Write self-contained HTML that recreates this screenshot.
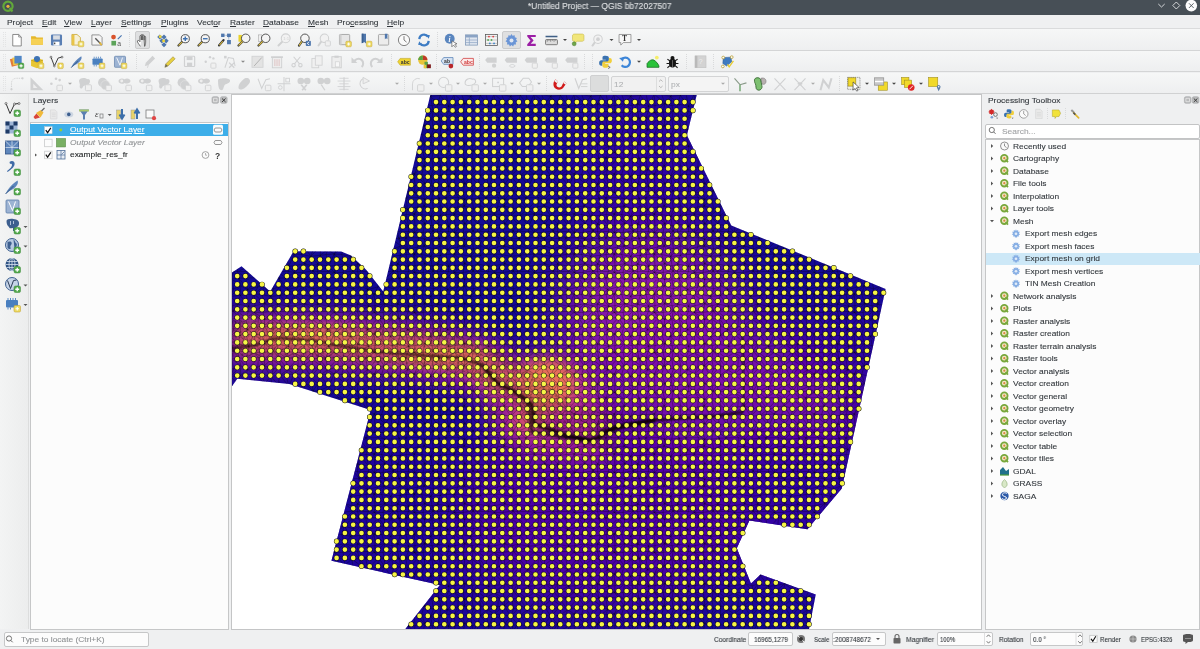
<!DOCTYPE html>
<html><head><meta charset="utf-8"><style>
*{box-sizing:border-box}
body{margin:0;width:1200px;height:649px;overflow:hidden;position:relative;background:#eff0f1;font-family:"Liberation Sans",sans-serif;color:#31363b}
.a{position:absolute}
u{text-decoration-thickness:0.6px;text-underline-offset:1px}
.t{position:absolute;white-space:nowrap;line-height:1;-webkit-text-stroke-width:0.1px;will-change:transform}
</style></head><body>
<div class="a" style="left:0;top:0;width:1200px;height:14.5px;background:#474f56"></div>
<div class="t" style="left:528.30px;top:2.29px;font-size:8.64px;color:#dfe1e3;transform:scaleX(0.975);transform-origin:0 0;">*Untitled Project — QGIS bb72027507</div>
<div class="a" style="left:0;top:14.5px;width:1200px;height:14px;background:#eff0f1;border-bottom:1px solid #dadbdc"></div>
<div class="t" style="left:6.65px;top:18.86px;font-size:7.968px;color:#31363b;transform:scaleX(1.054);transform-origin:0 0;">Project</div>
<div class="t" style="left:41.65px;top:18.86px;font-size:7.968px;color:#31363b;transform:scaleX(1.054);transform-origin:0 0;"><u>E</u>dit</div>
<div class="t" style="left:64.40px;top:18.86px;font-size:7.968px;color:#31363b;transform:scaleX(1.054);transform-origin:0 0;"><u>V</u>iew</div>
<div class="t" style="left:91.35px;top:18.86px;font-size:7.968px;color:#31363b;transform:scaleX(1.054);transform-origin:0 0;"><u>L</u>ayer</div>
<div class="t" style="left:121.10px;top:18.86px;font-size:7.968px;color:#31363b;transform:scaleX(1.054);transform-origin:0 0;"><u>S</u>ettings</div>
<div class="t" style="left:160.70px;top:18.86px;font-size:7.968px;color:#31363b;transform:scaleX(1.054);transform-origin:0 0;"><u>P</u>lugins</div>
<div class="t" style="left:196.90px;top:18.86px;font-size:7.968px;color:#31363b;transform:scaleX(1.054);transform-origin:0 0;">Vect<u>o</u>r</div>
<div class="t" style="left:230.10px;top:18.86px;font-size:7.968px;color:#31363b;transform:scaleX(1.054);transform-origin:0 0;"><u>R</u>aster</div>
<div class="t" style="left:263.00px;top:18.86px;font-size:7.968px;color:#31363b;transform:scaleX(1.054);transform-origin:0 0;"><u>D</u>atabase</div>
<div class="t" style="left:307.60px;top:18.86px;font-size:7.968px;color:#31363b;transform:scaleX(1.054);transform-origin:0 0;"><u>M</u>esh</div>
<div class="t" style="left:336.90px;top:18.86px;font-size:7.968px;color:#31363b;transform:scaleX(1.054);transform-origin:0 0;">Pro<u>c</u>essing</div>
<div class="t" style="left:386.90px;top:18.86px;font-size:7.968px;color:#31363b;transform:scaleX(1.054);transform-origin:0 0;"><u>H</u>elp</div>
<div class="a" style="left:0;top:29px;width:1200px;height:21.5px;background:linear-gradient(#f6f7f7,#eeeff0);border-bottom:1px solid #d4d5d6"></div>
<div class="a" style="left:0;top:51px;width:1200px;height:21px;background:linear-gradient(#f6f7f7,#eeeff0);border-bottom:1px solid #d4d5d6"></div>
<div class="a" style="left:0;top:72.5px;width:1200px;height:21.5px;background:linear-gradient(#f6f7f7,#eeeff0);border-bottom:1px solid #d0d1d2"></div>
<div class="a" style="left:0;top:94px;width:29px;height:535px;background:linear-gradient(90deg,#f3f4f4,#eceded);border-right:1px solid #dcdddd"></div>
<div class="a" style="left:29.5px;top:122px;width:199px;height:508px;background:#fcfcfc;border:1px solid #c6c7c8"></div>
<div class="a" style="left:30px;top:123.5px;width:198px;height:12px;background:#3daee9"></div>
<div class="a" style="left:985px;top:123.5px;width:214.5px;height:15.5px;background:#fff;border:1px solid #c3c4c5;border-radius:2px"></div>
<div class="a" style="left:985px;top:139px;width:215px;height:491px;background:#fcfcfc;border:1px solid #c6c7c8"></div>
<div class="a" style="left:986px;top:252.5px;width:214px;height:12.5px;background:#cde8f7"></div>
<div class="a" style="left:0;top:630px;width:1200px;height:19px;background:#eff0f1"></div>
<div class="a" style="left:3.7px;top:632.3px;width:145.6px;height:14.7px;background:#fcfcfc;border:1px solid #c6c7c8;border-radius:2px"></div>
<div class="a" style="left:748.3px;top:631.8px;width:45.0px;height:14.6px;background:#fcfcfc;border:1px solid #c6c7c8;border-radius:2px"></div>
<div class="a" style="left:831.5px;top:631.8px;width:54.1px;height:14.6px;background:#fcfcfc;border:1px solid #c6c7c8;border-radius:2px"></div>
<div class="a" style="left:937px;top:631.8px;width:55.7px;height:14.6px;background:#fcfcfc;border:1px solid #c6c7c8;border-radius:2px"></div>
<div class="a" style="left:1030.2px;top:631.8px;width:53.3px;height:14.6px;background:#fcfcfc;border:1px solid #c6c7c8;border-radius:2px"></div>
<div class="t" style="left:32.70px;top:97.46px;font-size:7.968px;color:#31363b;transform:scaleX(1.054);transform-origin:0 0;">Layers</div>
<div class="t" style="left:987.70px;top:97.46px;font-size:7.968px;color:#31363b;transform:scaleX(1.054);transform-origin:0 0;">Processing Toolbox</div>
<div class="t" style="left:69.80px;top:126.36px;font-size:7.968px;color:#fff;transform:scaleX(1.054);transform-origin:0 0;text-decoration:underline">Output Vector Layer</div>
<div class="t" style="left:69.80px;top:138.86px;font-size:7.968px;color:#8e9193;transform:scaleX(1.054);transform-origin:0 0;font-style:italic">Output Vector Layer</div>
<div class="t" style="left:69.80px;top:151.36px;font-size:7.968px;color:#232627;transform:scaleX(1.054);transform-origin:0 0;">example_res_fr</div>
<div class="t" style="left:1002.00px;top:128.36px;font-size:7.968px;color:#a0a2a4;transform:scaleX(1.054);transform-origin:0 0;">Search...</div>
<div class="t" style="left:1012.90px;top:142.76px;font-size:7.968px;color:#31363b;transform:scaleX(1.054);transform-origin:0 0;">Recently used</div>
<div class="t" style="left:1012.90px;top:155.26px;font-size:7.968px;color:#31363b;transform:scaleX(1.054);transform-origin:0 0;">Cartography</div>
<div class="t" style="left:1012.90px;top:167.76px;font-size:7.968px;color:#31363b;transform:scaleX(1.054);transform-origin:0 0;">Database</div>
<div class="t" style="left:1012.90px;top:180.26px;font-size:7.968px;color:#31363b;transform:scaleX(1.054);transform-origin:0 0;">File tools</div>
<div class="t" style="left:1012.90px;top:192.76px;font-size:7.968px;color:#31363b;transform:scaleX(1.054);transform-origin:0 0;">Interpolation</div>
<div class="t" style="left:1012.90px;top:205.26px;font-size:7.968px;color:#31363b;transform:scaleX(1.054);transform-origin:0 0;">Layer tools</div>
<div class="t" style="left:1012.90px;top:217.76px;font-size:7.968px;color:#31363b;transform:scaleX(1.054);transform-origin:0 0;">Mesh</div>
<div class="t" style="left:1024.50px;top:230.26px;font-size:7.968px;color:#31363b;transform:scaleX(1.054);transform-origin:0 0;">Export mesh edges</div>
<div class="t" style="left:1024.50px;top:242.76px;font-size:7.968px;color:#31363b;transform:scaleX(1.054);transform-origin:0 0;">Export mesh faces</div>
<div class="t" style="left:1024.50px;top:255.26px;font-size:7.968px;color:#31363b;transform:scaleX(1.054);transform-origin:0 0;">Export mesh on grid</div>
<div class="t" style="left:1024.50px;top:267.76px;font-size:7.968px;color:#31363b;transform:scaleX(1.054);transform-origin:0 0;">Export mesh vertices</div>
<div class="t" style="left:1024.50px;top:280.26px;font-size:7.968px;color:#31363b;transform:scaleX(1.054);transform-origin:0 0;">TIN Mesh Creation</div>
<div class="t" style="left:1012.90px;top:292.76px;font-size:7.968px;color:#31363b;transform:scaleX(1.054);transform-origin:0 0;">Network analysis</div>
<div class="t" style="left:1012.90px;top:305.26px;font-size:7.968px;color:#31363b;transform:scaleX(1.054);transform-origin:0 0;">Plots</div>
<div class="t" style="left:1012.90px;top:317.76px;font-size:7.968px;color:#31363b;transform:scaleX(1.054);transform-origin:0 0;">Raster analysis</div>
<div class="t" style="left:1012.90px;top:330.26px;font-size:7.968px;color:#31363b;transform:scaleX(1.054);transform-origin:0 0;">Raster creation</div>
<div class="t" style="left:1012.90px;top:342.76px;font-size:7.968px;color:#31363b;transform:scaleX(1.054);transform-origin:0 0;">Raster terrain analysis</div>
<div class="t" style="left:1012.90px;top:355.26px;font-size:7.968px;color:#31363b;transform:scaleX(1.054);transform-origin:0 0;">Raster tools</div>
<div class="t" style="left:1012.90px;top:367.76px;font-size:7.968px;color:#31363b;transform:scaleX(1.054);transform-origin:0 0;">Vector analysis</div>
<div class="t" style="left:1012.90px;top:380.26px;font-size:7.968px;color:#31363b;transform:scaleX(1.054);transform-origin:0 0;">Vector creation</div>
<div class="t" style="left:1012.90px;top:392.76px;font-size:7.968px;color:#31363b;transform:scaleX(1.054);transform-origin:0 0;">Vector general</div>
<div class="t" style="left:1012.90px;top:405.26px;font-size:7.968px;color:#31363b;transform:scaleX(1.054);transform-origin:0 0;">Vector geometry</div>
<div class="t" style="left:1012.90px;top:417.76px;font-size:7.968px;color:#31363b;transform:scaleX(1.054);transform-origin:0 0;">Vector overlay</div>
<div class="t" style="left:1012.90px;top:430.26px;font-size:7.968px;color:#31363b;transform:scaleX(1.054);transform-origin:0 0;">Vector selection</div>
<div class="t" style="left:1012.90px;top:442.76px;font-size:7.968px;color:#31363b;transform:scaleX(1.054);transform-origin:0 0;">Vector table</div>
<div class="t" style="left:1012.90px;top:455.26px;font-size:7.968px;color:#31363b;transform:scaleX(1.054);transform-origin:0 0;">Vector tiles</div>
<div class="t" style="left:1012.90px;top:467.76px;font-size:7.968px;color:#31363b;transform:scaleX(1.054);transform-origin:0 0;">GDAL</div>
<div class="t" style="left:1012.90px;top:480.26px;font-size:7.968px;color:#31363b;transform:scaleX(1.054);transform-origin:0 0;">GRASS</div>
<div class="t" style="left:1012.90px;top:492.76px;font-size:7.968px;color:#31363b;transform:scaleX(1.054);transform-origin:0 0;">SAGA</div>
<div class="t" style="left:20.70px;top:636.46px;font-size:7.968px;color:#8f9294;transform:scaleX(1.054);transform-origin:0 0;">Type to locate (Ctrl+K)</div>
<div class="t" style="left:713.50px;top:636.10px;font-size:7.68px;color:#31363b;transform:scaleX(0.860);transform-origin:0 0;">Coordinate</div>
<div class="t" style="left:754.00px;top:636.10px;font-size:7.68px;color:#31363b;transform:scaleX(0.838);transform-origin:0 0;">16965,1279</div>
<div class="t" style="left:814.20px;top:636.10px;font-size:7.68px;color:#31363b;transform:scaleX(0.802);transform-origin:0 0;">Scale</div>
<div class="t" style="left:833.30px;top:636.10px;font-size:7.68px;color:#31363b;transform:scaleX(0.847);transform-origin:0 0;">:2008748672</div>
<div class="t" style="left:906.10px;top:636.10px;font-size:7.68px;color:#31363b;transform:scaleX(0.887);transform-origin:0 0;">Magnifier</div>
<div class="t" style="left:940.00px;top:636.10px;font-size:7.68px;color:#31363b;transform:scaleX(0.769);transform-origin:0 0;">100%</div>
<div class="t" style="left:999.40px;top:636.10px;font-size:7.68px;color:#31363b;transform:scaleX(0.860);transform-origin:0 0;">Rotation</div>
<div class="t" style="left:1033.00px;top:636.10px;font-size:7.68px;color:#31363b;transform:scaleX(0.819);transform-origin:0 0;">0.0 °</div>
<div class="t" style="left:1099.70px;top:636.10px;font-size:7.68px;color:#31363b;transform:scaleX(0.834);transform-origin:0 0;">Render</div>
<div class="t" style="left:1140.50px;top:636.10px;font-size:7.68px;color:#31363b;transform:scaleX(0.772);transform-origin:0 0;">EPSG:4326</div>
<div class="a" style="left:590px;top:75px;width:19px;height:17px;background:#dcdddd;border:1px solid #cfd0d1;border-radius:2px"></div>
<div class="a" style="left:610.6px;top:76px;width:55.5px;height:15.5px;background:#f1f1f1;border:1px solid #d3d4d5;border-radius:2px"></div>
<div class="a" style="left:668px;top:75.5px;width:61px;height:16.5px;background:#f4f4f4;border:1px solid #d3d4d5;border-radius:2px"></div>
<div class="t" style="left:613.50px;top:81.36px;font-size:7.968px;color:#b0b2b4;transform:scaleX(1.054);transform-origin:0 0;">12</div>
<div class="a" style="left:655.5px;top:76.5px;width:1px;height:14.5px;background:#dcdddd"></div>
<div class="t" style="left:670.50px;top:81.36px;font-size:7.968px;color:#b0b2b4;transform:scaleX(1.054);transform-origin:0 0;">px</div>
<div class="a" style="left:134.5px;top:31px;width:15.5px;height:18px;background:#dfe0e1;border:1px solid #cacbcc;border-radius:2px"></div>
<div class="a" style="left:501.8px;top:31px;width:19.5px;height:18px;background:#dfe0e1;border:1px solid #cacbcc;border-radius:2px"></div>
<div class="a" style="left:231px;top:94px;width:751px;height:536px;border:1px solid #c4c5c6;background:#fff"></div>
<svg width="1200" height="649" style="position:absolute;left:0;top:0" viewBox="0 0 1200 649">
<defs>
<clipPath id="cv"><rect x="232" y="95" width="749.5" height="534"/></clipPath>
<clipPath id="pc"><polygon points="430.3,95 696.7,95 686.9,135.3 731.3,225.4 885.6,288.9 841.8,488.5 807.4,529.3 749.4,520.6 736.8,548.2 751,583.6 760.5,574.5 815.7,594.6 808.5,632 403,632 439.9,585.1 331.4,560.8 370.7,410 289.3,384 237.3,378.7 228,392 228,275 241.5,266.3 270.2,291.5 293.6,251.2 341.2,251.5 351,255.4 366.4,270.1 383.2,291.5"/></clipPath>
<filter id="b30" x="-50%" y="-50%" width="200%" height="200%"><feGaussianBlur stdDeviation="25"/></filter>
<filter id="b15" x="-50%" y="-50%" width="200%" height="200%"><feGaussianBlur stdDeviation="12"/></filter>
<filter id="b8" x="-50%" y="-50%" width="200%" height="200%"><feGaussianBlur stdDeviation="7"/></filter>
<filter id="b4" x="-50%" y="-50%" width="200%" height="200%"><feGaussianBlur stdDeviation="4"/></filter>
<filter id="bd" x="0" y="0" width="1200" height="649" filterUnits="userSpaceOnUse"><feGaussianBlur stdDeviation="0.4"/></filter>
<filter id="b1" x="-50%" y="-50%" width="200%" height="200%"><feGaussianBlur stdDeviation="0.8"/></filter>
<pattern id="tri" width="40" height="40" patternUnits="userSpaceOnUse"><path d="M-6.8 -9.1L-2.4 -8.3M-6.8 -9.1L-8.2 -1.0M-6.8 -9.1L-0.9 -1.8M-8.2 -1.0L-0.9 -1.8M-8.2 -1.0L-6.5 9.0M-0.9 -1.8L-6.5 9.0M-6.5 9.0L0.8 5.8M-6.5 9.0L-9.3 16.4M-6.5 9.0L0.2 15.3M-9.3 16.4L0.2 15.3M-9.3 16.4L-7.9 25.9M0.2 15.3L-7.9 25.9M-7.9 25.9L-2.3 24.0M-7.9 25.9L-6.8 30.9M-7.9 25.9L-2.4 31.7M-6.8 30.9L-2.4 31.7M-6.8 30.9L-8.2 39.0M-2.4 31.7L-8.2 39.0M-8.2 39.0L-0.9 38.2M-8.2 39.0L-6.5 49.0M-8.2 39.0L0.8 45.8M-2.4 -8.3L8.4 -8.5M-2.4 -8.3L-0.9 -1.8M8.4 -8.5L-0.9 -1.8M-0.9 -1.8L5.8 -2.1M-0.9 -1.8L0.8 5.8M-0.9 -1.8L7.6 9.7M0.8 5.8L7.6 9.7M0.8 5.8L0.2 15.3M7.6 9.7L0.2 15.3M0.2 15.3L6.1 14.6M0.2 15.3L-2.3 24.0M0.2 15.3L8.7 26.3M-2.3 24.0L8.7 26.3M-2.3 24.0L-2.4 31.7M8.7 26.3L-2.4 31.7M-2.4 31.7L8.4 31.5M-2.4 31.7L-0.9 38.2M-2.4 31.7L5.8 37.9M-0.9 38.2L5.8 37.9M-0.9 38.2L0.8 45.8M5.8 37.9L0.8 45.8M8.4 -8.5L14.4 -7.6M8.4 -8.5L5.8 -2.1M8.4 -8.5L18.4 -2.3M5.8 -2.1L18.4 -2.3M5.8 -2.1L7.6 9.7M18.4 -2.3L7.6 9.7M7.6 9.7L17.8 6.9M7.6 9.7L6.1 14.6M7.6 9.7L14.2 14.0M6.1 14.6L14.2 14.0M6.1 14.6L8.7 26.3M14.2 14.0L8.7 26.3M8.7 26.3L15.0 25.6M8.7 26.3L8.4 31.5M8.7 26.3L14.4 32.4M8.4 31.5L14.4 32.4M8.4 31.5L5.8 37.9M14.4 32.4L5.8 37.9M5.8 37.9L18.4 37.7M5.8 37.9L7.6 49.7M5.8 37.9L17.8 46.9M14.4 -7.6L23.0 -7.6M14.4 -7.6L18.4 -2.3M23.0 -7.6L18.4 -2.3M18.4 -2.3L24.7 -0.7M18.4 -2.3L17.8 6.9M18.4 -2.3L24.2 5.8M17.8 6.9L24.2 5.8M17.8 6.9L14.2 14.0M24.2 5.8L14.2 14.0M14.2 14.0L21.7 14.5M14.2 14.0L15.0 25.6M14.2 14.0L24.9 23.6M15.0 25.6L24.9 23.6M15.0 25.6L14.4 32.4M24.9 23.6L14.4 32.4M14.4 32.4L23.0 32.4M14.4 32.4L18.4 37.7M14.4 32.4L24.7 39.3M18.4 37.7L24.7 39.3M18.4 37.7L17.8 46.9M24.7 39.3L17.8 46.9M23.0 -7.6L33.2 -9.1M23.0 -7.6L24.7 -0.7M23.0 -7.6L31.8 -1.0M24.7 -0.7L31.8 -1.0M24.7 -0.7L24.2 5.8M31.8 -1.0L24.2 5.8M24.2 5.8L33.5 9.0M24.2 5.8L21.7 14.5M24.2 5.8L30.7 16.4M21.7 14.5L30.7 16.4M21.7 14.5L24.9 23.6M30.7 16.4L24.9 23.6M24.9 23.6L32.1 25.9M24.9 23.6L23.0 32.4M24.9 23.6L33.2 30.9M23.0 32.4L33.2 30.9M23.0 32.4L24.7 39.3M33.2 30.9L24.7 39.3M24.7 39.3L31.8 39.0M24.7 39.3L24.2 45.8M24.7 39.3L33.5 49.0M33.2 -9.1L37.6 -8.3M33.2 -9.1L31.8 -1.0M37.6 -8.3L31.8 -1.0M31.8 -1.0L39.1 -1.8M31.8 -1.0L33.5 9.0M31.8 -1.0L40.8 5.8M33.5 9.0L40.8 5.8M33.5 9.0L30.7 16.4M40.8 5.8L30.7 16.4M30.7 16.4L40.2 15.3M30.7 16.4L32.1 25.9M30.7 16.4L37.7 24.0M32.1 25.9L37.7 24.0M32.1 25.9L33.2 30.9M37.7 24.0L33.2 30.9M33.2 30.9L37.6 31.7M33.2 30.9L31.8 39.0M33.2 30.9L39.1 38.2M31.8 39.0L39.1 38.2M31.8 39.0L33.5 49.0M39.1 38.2L33.5 49.0M37.6 -8.3L48.4 -8.5M37.6 -8.3L39.1 -1.8M37.6 -8.3L45.8 -2.1M39.1 -1.8L45.8 -2.1M39.1 -1.8L40.8 5.8M45.8 -2.1L40.8 5.8M40.8 5.8L47.6 9.7M40.8 5.8L40.2 15.3M40.8 5.8L46.1 14.6M40.2 15.3L46.1 14.6M40.2 15.3L37.7 24.0M46.1 14.6L37.7 24.0M37.7 24.0L48.7 26.3M37.7 24.0L37.6 31.7M37.7 24.0L48.4 31.5M37.6 31.7L48.4 31.5M37.6 31.7L39.1 38.2M48.4 31.5L39.1 38.2M39.1 38.2L45.8 37.9M39.1 38.2L40.8 45.8M39.1 38.2L47.6 49.7" fill="none" stroke="#000" stroke-width="0.6" stroke-opacity="0.45"/></pattern>
<pattern id="tri2" width="20" height="20" patternUnits="userSpaceOnUse" patternTransform="rotate(17)"><path d="M-6.8 -9.1L-2.4 -8.3M-6.8 -9.1L-8.2 -1.0M-6.8 -9.1L-0.9 -1.8M-8.2 -1.0L-0.9 -1.8M-8.2 -1.0L-6.5 9.0M-0.9 -1.8L-6.5 9.0M-6.5 9.0L0.8 5.8M-6.5 9.0L-9.3 16.4M-6.5 9.0L0.2 15.3M-9.3 16.4L0.2 15.3M-9.3 16.4L-7.9 25.9M0.2 15.3L-7.9 25.9M-7.9 25.9L-2.3 24.0M-7.9 25.9L-6.8 30.9M-7.9 25.9L-2.4 31.7M-6.8 30.9L-2.4 31.7M-6.8 30.9L-8.2 39.0M-2.4 31.7L-8.2 39.0M-8.2 39.0L-0.9 38.2M-8.2 39.0L-6.5 49.0M-8.2 39.0L0.8 45.8M-2.4 -8.3L8.4 -8.5M-2.4 -8.3L-0.9 -1.8M8.4 -8.5L-0.9 -1.8M-0.9 -1.8L5.8 -2.1M-0.9 -1.8L0.8 5.8M-0.9 -1.8L7.6 9.7M0.8 5.8L7.6 9.7M0.8 5.8L0.2 15.3M7.6 9.7L0.2 15.3M0.2 15.3L6.1 14.6M0.2 15.3L-2.3 24.0M0.2 15.3L8.7 26.3M-2.3 24.0L8.7 26.3M-2.3 24.0L-2.4 31.7M8.7 26.3L-2.4 31.7M-2.4 31.7L8.4 31.5M-2.4 31.7L-0.9 38.2M-2.4 31.7L5.8 37.9M-0.9 38.2L5.8 37.9M-0.9 38.2L0.8 45.8M5.8 37.9L0.8 45.8M8.4 -8.5L14.4 -7.6M8.4 -8.5L5.8 -2.1M8.4 -8.5L18.4 -2.3M5.8 -2.1L18.4 -2.3M5.8 -2.1L7.6 9.7M18.4 -2.3L7.6 9.7M7.6 9.7L17.8 6.9M7.6 9.7L6.1 14.6M7.6 9.7L14.2 14.0M6.1 14.6L14.2 14.0M6.1 14.6L8.7 26.3M14.2 14.0L8.7 26.3M8.7 26.3L15.0 25.6M8.7 26.3L8.4 31.5M8.7 26.3L14.4 32.4M8.4 31.5L14.4 32.4M8.4 31.5L5.8 37.9M14.4 32.4L5.8 37.9M5.8 37.9L18.4 37.7M5.8 37.9L7.6 49.7M5.8 37.9L17.8 46.9M14.4 -7.6L23.0 -7.6M14.4 -7.6L18.4 -2.3M23.0 -7.6L18.4 -2.3M18.4 -2.3L24.7 -0.7M18.4 -2.3L17.8 6.9M18.4 -2.3L24.2 5.8M17.8 6.9L24.2 5.8M17.8 6.9L14.2 14.0M24.2 5.8L14.2 14.0M14.2 14.0L21.7 14.5M14.2 14.0L15.0 25.6M14.2 14.0L24.9 23.6M15.0 25.6L24.9 23.6M15.0 25.6L14.4 32.4M24.9 23.6L14.4 32.4M14.4 32.4L23.0 32.4M14.4 32.4L18.4 37.7M14.4 32.4L24.7 39.3M18.4 37.7L24.7 39.3M18.4 37.7L17.8 46.9M24.7 39.3L17.8 46.9M23.0 -7.6L33.2 -9.1M23.0 -7.6L24.7 -0.7M23.0 -7.6L31.8 -1.0M24.7 -0.7L31.8 -1.0M24.7 -0.7L24.2 5.8M31.8 -1.0L24.2 5.8M24.2 5.8L33.5 9.0M24.2 5.8L21.7 14.5M24.2 5.8L30.7 16.4M21.7 14.5L30.7 16.4M21.7 14.5L24.9 23.6M30.7 16.4L24.9 23.6M24.9 23.6L32.1 25.9M24.9 23.6L23.0 32.4M24.9 23.6L33.2 30.9M23.0 32.4L33.2 30.9M23.0 32.4L24.7 39.3M33.2 30.9L24.7 39.3M24.7 39.3L31.8 39.0M24.7 39.3L24.2 45.8M24.7 39.3L33.5 49.0M33.2 -9.1L37.6 -8.3M33.2 -9.1L31.8 -1.0M37.6 -8.3L31.8 -1.0M31.8 -1.0L39.1 -1.8M31.8 -1.0L33.5 9.0M31.8 -1.0L40.8 5.8M33.5 9.0L40.8 5.8M33.5 9.0L30.7 16.4M40.8 5.8L30.7 16.4M30.7 16.4L40.2 15.3M30.7 16.4L32.1 25.9M30.7 16.4L37.7 24.0M32.1 25.9L37.7 24.0M32.1 25.9L33.2 30.9M37.7 24.0L33.2 30.9M33.2 30.9L37.6 31.7M33.2 30.9L31.8 39.0M33.2 30.9L39.1 38.2M31.8 39.0L39.1 38.2M31.8 39.0L33.5 49.0M39.1 38.2L33.5 49.0M37.6 -8.3L48.4 -8.5M37.6 -8.3L39.1 -1.8M37.6 -8.3L45.8 -2.1M39.1 -1.8L45.8 -2.1M39.1 -1.8L40.8 5.8M45.8 -2.1L40.8 5.8M40.8 5.8L47.6 9.7M40.8 5.8L40.2 15.3M40.8 5.8L46.1 14.6M40.2 15.3L46.1 14.6M40.2 15.3L37.7 24.0M46.1 14.6L37.7 24.0M37.7 24.0L48.7 26.3M37.7 24.0L37.6 31.7M37.7 24.0L48.4 31.5M37.6 31.7L48.4 31.5M37.6 31.7L39.1 38.2M48.4 31.5L39.1 38.2M39.1 38.2L45.8 37.9M39.1 38.2L40.8 45.8M39.1 38.2L47.6 49.7" transform="scale(0.5)" fill="none" stroke="#000" stroke-width="1" stroke-opacity="0.45"/></pattern>
</defs>
<g clip-path="url(#cv)">
<g clip-path="url(#pc)">
<rect x="228" y="90" width="760" height="545" fill="#140a96"/>
<g filter="url(#b30)">
<path d="M480 430 L620 400 L760 330 L880 300 L860 600 L480 560 Z" fill="#3206a6" opacity="0.8"/>
<ellipse cx="600" cy="515" rx="150" ry="100" fill="#5206a6" opacity="0.85"/>
<path d="M330 420 L480 420 L480 629 L330 629Z" fill="#2608a2" opacity="0.6"/>
<ellipse cx="640" cy="175" rx="70" ry="85" fill="#3606a8" opacity="0.75"/>
<ellipse cx="650" cy="298" rx="88" ry="58" fill="#8c14ac"/>
<ellipse cx="610" cy="350" rx="55" ry="40" fill="#8a12ac"/>
<ellipse cx="700" cy="375" rx="95" ry="65" fill="#7a10aa"/>
<ellipse cx="815" cy="405" rx="38" ry="28" fill="#860ea9"/>
</g>
<g filter="url(#b15)">
<path d="M228 340 L330 341 L430 352 L480 364 L530 400 L560 430 L610 438" fill="none" stroke="#9c179e" stroke-width="56" stroke-linejoin="round" opacity="0.95"/>
<ellipse cx="545" cy="405" rx="55" ry="50" fill="#a82296"/>

</g>
<g filter="url(#b8)">
<path d="M236 338 L330 340 L420 350 L470 358 L510 385" fill="none" stroke="#dc5e69" stroke-width="30" stroke-linejoin="round" opacity="0.95"/>
<ellipse cx="545" cy="385" rx="32" ry="26" fill="#e06462"/>
<ellipse cx="528" cy="420" rx="14" ry="12" fill="#d8576b"/>
</g>
<g filter="url(#b4)">
<ellipse cx="310" cy="337" rx="50" ry="9" fill="#ec7853" opacity="0.55"/>
<ellipse cx="440" cy="357" rx="45" ry="9" fill="#ed7953" opacity="0.55"/>
<ellipse cx="548" cy="382" rx="22" ry="18" fill="#ec7853" opacity="0.6"/>
</g>
<rect x="228" y="90" width="760" height="545" fill="url(#tri)"/>
<path d="M228 338 L440 348 L500 370 L560 420 L620 435" fill="none" stroke="url(#tri2)" stroke-width="36" opacity="0.7"/>
<path d="M482 365 L497.7 383.3 L516.2 392.5 L531 403.6 L532.9 409.2 L533.8 424 L544 427.7 L566.2 435 L588.4 440.6 L599.5 437 L614.3 427.7 L630 424 L655 420" fill="none" stroke="#000" stroke-width="8" stroke-linejoin="round" opacity="0.22" filter="url(#b4)"/>
<path d="M482 365 L497.7 383.3 L516.2 392.5 L531 403.6 L532.9 409.2 L533.8 424 L544 427.7 L566.2 435 L588.4 440.6 L599.5 437 L614.3 427.7 L630 424 L655 420" fill="none" stroke="#0a0206" stroke-width="3" stroke-linejoin="round" opacity="0.92" filter="url(#b1)"/>
<path d="M228 349 L252 345.5 L278 338 L316.7 341 L355 348.5 L392 353 L461 358 L482 365" fill="none" stroke="#0a0206" stroke-width="2" stroke-linejoin="round" opacity="0.8" filter="url(#b1)"/>
<path d="M600 432 L655 420 L717 416 L743 412" fill="none" stroke="#0a0206" stroke-width="2.4" stroke-linejoin="round" opacity="0.85" filter="url(#b1)"/>
<path d="M743 412 L744 380 L742 335" fill="none" stroke="#0a0206" stroke-width="2.2" stroke-linejoin="round" opacity="0.6" filter="url(#b1)"/>
<path d="M527 399 L532 432 L589 440" fill="none" stroke="#000" stroke-width="3.5" stroke-linejoin="round" opacity="0.6" filter="url(#b1)"/>
</g>
<g filter="url(#bd)"><path d="M436 102.1h0M444.3 102.1h0M452.6 102.1h0M460.9 102.1h0M469.2 102.1h0M477.5 102.1h0M485.8 102.1h0M494 102.1h0M502.3 102.1h0M510.6 102.1h0M518.9 102.1h0M527.2 102.1h0M535.5 102.1h0M543.8 102.1h0M552.1 102.1h0M560.3 102.1h0M568.6 102.1h0M576.9 102.1h0M585.2 102.1h0M593.5 102.1h0M601.8 102.1h0M610.1 102.1h0M618.4 102.1h0M626.6 102.1h0M634.9 102.1h0M643.2 102.1h0M651.5 102.1h0M659.8 102.1h0M668.1 102.1h0M676.4 102.1h0M684.6 102.1h0M692.9 102.1h0M427.8 110.4h0M436 110.4h0M444.3 110.4h0M452.6 110.4h0M460.9 110.4h0M469.2 110.4h0M477.5 110.4h0M485.8 110.4h0M494 110.4h0M502.3 110.4h0M510.6 110.4h0M518.9 110.4h0M527.2 110.4h0M535.5 110.4h0M543.8 110.4h0M552.1 110.4h0M560.3 110.4h0M568.6 110.4h0M576.9 110.4h0M585.2 110.4h0M593.5 110.4h0M601.8 110.4h0M610.1 110.4h0M618.4 110.4h0M626.6 110.4h0M634.9 110.4h0M643.2 110.4h0M651.5 110.4h0M659.8 110.4h0M668.1 110.4h0M676.4 110.4h0M684.6 110.4h0M692.9 110.4h0M427.8 118.7h0M436 118.7h0M444.3 118.7h0M452.6 118.7h0M460.9 118.7h0M469.2 118.7h0M477.5 118.7h0M485.8 118.7h0M494 118.7h0M502.3 118.7h0M510.6 118.7h0M518.9 118.7h0M527.2 118.7h0M535.5 118.7h0M543.8 118.7h0M552.1 118.7h0M560.3 118.7h0M568.6 118.7h0M576.9 118.7h0M585.2 118.7h0M593.5 118.7h0M601.8 118.7h0M610.1 118.7h0M618.4 118.7h0M626.6 118.7h0M634.9 118.7h0M643.2 118.7h0M651.5 118.7h0M659.8 118.7h0M668.1 118.7h0M676.4 118.7h0M684.6 118.7h0M427.8 127h0M436 127h0M444.3 127h0M452.6 127h0M460.9 127h0M469.2 127h0M477.5 127h0M485.8 127h0M494 127h0M502.3 127h0M510.6 127h0M518.9 127h0M527.2 127h0M535.5 127h0M543.8 127h0M552.1 127h0M560.3 127h0M568.6 127h0M576.9 127h0M585.2 127h0M593.5 127h0M601.8 127h0M610.1 127h0M618.4 127h0M626.6 127h0M634.9 127h0M643.2 127h0M651.5 127h0M659.8 127h0M668.1 127h0M676.4 127h0M684.6 127h0M427.8 135.2h0M436 135.2h0M444.3 135.2h0M452.6 135.2h0M460.9 135.2h0M469.2 135.2h0M477.5 135.2h0M485.8 135.2h0M494 135.2h0M502.3 135.2h0M510.6 135.2h0M518.9 135.2h0M527.2 135.2h0M535.5 135.2h0M543.8 135.2h0M552.1 135.2h0M560.3 135.2h0M568.6 135.2h0M576.9 135.2h0M585.2 135.2h0M593.5 135.2h0M601.8 135.2h0M610.1 135.2h0M618.4 135.2h0M626.6 135.2h0M634.9 135.2h0M643.2 135.2h0M651.5 135.2h0M659.8 135.2h0M668.1 135.2h0M676.4 135.2h0M684.6 135.2h0M419.5 143.5h0M427.8 143.5h0M436 143.5h0M444.3 143.5h0M452.6 143.5h0M460.9 143.5h0M469.2 143.5h0M477.5 143.5h0M485.8 143.5h0M494 143.5h0M502.3 143.5h0M510.6 143.5h0M518.9 143.5h0M527.2 143.5h0M535.5 143.5h0M543.8 143.5h0M552.1 143.5h0M560.3 143.5h0M568.6 143.5h0M576.9 143.5h0M585.2 143.5h0M593.5 143.5h0M601.8 143.5h0M610.1 143.5h0M618.4 143.5h0M626.6 143.5h0M634.9 143.5h0M643.2 143.5h0M651.5 143.5h0M659.8 143.5h0M668.1 143.5h0M676.4 143.5h0M684.6 143.5h0M419.5 151.8h0M427.8 151.8h0M436 151.8h0M444.3 151.8h0M452.6 151.8h0M460.9 151.8h0M469.2 151.8h0M477.5 151.8h0M485.8 151.8h0M494 151.8h0M502.3 151.8h0M510.6 151.8h0M518.9 151.8h0M527.2 151.8h0M535.5 151.8h0M543.8 151.8h0M552.1 151.8h0M560.3 151.8h0M568.6 151.8h0M576.9 151.8h0M585.2 151.8h0M593.5 151.8h0M601.8 151.8h0M610.1 151.8h0M618.4 151.8h0M626.6 151.8h0M634.9 151.8h0M643.2 151.8h0M651.5 151.8h0M659.8 151.8h0M668.1 151.8h0M676.4 151.8h0M684.6 151.8h0M692.9 151.8h0M419.5 160.1h0M427.8 160.1h0M436 160.1h0M444.3 160.1h0M452.6 160.1h0M460.9 160.1h0M469.2 160.1h0M477.5 160.1h0M485.8 160.1h0M494 160.1h0M502.3 160.1h0M510.6 160.1h0M518.9 160.1h0M527.2 160.1h0M535.5 160.1h0M543.8 160.1h0M552.1 160.1h0M560.3 160.1h0M568.6 160.1h0M576.9 160.1h0M585.2 160.1h0M593.5 160.1h0M601.8 160.1h0M610.1 160.1h0M618.4 160.1h0M626.6 160.1h0M634.9 160.1h0M643.2 160.1h0M651.5 160.1h0M659.8 160.1h0M668.1 160.1h0M676.4 160.1h0M684.6 160.1h0M692.9 160.1h0M419.5 168.4h0M427.8 168.4h0M436 168.4h0M444.3 168.4h0M452.6 168.4h0M460.9 168.4h0M469.2 168.4h0M477.5 168.4h0M485.8 168.4h0M494 168.4h0M502.3 168.4h0M510.6 168.4h0M518.9 168.4h0M527.2 168.4h0M535.5 168.4h0M543.8 168.4h0M552.1 168.4h0M560.3 168.4h0M568.6 168.4h0M576.9 168.4h0M585.2 168.4h0M593.5 168.4h0M601.8 168.4h0M610.1 168.4h0M618.4 168.4h0M626.6 168.4h0M634.9 168.4h0M643.2 168.4h0M651.5 168.4h0M659.8 168.4h0M668.1 168.4h0M676.4 168.4h0M684.6 168.4h0M692.9 168.4h0M701.2 168.4h0M411.2 176.7h0M419.5 176.7h0M427.8 176.7h0M436 176.7h0M444.3 176.7h0M452.6 176.7h0M460.9 176.7h0M469.2 176.7h0M477.5 176.7h0M485.8 176.7h0M494 176.7h0M502.3 176.7h0M510.6 176.7h0M518.9 176.7h0M527.2 176.7h0M535.5 176.7h0M543.8 176.7h0M552.1 176.7h0M560.3 176.7h0M568.6 176.7h0M576.9 176.7h0M585.2 176.7h0M593.5 176.7h0M601.8 176.7h0M610.1 176.7h0M618.4 176.7h0M626.6 176.7h0M634.9 176.7h0M643.2 176.7h0M651.5 176.7h0M659.8 176.7h0M668.1 176.7h0M676.4 176.7h0M684.6 176.7h0M692.9 176.7h0M701.2 176.7h0M411.2 185h0M419.5 185h0M427.8 185h0M436 185h0M444.3 185h0M452.6 185h0M460.9 185h0M469.2 185h0M477.5 185h0M485.8 185h0M494 185h0M502.3 185h0M510.6 185h0M518.9 185h0M527.2 185h0M535.5 185h0M543.8 185h0M552.1 185h0M560.3 185h0M568.6 185h0M576.9 185h0M585.2 185h0M593.5 185h0M601.8 185h0M610.1 185h0M618.4 185h0M626.6 185h0M634.9 185h0M643.2 185h0M651.5 185h0M659.8 185h0M668.1 185h0M676.4 185h0M684.6 185h0M692.9 185h0M701.2 185h0M709.5 185h0M411.2 193.3h0M419.5 193.3h0M427.8 193.3h0M436 193.3h0M444.3 193.3h0M452.6 193.3h0M460.9 193.3h0M469.2 193.3h0M477.5 193.3h0M485.8 193.3h0M494 193.3h0M502.3 193.3h0M510.6 193.3h0M518.9 193.3h0M527.2 193.3h0M535.5 193.3h0M543.8 193.3h0M552.1 193.3h0M560.3 193.3h0M568.6 193.3h0M576.9 193.3h0M585.2 193.3h0M593.5 193.3h0M601.8 193.3h0M610.1 193.3h0M618.4 193.3h0M626.6 193.3h0M634.9 193.3h0M643.2 193.3h0M651.5 193.3h0M659.8 193.3h0M668.1 193.3h0M676.4 193.3h0M684.6 193.3h0M692.9 193.3h0M701.2 193.3h0M709.5 193.3h0M411.2 201.5h0M419.5 201.5h0M427.8 201.5h0M436 201.5h0M444.3 201.5h0M452.6 201.5h0M460.9 201.5h0M469.2 201.5h0M477.5 201.5h0M485.8 201.5h0M494 201.5h0M502.3 201.5h0M510.6 201.5h0M518.9 201.5h0M527.2 201.5h0M535.5 201.5h0M543.8 201.5h0M552.1 201.5h0M560.3 201.5h0M568.6 201.5h0M576.9 201.5h0M585.2 201.5h0M593.5 201.5h0M601.8 201.5h0M610.1 201.5h0M618.4 201.5h0M626.6 201.5h0M634.9 201.5h0M643.2 201.5h0M651.5 201.5h0M659.8 201.5h0M668.1 201.5h0M676.4 201.5h0M684.6 201.5h0M692.9 201.5h0M701.2 201.5h0M709.5 201.5h0M717.8 201.5h0M402.9 209.8h0M411.2 209.8h0M419.5 209.8h0M427.8 209.8h0M436 209.8h0M444.3 209.8h0M452.6 209.8h0M460.9 209.8h0M469.2 209.8h0M477.5 209.8h0M485.8 209.8h0M494 209.8h0M502.3 209.8h0M510.6 209.8h0M518.9 209.8h0M527.2 209.8h0M535.5 209.8h0M543.8 209.8h0M552.1 209.8h0M560.3 209.8h0M568.6 209.8h0M576.9 209.8h0M585.2 209.8h0M593.5 209.8h0M601.8 209.8h0M610.1 209.8h0M618.4 209.8h0M626.6 209.8h0M634.9 209.8h0M643.2 209.8h0M651.5 209.8h0M659.8 209.8h0M668.1 209.8h0M676.4 209.8h0M684.6 209.8h0M692.9 209.8h0M701.2 209.8h0M709.5 209.8h0M717.8 209.8h0M402.9 218.1h0M411.2 218.1h0M419.5 218.1h0M427.8 218.1h0M436 218.1h0M444.3 218.1h0M452.6 218.1h0M460.9 218.1h0M469.2 218.1h0M477.5 218.1h0M485.8 218.1h0M494 218.1h0M502.3 218.1h0M510.6 218.1h0M518.9 218.1h0M527.2 218.1h0M535.5 218.1h0M543.8 218.1h0M552.1 218.1h0M560.3 218.1h0M568.6 218.1h0M576.9 218.1h0M585.2 218.1h0M593.5 218.1h0M601.8 218.1h0M610.1 218.1h0M618.4 218.1h0M626.6 218.1h0M634.9 218.1h0M643.2 218.1h0M651.5 218.1h0M659.8 218.1h0M668.1 218.1h0M676.4 218.1h0M684.6 218.1h0M692.9 218.1h0M701.2 218.1h0M709.5 218.1h0M717.8 218.1h0M726.1 218.1h0M402.9 226.4h0M411.2 226.4h0M419.5 226.4h0M427.8 226.4h0M436 226.4h0M444.3 226.4h0M452.6 226.4h0M460.9 226.4h0M469.2 226.4h0M477.5 226.4h0M485.8 226.4h0M494 226.4h0M502.3 226.4h0M510.6 226.4h0M518.9 226.4h0M527.2 226.4h0M535.5 226.4h0M543.8 226.4h0M552.1 226.4h0M560.3 226.4h0M568.6 226.4h0M576.9 226.4h0M585.2 226.4h0M593.5 226.4h0M601.8 226.4h0M610.1 226.4h0M618.4 226.4h0M626.6 226.4h0M634.9 226.4h0M643.2 226.4h0M651.5 226.4h0M659.8 226.4h0M668.1 226.4h0M676.4 226.4h0M684.6 226.4h0M692.9 226.4h0M701.2 226.4h0M709.5 226.4h0M717.8 226.4h0M726.1 226.4h0M402.9 234.7h0M411.2 234.7h0M419.5 234.7h0M427.8 234.7h0M436 234.7h0M444.3 234.7h0M452.6 234.7h0M460.9 234.7h0M469.2 234.7h0M477.5 234.7h0M485.8 234.7h0M494 234.7h0M502.3 234.7h0M510.6 234.7h0M518.9 234.7h0M527.2 234.7h0M535.5 234.7h0M543.8 234.7h0M552.1 234.7h0M560.3 234.7h0M568.6 234.7h0M576.9 234.7h0M585.2 234.7h0M593.5 234.7h0M601.8 234.7h0M610.1 234.7h0M618.4 234.7h0M626.6 234.7h0M634.9 234.7h0M643.2 234.7h0M651.5 234.7h0M659.8 234.7h0M668.1 234.7h0M676.4 234.7h0M684.6 234.7h0M692.9 234.7h0M701.2 234.7h0M709.5 234.7h0M717.8 234.7h0M726.1 234.7h0M734.4 234.7h0M742.7 234.7h0M750.9 234.7h0M402.9 243h0M411.2 243h0M419.5 243h0M427.8 243h0M436 243h0M444.3 243h0M452.6 243h0M460.9 243h0M469.2 243h0M477.5 243h0M485.8 243h0M494 243h0M502.3 243h0M510.6 243h0M518.9 243h0M527.2 243h0M535.5 243h0M543.8 243h0M552.1 243h0M560.3 243h0M568.6 243h0M576.9 243h0M585.2 243h0M593.5 243h0M601.8 243h0M610.1 243h0M618.4 243h0M626.6 243h0M634.9 243h0M643.2 243h0M651.5 243h0M659.8 243h0M668.1 243h0M676.4 243h0M684.6 243h0M692.9 243h0M701.2 243h0M709.5 243h0M717.8 243h0M726.1 243h0M734.4 243h0M742.7 243h0M750.9 243h0M759.2 243h0M767.5 243h0M295.2 251.3h0M303.4 251.3h0M394.6 251.3h0M402.9 251.3h0M411.2 251.3h0M419.5 251.3h0M427.8 251.3h0M436 251.3h0M444.3 251.3h0M452.6 251.3h0M460.9 251.3h0M469.2 251.3h0M477.5 251.3h0M485.8 251.3h0M494 251.3h0M502.3 251.3h0M510.6 251.3h0M518.9 251.3h0M527.2 251.3h0M535.5 251.3h0M543.8 251.3h0M552.1 251.3h0M560.3 251.3h0M568.6 251.3h0M576.9 251.3h0M585.2 251.3h0M593.5 251.3h0M601.8 251.3h0M610.1 251.3h0M618.4 251.3h0M626.6 251.3h0M634.9 251.3h0M643.2 251.3h0M651.5 251.3h0M659.8 251.3h0M668.1 251.3h0M676.4 251.3h0M684.6 251.3h0M692.9 251.3h0M701.2 251.3h0M709.5 251.3h0M717.8 251.3h0M726.1 251.3h0M734.4 251.3h0M742.7 251.3h0M750.9 251.3h0M759.2 251.3h0M767.5 251.3h0M775.8 251.3h0M784.1 251.3h0M792.4 251.3h0M295.2 259.6h0M303.4 259.6h0M311.7 259.6h0M320 259.6h0M328.3 259.6h0M336.6 259.6h0M344.9 259.6h0M353.2 259.6h0M394.6 259.6h0M402.9 259.6h0M411.2 259.6h0M419.5 259.6h0M427.8 259.6h0M436 259.6h0M444.3 259.6h0M452.6 259.6h0M460.9 259.6h0M469.2 259.6h0M477.5 259.6h0M485.8 259.6h0M494 259.6h0M502.3 259.6h0M510.6 259.6h0M518.9 259.6h0M527.2 259.6h0M535.5 259.6h0M543.8 259.6h0M552.1 259.6h0M560.3 259.6h0M568.6 259.6h0M576.9 259.6h0M585.2 259.6h0M593.5 259.6h0M601.8 259.6h0M610.1 259.6h0M618.4 259.6h0M626.6 259.6h0M634.9 259.6h0M643.2 259.6h0M651.5 259.6h0M659.8 259.6h0M668.1 259.6h0M676.4 259.6h0M684.6 259.6h0M692.9 259.6h0M701.2 259.6h0M709.5 259.6h0M717.8 259.6h0M726.1 259.6h0M734.4 259.6h0M742.7 259.6h0M750.9 259.6h0M759.2 259.6h0M767.5 259.6h0M775.8 259.6h0M784.1 259.6h0M792.4 259.6h0M800.7 259.6h0M809 259.6h0M286.9 267.8h0M295.2 267.8h0M303.4 267.8h0M311.7 267.8h0M320 267.8h0M328.3 267.8h0M336.6 267.8h0M344.9 267.8h0M353.2 267.8h0M361.5 267.8h0M394.6 267.8h0M402.9 267.8h0M411.2 267.8h0M419.5 267.8h0M427.8 267.8h0M436 267.8h0M444.3 267.8h0M452.6 267.8h0M460.9 267.8h0M469.2 267.8h0M477.5 267.8h0M485.8 267.8h0M494 267.8h0M502.3 267.8h0M510.6 267.8h0M518.9 267.8h0M527.2 267.8h0M535.5 267.8h0M543.8 267.8h0M552.1 267.8h0M560.3 267.8h0M568.6 267.8h0M576.9 267.8h0M585.2 267.8h0M593.5 267.8h0M601.8 267.8h0M610.1 267.8h0M618.4 267.8h0M626.6 267.8h0M634.9 267.8h0M643.2 267.8h0M651.5 267.8h0M659.8 267.8h0M668.1 267.8h0M676.4 267.8h0M684.6 267.8h0M692.9 267.8h0M701.2 267.8h0M709.5 267.8h0M717.8 267.8h0M726.1 267.8h0M734.4 267.8h0M742.7 267.8h0M750.9 267.8h0M759.2 267.8h0M767.5 267.8h0M775.8 267.8h0M784.1 267.8h0M792.4 267.8h0M800.7 267.8h0M809 267.8h0M817.2 267.8h0M825.5 267.8h0M833.8 267.8h0M237.2 276.1h0M245.4 276.1h0M286.9 276.1h0M295.2 276.1h0M303.4 276.1h0M311.7 276.1h0M320 276.1h0M328.3 276.1h0M336.6 276.1h0M344.9 276.1h0M353.2 276.1h0M361.5 276.1h0M369.7 276.1h0M394.6 276.1h0M402.9 276.1h0M411.2 276.1h0M419.5 276.1h0M427.8 276.1h0M436 276.1h0M444.3 276.1h0M452.6 276.1h0M460.9 276.1h0M469.2 276.1h0M477.5 276.1h0M485.8 276.1h0M494 276.1h0M502.3 276.1h0M510.6 276.1h0M518.9 276.1h0M527.2 276.1h0M535.5 276.1h0M543.8 276.1h0M552.1 276.1h0M560.3 276.1h0M568.6 276.1h0M576.9 276.1h0M585.2 276.1h0M593.5 276.1h0M601.8 276.1h0M610.1 276.1h0M618.4 276.1h0M626.6 276.1h0M634.9 276.1h0M643.2 276.1h0M651.5 276.1h0M659.8 276.1h0M668.1 276.1h0M676.4 276.1h0M684.6 276.1h0M692.9 276.1h0M701.2 276.1h0M709.5 276.1h0M717.8 276.1h0M726.1 276.1h0M734.4 276.1h0M742.7 276.1h0M750.9 276.1h0M759.2 276.1h0M767.5 276.1h0M775.8 276.1h0M784.1 276.1h0M792.4 276.1h0M800.7 276.1h0M809 276.1h0M817.2 276.1h0M825.5 276.1h0M833.8 276.1h0M842.1 276.1h0M850.4 276.1h0M237.2 284.4h0M245.4 284.4h0M253.7 284.4h0M262 284.4h0M278.6 284.4h0M286.9 284.4h0M295.2 284.4h0M303.4 284.4h0M311.7 284.4h0M320 284.4h0M328.3 284.4h0M336.6 284.4h0M344.9 284.4h0M353.2 284.4h0M361.5 284.4h0M369.7 284.4h0M386.3 284.4h0M394.6 284.4h0M402.9 284.4h0M411.2 284.4h0M419.5 284.4h0M427.8 284.4h0M436 284.4h0M444.3 284.4h0M452.6 284.4h0M460.9 284.4h0M469.2 284.4h0M477.5 284.4h0M485.8 284.4h0M494 284.4h0M502.3 284.4h0M510.6 284.4h0M518.9 284.4h0M527.2 284.4h0M535.5 284.4h0M543.8 284.4h0M552.1 284.4h0M560.3 284.4h0M568.6 284.4h0M576.9 284.4h0M585.2 284.4h0M593.5 284.4h0M601.8 284.4h0M610.1 284.4h0M618.4 284.4h0M626.6 284.4h0M634.9 284.4h0M643.2 284.4h0M651.5 284.4h0M659.8 284.4h0M668.1 284.4h0M676.4 284.4h0M684.6 284.4h0M692.9 284.4h0M701.2 284.4h0M709.5 284.4h0M717.8 284.4h0M726.1 284.4h0M734.4 284.4h0M742.7 284.4h0M750.9 284.4h0M759.2 284.4h0M767.5 284.4h0M775.8 284.4h0M784.1 284.4h0M792.4 284.4h0M800.7 284.4h0M809 284.4h0M817.2 284.4h0M825.5 284.4h0M833.8 284.4h0M842.1 284.4h0M850.4 284.4h0M858.7 284.4h0M867 284.4h0M237.2 292.7h0M245.4 292.7h0M253.7 292.7h0M262 292.7h0M270.3 292.7h0M278.6 292.7h0M286.9 292.7h0M295.2 292.7h0M303.4 292.7h0M311.7 292.7h0M320 292.7h0M328.3 292.7h0M336.6 292.7h0M344.9 292.7h0M353.2 292.7h0M361.5 292.7h0M369.7 292.7h0M378 292.7h0M386.3 292.7h0M394.6 292.7h0M402.9 292.7h0M411.2 292.7h0M419.5 292.7h0M427.8 292.7h0M436 292.7h0M444.3 292.7h0M452.6 292.7h0M460.9 292.7h0M469.2 292.7h0M477.5 292.7h0M485.8 292.7h0M494 292.7h0M502.3 292.7h0M510.6 292.7h0M518.9 292.7h0M527.2 292.7h0M535.5 292.7h0M543.8 292.7h0M552.1 292.7h0M560.3 292.7h0M568.6 292.7h0M576.9 292.7h0M585.2 292.7h0M593.5 292.7h0M601.8 292.7h0M610.1 292.7h0M618.4 292.7h0M626.6 292.7h0M634.9 292.7h0M643.2 292.7h0M651.5 292.7h0M659.8 292.7h0M668.1 292.7h0M676.4 292.7h0M684.6 292.7h0M692.9 292.7h0M701.2 292.7h0M709.5 292.7h0M717.8 292.7h0M726.1 292.7h0M734.4 292.7h0M742.7 292.7h0M750.9 292.7h0M759.2 292.7h0M767.5 292.7h0M775.8 292.7h0M784.1 292.7h0M792.4 292.7h0M800.7 292.7h0M809 292.7h0M817.2 292.7h0M825.5 292.7h0M833.8 292.7h0M842.1 292.7h0M850.4 292.7h0M858.7 292.7h0M867 292.7h0M875.2 292.7h0M883.5 292.7h0M237.2 301h0M245.4 301h0M253.7 301h0M262 301h0M270.3 301h0M278.6 301h0M286.9 301h0M295.2 301h0M303.4 301h0M311.7 301h0M320 301h0M328.3 301h0M336.6 301h0M344.9 301h0M353.2 301h0M361.5 301h0M369.7 301h0M378 301h0M386.3 301h0M394.6 301h0M402.9 301h0M411.2 301h0M419.5 301h0M427.8 301h0M436 301h0M444.3 301h0M452.6 301h0M460.9 301h0M469.2 301h0M477.5 301h0M485.8 301h0M494 301h0M502.3 301h0M510.6 301h0M518.9 301h0M527.2 301h0M535.5 301h0M543.8 301h0M552.1 301h0M560.3 301h0M568.6 301h0M576.9 301h0M585.2 301h0M593.5 301h0M601.8 301h0M610.1 301h0M618.4 301h0M626.6 301h0M634.9 301h0M643.2 301h0M651.5 301h0M659.8 301h0M668.1 301h0M676.4 301h0M684.6 301h0M692.9 301h0M701.2 301h0M709.5 301h0M717.8 301h0M726.1 301h0M734.4 301h0M742.7 301h0M750.9 301h0M759.2 301h0M767.5 301h0M775.8 301h0M784.1 301h0M792.4 301h0M800.7 301h0M809 301h0M817.2 301h0M825.5 301h0M833.8 301h0M842.1 301h0M850.4 301h0M858.7 301h0M867 301h0M875.2 301h0M237.2 309.3h0M245.4 309.3h0M253.7 309.3h0M262 309.3h0M270.3 309.3h0M278.6 309.3h0M286.9 309.3h0M295.2 309.3h0M303.4 309.3h0M311.7 309.3h0M320 309.3h0M328.3 309.3h0M336.6 309.3h0M344.9 309.3h0M353.2 309.3h0M361.5 309.3h0M369.7 309.3h0M378 309.3h0M386.3 309.3h0M394.6 309.3h0M402.9 309.3h0M411.2 309.3h0M419.5 309.3h0M427.8 309.3h0M436 309.3h0M444.3 309.3h0M452.6 309.3h0M460.9 309.3h0M469.2 309.3h0M477.5 309.3h0M485.8 309.3h0M494 309.3h0M502.3 309.3h0M510.6 309.3h0M518.9 309.3h0M527.2 309.3h0M535.5 309.3h0M543.8 309.3h0M552.1 309.3h0M560.3 309.3h0M568.6 309.3h0M576.9 309.3h0M585.2 309.3h0M593.5 309.3h0M601.8 309.3h0M610.1 309.3h0M618.4 309.3h0M626.6 309.3h0M634.9 309.3h0M643.2 309.3h0M651.5 309.3h0M659.8 309.3h0M668.1 309.3h0M676.4 309.3h0M684.6 309.3h0M692.9 309.3h0M701.2 309.3h0M709.5 309.3h0M717.8 309.3h0M726.1 309.3h0M734.4 309.3h0M742.7 309.3h0M750.9 309.3h0M759.2 309.3h0M767.5 309.3h0M775.8 309.3h0M784.1 309.3h0M792.4 309.3h0M800.7 309.3h0M809 309.3h0M817.2 309.3h0M825.5 309.3h0M833.8 309.3h0M842.1 309.3h0M850.4 309.3h0M858.7 309.3h0M867 309.3h0M875.2 309.3h0M237.2 317.6h0M245.4 317.6h0M253.7 317.6h0M262 317.6h0M270.3 317.6h0M278.6 317.6h0M286.9 317.6h0M295.2 317.6h0M303.4 317.6h0M311.7 317.6h0M320 317.6h0M328.3 317.6h0M336.6 317.6h0M344.9 317.6h0M353.2 317.6h0M361.5 317.6h0M369.7 317.6h0M378 317.6h0M386.3 317.6h0M394.6 317.6h0M402.9 317.6h0M411.2 317.6h0M419.5 317.6h0M427.8 317.6h0M436 317.6h0M444.3 317.6h0M452.6 317.6h0M460.9 317.6h0M469.2 317.6h0M477.5 317.6h0M485.8 317.6h0M494 317.6h0M502.3 317.6h0M510.6 317.6h0M518.9 317.6h0M527.2 317.6h0M535.5 317.6h0M543.8 317.6h0M552.1 317.6h0M560.3 317.6h0M568.6 317.6h0M576.9 317.6h0M585.2 317.6h0M593.5 317.6h0M601.8 317.6h0M610.1 317.6h0M618.4 317.6h0M626.6 317.6h0M634.9 317.6h0M643.2 317.6h0M651.5 317.6h0M659.8 317.6h0M668.1 317.6h0M676.4 317.6h0M684.6 317.6h0M692.9 317.6h0M701.2 317.6h0M709.5 317.6h0M717.8 317.6h0M726.1 317.6h0M734.4 317.6h0M742.7 317.6h0M750.9 317.6h0M759.2 317.6h0M767.5 317.6h0M775.8 317.6h0M784.1 317.6h0M792.4 317.6h0M800.7 317.6h0M809 317.6h0M817.2 317.6h0M825.5 317.6h0M833.8 317.6h0M842.1 317.6h0M850.4 317.6h0M858.7 317.6h0M867 317.6h0M875.2 317.6h0M237.2 325.8h0M245.4 325.8h0M253.7 325.8h0M262 325.8h0M270.3 325.8h0M278.6 325.8h0M286.9 325.8h0M295.2 325.8h0M303.4 325.8h0M311.7 325.8h0M320 325.8h0M328.3 325.8h0M336.6 325.8h0M344.9 325.8h0M353.2 325.8h0M361.5 325.8h0M369.7 325.8h0M378 325.8h0M386.3 325.8h0M394.6 325.8h0M402.9 325.8h0M411.2 325.8h0M419.5 325.8h0M427.8 325.8h0M436 325.8h0M444.3 325.8h0M452.6 325.8h0M460.9 325.8h0M469.2 325.8h0M477.5 325.8h0M485.8 325.8h0M494 325.8h0M502.3 325.8h0M510.6 325.8h0M518.9 325.8h0M527.2 325.8h0M535.5 325.8h0M543.8 325.8h0M552.1 325.8h0M560.3 325.8h0M568.6 325.8h0M576.9 325.8h0M585.2 325.8h0M593.5 325.8h0M601.8 325.8h0M610.1 325.8h0M618.4 325.8h0M626.6 325.8h0M634.9 325.8h0M643.2 325.8h0M651.5 325.8h0M659.8 325.8h0M668.1 325.8h0M676.4 325.8h0M684.6 325.8h0M692.9 325.8h0M701.2 325.8h0M709.5 325.8h0M717.8 325.8h0M726.1 325.8h0M734.4 325.8h0M742.7 325.8h0M750.9 325.8h0M759.2 325.8h0M767.5 325.8h0M775.8 325.8h0M784.1 325.8h0M792.4 325.8h0M800.7 325.8h0M809 325.8h0M817.2 325.8h0M825.5 325.8h0M833.8 325.8h0M842.1 325.8h0M850.4 325.8h0M858.7 325.8h0M867 325.8h0M875.2 325.8h0M237.2 334.1h0M245.4 334.1h0M253.7 334.1h0M262 334.1h0M270.3 334.1h0M278.6 334.1h0M286.9 334.1h0M295.2 334.1h0M303.4 334.1h0M311.7 334.1h0M320 334.1h0M328.3 334.1h0M336.6 334.1h0M344.9 334.1h0M353.2 334.1h0M361.5 334.1h0M369.7 334.1h0M378 334.1h0M386.3 334.1h0M394.6 334.1h0M402.9 334.1h0M411.2 334.1h0M419.5 334.1h0M427.8 334.1h0M436 334.1h0M444.3 334.1h0M452.6 334.1h0M460.9 334.1h0M469.2 334.1h0M477.5 334.1h0M485.8 334.1h0M494 334.1h0M502.3 334.1h0M510.6 334.1h0M518.9 334.1h0M527.2 334.1h0M535.5 334.1h0M543.8 334.1h0M552.1 334.1h0M560.3 334.1h0M568.6 334.1h0M576.9 334.1h0M585.2 334.1h0M593.5 334.1h0M601.8 334.1h0M610.1 334.1h0M618.4 334.1h0M626.6 334.1h0M634.9 334.1h0M643.2 334.1h0M651.5 334.1h0M659.8 334.1h0M668.1 334.1h0M676.4 334.1h0M684.6 334.1h0M692.9 334.1h0M701.2 334.1h0M709.5 334.1h0M717.8 334.1h0M726.1 334.1h0M734.4 334.1h0M742.7 334.1h0M750.9 334.1h0M759.2 334.1h0M767.5 334.1h0M775.8 334.1h0M784.1 334.1h0M792.4 334.1h0M800.7 334.1h0M809 334.1h0M817.2 334.1h0M825.5 334.1h0M833.8 334.1h0M842.1 334.1h0M850.4 334.1h0M858.7 334.1h0M867 334.1h0M875.2 334.1h0M237.2 342.4h0M245.4 342.4h0M253.7 342.4h0M262 342.4h0M270.3 342.4h0M278.6 342.4h0M286.9 342.4h0M295.2 342.4h0M303.4 342.4h0M311.7 342.4h0M320 342.4h0M328.3 342.4h0M336.6 342.4h0M344.9 342.4h0M353.2 342.4h0M361.5 342.4h0M369.7 342.4h0M378 342.4h0M386.3 342.4h0M394.6 342.4h0M402.9 342.4h0M411.2 342.4h0M419.5 342.4h0M427.8 342.4h0M436 342.4h0M444.3 342.4h0M452.6 342.4h0M460.9 342.4h0M469.2 342.4h0M477.5 342.4h0M485.8 342.4h0M494 342.4h0M502.3 342.4h0M510.6 342.4h0M518.9 342.4h0M527.2 342.4h0M535.5 342.4h0M543.8 342.4h0M552.1 342.4h0M560.3 342.4h0M568.6 342.4h0M576.9 342.4h0M585.2 342.4h0M593.5 342.4h0M601.8 342.4h0M610.1 342.4h0M618.4 342.4h0M626.6 342.4h0M634.9 342.4h0M643.2 342.4h0M651.5 342.4h0M659.8 342.4h0M668.1 342.4h0M676.4 342.4h0M684.6 342.4h0M692.9 342.4h0M701.2 342.4h0M709.5 342.4h0M717.8 342.4h0M726.1 342.4h0M734.4 342.4h0M742.7 342.4h0M750.9 342.4h0M759.2 342.4h0M767.5 342.4h0M775.8 342.4h0M784.1 342.4h0M792.4 342.4h0M800.7 342.4h0M809 342.4h0M817.2 342.4h0M825.5 342.4h0M833.8 342.4h0M842.1 342.4h0M850.4 342.4h0M858.7 342.4h0M867 342.4h0M237.2 350.7h0M245.4 350.7h0M253.7 350.7h0M262 350.7h0M270.3 350.7h0M278.6 350.7h0M286.9 350.7h0M295.2 350.7h0M303.4 350.7h0M311.7 350.7h0M320 350.7h0M328.3 350.7h0M336.6 350.7h0M344.9 350.7h0M353.2 350.7h0M361.5 350.7h0M369.7 350.7h0M378 350.7h0M386.3 350.7h0M394.6 350.7h0M402.9 350.7h0M411.2 350.7h0M419.5 350.7h0M427.8 350.7h0M436 350.7h0M444.3 350.7h0M452.6 350.7h0M460.9 350.7h0M469.2 350.7h0M477.5 350.7h0M485.8 350.7h0M494 350.7h0M502.3 350.7h0M510.6 350.7h0M518.9 350.7h0M527.2 350.7h0M535.5 350.7h0M543.8 350.7h0M552.1 350.7h0M560.3 350.7h0M568.6 350.7h0M576.9 350.7h0M585.2 350.7h0M593.5 350.7h0M601.8 350.7h0M610.1 350.7h0M618.4 350.7h0M626.6 350.7h0M634.9 350.7h0M643.2 350.7h0M651.5 350.7h0M659.8 350.7h0M668.1 350.7h0M676.4 350.7h0M684.6 350.7h0M692.9 350.7h0M701.2 350.7h0M709.5 350.7h0M717.8 350.7h0M726.1 350.7h0M734.4 350.7h0M742.7 350.7h0M750.9 350.7h0M759.2 350.7h0M767.5 350.7h0M775.8 350.7h0M784.1 350.7h0M792.4 350.7h0M800.7 350.7h0M809 350.7h0M817.2 350.7h0M825.5 350.7h0M833.8 350.7h0M842.1 350.7h0M850.4 350.7h0M858.7 350.7h0M867 350.7h0M237.2 359h0M245.4 359h0M253.7 359h0M262 359h0M270.3 359h0M278.6 359h0M286.9 359h0M295.2 359h0M303.4 359h0M311.7 359h0M320 359h0M328.3 359h0M336.6 359h0M344.9 359h0M353.2 359h0M361.5 359h0M369.7 359h0M378 359h0M386.3 359h0M394.6 359h0M402.9 359h0M411.2 359h0M419.5 359h0M427.8 359h0M436 359h0M444.3 359h0M452.6 359h0M460.9 359h0M469.2 359h0M477.5 359h0M485.8 359h0M494 359h0M502.3 359h0M510.6 359h0M518.9 359h0M527.2 359h0M535.5 359h0M543.8 359h0M552.1 359h0M560.3 359h0M568.6 359h0M576.9 359h0M585.2 359h0M593.5 359h0M601.8 359h0M610.1 359h0M618.4 359h0M626.6 359h0M634.9 359h0M643.2 359h0M651.5 359h0M659.8 359h0M668.1 359h0M676.4 359h0M684.6 359h0M692.9 359h0M701.2 359h0M709.5 359h0M717.8 359h0M726.1 359h0M734.4 359h0M742.7 359h0M750.9 359h0M759.2 359h0M767.5 359h0M775.8 359h0M784.1 359h0M792.4 359h0M800.7 359h0M809 359h0M817.2 359h0M825.5 359h0M833.8 359h0M842.1 359h0M850.4 359h0M858.7 359h0M867 359h0M237.2 367.3h0M245.4 367.3h0M253.7 367.3h0M262 367.3h0M270.3 367.3h0M278.6 367.3h0M286.9 367.3h0M295.2 367.3h0M303.4 367.3h0M311.7 367.3h0M320 367.3h0M328.3 367.3h0M336.6 367.3h0M344.9 367.3h0M353.2 367.3h0M361.5 367.3h0M369.7 367.3h0M378 367.3h0M386.3 367.3h0M394.6 367.3h0M402.9 367.3h0M411.2 367.3h0M419.5 367.3h0M427.8 367.3h0M436 367.3h0M444.3 367.3h0M452.6 367.3h0M460.9 367.3h0M469.2 367.3h0M477.5 367.3h0M485.8 367.3h0M494 367.3h0M502.3 367.3h0M510.6 367.3h0M518.9 367.3h0M527.2 367.3h0M535.5 367.3h0M543.8 367.3h0M552.1 367.3h0M560.3 367.3h0M568.6 367.3h0M576.9 367.3h0M585.2 367.3h0M593.5 367.3h0M601.8 367.3h0M610.1 367.3h0M618.4 367.3h0M626.6 367.3h0M634.9 367.3h0M643.2 367.3h0M651.5 367.3h0M659.8 367.3h0M668.1 367.3h0M676.4 367.3h0M684.6 367.3h0M692.9 367.3h0M701.2 367.3h0M709.5 367.3h0M717.8 367.3h0M726.1 367.3h0M734.4 367.3h0M742.7 367.3h0M750.9 367.3h0M759.2 367.3h0M767.5 367.3h0M775.8 367.3h0M784.1 367.3h0M792.4 367.3h0M800.7 367.3h0M809 367.3h0M817.2 367.3h0M825.5 367.3h0M833.8 367.3h0M842.1 367.3h0M850.4 367.3h0M858.7 367.3h0M867 367.3h0M237.2 375.6h0M245.4 375.6h0M253.7 375.6h0M262 375.6h0M270.3 375.6h0M278.6 375.6h0M286.9 375.6h0M295.2 375.6h0M303.4 375.6h0M311.7 375.6h0M320 375.6h0M328.3 375.6h0M336.6 375.6h0M344.9 375.6h0M353.2 375.6h0M361.5 375.6h0M369.7 375.6h0M378 375.6h0M386.3 375.6h0M394.6 375.6h0M402.9 375.6h0M411.2 375.6h0M419.5 375.6h0M427.8 375.6h0M436 375.6h0M444.3 375.6h0M452.6 375.6h0M460.9 375.6h0M469.2 375.6h0M477.5 375.6h0M485.8 375.6h0M494 375.6h0M502.3 375.6h0M510.6 375.6h0M518.9 375.6h0M527.2 375.6h0M535.5 375.6h0M543.8 375.6h0M552.1 375.6h0M560.3 375.6h0M568.6 375.6h0M576.9 375.6h0M585.2 375.6h0M593.5 375.6h0M601.8 375.6h0M610.1 375.6h0M618.4 375.6h0M626.6 375.6h0M634.9 375.6h0M643.2 375.6h0M651.5 375.6h0M659.8 375.6h0M668.1 375.6h0M676.4 375.6h0M684.6 375.6h0M692.9 375.6h0M701.2 375.6h0M709.5 375.6h0M717.8 375.6h0M726.1 375.6h0M734.4 375.6h0M742.7 375.6h0M750.9 375.6h0M759.2 375.6h0M767.5 375.6h0M775.8 375.6h0M784.1 375.6h0M792.4 375.6h0M800.7 375.6h0M809 375.6h0M817.2 375.6h0M825.5 375.6h0M833.8 375.6h0M842.1 375.6h0M850.4 375.6h0M858.7 375.6h0M295.2 383.9h0M303.4 383.9h0M311.7 383.9h0M320 383.9h0M328.3 383.9h0M336.6 383.9h0M344.9 383.9h0M353.2 383.9h0M361.5 383.9h0M369.7 383.9h0M378 383.9h0M386.3 383.9h0M394.6 383.9h0M402.9 383.9h0M411.2 383.9h0M419.5 383.9h0M427.8 383.9h0M436 383.9h0M444.3 383.9h0M452.6 383.9h0M460.9 383.9h0M469.2 383.9h0M477.5 383.9h0M485.8 383.9h0M494 383.9h0M502.3 383.9h0M510.6 383.9h0M518.9 383.9h0M527.2 383.9h0M535.5 383.9h0M543.8 383.9h0M552.1 383.9h0M560.3 383.9h0M568.6 383.9h0M576.9 383.9h0M585.2 383.9h0M593.5 383.9h0M601.8 383.9h0M610.1 383.9h0M618.4 383.9h0M626.6 383.9h0M634.9 383.9h0M643.2 383.9h0M651.5 383.9h0M659.8 383.9h0M668.1 383.9h0M676.4 383.9h0M684.6 383.9h0M692.9 383.9h0M701.2 383.9h0M709.5 383.9h0M717.8 383.9h0M726.1 383.9h0M734.4 383.9h0M742.7 383.9h0M750.9 383.9h0M759.2 383.9h0M767.5 383.9h0M775.8 383.9h0M784.1 383.9h0M792.4 383.9h0M800.7 383.9h0M809 383.9h0M817.2 383.9h0M825.5 383.9h0M833.8 383.9h0M842.1 383.9h0M850.4 383.9h0M858.7 383.9h0M320 392.1h0M328.3 392.1h0M336.6 392.1h0M344.9 392.1h0M353.2 392.1h0M361.5 392.1h0M369.7 392.1h0M378 392.1h0M386.3 392.1h0M394.6 392.1h0M402.9 392.1h0M411.2 392.1h0M419.5 392.1h0M427.8 392.1h0M436 392.1h0M444.3 392.1h0M452.6 392.1h0M460.9 392.1h0M469.2 392.1h0M477.5 392.1h0M485.8 392.1h0M494 392.1h0M502.3 392.1h0M510.6 392.1h0M518.9 392.1h0M527.2 392.1h0M535.5 392.1h0M543.8 392.1h0M552.1 392.1h0M560.3 392.1h0M568.6 392.1h0M576.9 392.1h0M585.2 392.1h0M593.5 392.1h0M601.8 392.1h0M610.1 392.1h0M618.4 392.1h0M626.6 392.1h0M634.9 392.1h0M643.2 392.1h0M651.5 392.1h0M659.8 392.1h0M668.1 392.1h0M676.4 392.1h0M684.6 392.1h0M692.9 392.1h0M701.2 392.1h0M709.5 392.1h0M717.8 392.1h0M726.1 392.1h0M734.4 392.1h0M742.7 392.1h0M750.9 392.1h0M759.2 392.1h0M767.5 392.1h0M775.8 392.1h0M784.1 392.1h0M792.4 392.1h0M800.7 392.1h0M809 392.1h0M817.2 392.1h0M825.5 392.1h0M833.8 392.1h0M842.1 392.1h0M850.4 392.1h0M858.7 392.1h0M344.9 400.4h0M353.2 400.4h0M361.5 400.4h0M369.7 400.4h0M378 400.4h0M386.3 400.4h0M394.6 400.4h0M402.9 400.4h0M411.2 400.4h0M419.5 400.4h0M427.8 400.4h0M436 400.4h0M444.3 400.4h0M452.6 400.4h0M460.9 400.4h0M469.2 400.4h0M477.5 400.4h0M485.8 400.4h0M494 400.4h0M502.3 400.4h0M510.6 400.4h0M518.9 400.4h0M527.2 400.4h0M535.5 400.4h0M543.8 400.4h0M552.1 400.4h0M560.3 400.4h0M568.6 400.4h0M576.9 400.4h0M585.2 400.4h0M593.5 400.4h0M601.8 400.4h0M610.1 400.4h0M618.4 400.4h0M626.6 400.4h0M634.9 400.4h0M643.2 400.4h0M651.5 400.4h0M659.8 400.4h0M668.1 400.4h0M676.4 400.4h0M684.6 400.4h0M692.9 400.4h0M701.2 400.4h0M709.5 400.4h0M717.8 400.4h0M726.1 400.4h0M734.4 400.4h0M742.7 400.4h0M750.9 400.4h0M759.2 400.4h0M767.5 400.4h0M775.8 400.4h0M784.1 400.4h0M792.4 400.4h0M800.7 400.4h0M809 400.4h0M817.2 400.4h0M825.5 400.4h0M833.8 400.4h0M842.1 400.4h0M850.4 400.4h0M858.7 400.4h0M369.7 408.7h0M378 408.7h0M386.3 408.7h0M394.6 408.7h0M402.9 408.7h0M411.2 408.7h0M419.5 408.7h0M427.8 408.7h0M436 408.7h0M444.3 408.7h0M452.6 408.7h0M460.9 408.7h0M469.2 408.7h0M477.5 408.7h0M485.8 408.7h0M494 408.7h0M502.3 408.7h0M510.6 408.7h0M518.9 408.7h0M527.2 408.7h0M535.5 408.7h0M543.8 408.7h0M552.1 408.7h0M560.3 408.7h0M568.6 408.7h0M576.9 408.7h0M585.2 408.7h0M593.5 408.7h0M601.8 408.7h0M610.1 408.7h0M618.4 408.7h0M626.6 408.7h0M634.9 408.7h0M643.2 408.7h0M651.5 408.7h0M659.8 408.7h0M668.1 408.7h0M676.4 408.7h0M684.6 408.7h0M692.9 408.7h0M701.2 408.7h0M709.5 408.7h0M717.8 408.7h0M726.1 408.7h0M734.4 408.7h0M742.7 408.7h0M750.9 408.7h0M759.2 408.7h0M767.5 408.7h0M775.8 408.7h0M784.1 408.7h0M792.4 408.7h0M800.7 408.7h0M809 408.7h0M817.2 408.7h0M825.5 408.7h0M833.8 408.7h0M842.1 408.7h0M850.4 408.7h0M858.7 408.7h0M369.7 417h0M378 417h0M386.3 417h0M394.6 417h0M402.9 417h0M411.2 417h0M419.5 417h0M427.8 417h0M436 417h0M444.3 417h0M452.6 417h0M460.9 417h0M469.2 417h0M477.5 417h0M485.8 417h0M494 417h0M502.3 417h0M510.6 417h0M518.9 417h0M527.2 417h0M535.5 417h0M543.8 417h0M552.1 417h0M560.3 417h0M568.6 417h0M576.9 417h0M585.2 417h0M593.5 417h0M601.8 417h0M610.1 417h0M618.4 417h0M626.6 417h0M634.9 417h0M643.2 417h0M651.5 417h0M659.8 417h0M668.1 417h0M676.4 417h0M684.6 417h0M692.9 417h0M701.2 417h0M709.5 417h0M717.8 417h0M726.1 417h0M734.4 417h0M742.7 417h0M750.9 417h0M759.2 417h0M767.5 417h0M775.8 417h0M784.1 417h0M792.4 417h0M800.7 417h0M809 417h0M817.2 417h0M825.5 417h0M833.8 417h0M842.1 417h0M850.4 417h0M369.7 425.3h0M378 425.3h0M386.3 425.3h0M394.6 425.3h0M402.9 425.3h0M411.2 425.3h0M419.5 425.3h0M427.8 425.3h0M436 425.3h0M444.3 425.3h0M452.6 425.3h0M460.9 425.3h0M469.2 425.3h0M477.5 425.3h0M485.8 425.3h0M494 425.3h0M502.3 425.3h0M510.6 425.3h0M518.9 425.3h0M527.2 425.3h0M535.5 425.3h0M543.8 425.3h0M552.1 425.3h0M560.3 425.3h0M568.6 425.3h0M576.9 425.3h0M585.2 425.3h0M593.5 425.3h0M601.8 425.3h0M610.1 425.3h0M618.4 425.3h0M626.6 425.3h0M634.9 425.3h0M643.2 425.3h0M651.5 425.3h0M659.8 425.3h0M668.1 425.3h0M676.4 425.3h0M684.6 425.3h0M692.9 425.3h0M701.2 425.3h0M709.5 425.3h0M717.8 425.3h0M726.1 425.3h0M734.4 425.3h0M742.7 425.3h0M750.9 425.3h0M759.2 425.3h0M767.5 425.3h0M775.8 425.3h0M784.1 425.3h0M792.4 425.3h0M800.7 425.3h0M809 425.3h0M817.2 425.3h0M825.5 425.3h0M833.8 425.3h0M842.1 425.3h0M850.4 425.3h0M369.7 433.6h0M378 433.6h0M386.3 433.6h0M394.6 433.6h0M402.9 433.6h0M411.2 433.6h0M419.5 433.6h0M427.8 433.6h0M436 433.6h0M444.3 433.6h0M452.6 433.6h0M460.9 433.6h0M469.2 433.6h0M477.5 433.6h0M485.8 433.6h0M494 433.6h0M502.3 433.6h0M510.6 433.6h0M518.9 433.6h0M527.2 433.6h0M535.5 433.6h0M543.8 433.6h0M552.1 433.6h0M560.3 433.6h0M568.6 433.6h0M576.9 433.6h0M585.2 433.6h0M593.5 433.6h0M601.8 433.6h0M610.1 433.6h0M618.4 433.6h0M626.6 433.6h0M634.9 433.6h0M643.2 433.6h0M651.5 433.6h0M659.8 433.6h0M668.1 433.6h0M676.4 433.6h0M684.6 433.6h0M692.9 433.6h0M701.2 433.6h0M709.5 433.6h0M717.8 433.6h0M726.1 433.6h0M734.4 433.6h0M742.7 433.6h0M750.9 433.6h0M759.2 433.6h0M767.5 433.6h0M775.8 433.6h0M784.1 433.6h0M792.4 433.6h0M800.7 433.6h0M809 433.6h0M817.2 433.6h0M825.5 433.6h0M833.8 433.6h0M842.1 433.6h0M850.4 433.6h0M369.7 441.9h0M378 441.9h0M386.3 441.9h0M394.6 441.9h0M402.9 441.9h0M411.2 441.9h0M419.5 441.9h0M427.8 441.9h0M436 441.9h0M444.3 441.9h0M452.6 441.9h0M460.9 441.9h0M469.2 441.9h0M477.5 441.9h0M485.8 441.9h0M494 441.9h0M502.3 441.9h0M510.6 441.9h0M518.9 441.9h0M527.2 441.9h0M535.5 441.9h0M543.8 441.9h0M552.1 441.9h0M560.3 441.9h0M568.6 441.9h0M576.9 441.9h0M585.2 441.9h0M593.5 441.9h0M601.8 441.9h0M610.1 441.9h0M618.4 441.9h0M626.6 441.9h0M634.9 441.9h0M643.2 441.9h0M651.5 441.9h0M659.8 441.9h0M668.1 441.9h0M676.4 441.9h0M684.6 441.9h0M692.9 441.9h0M701.2 441.9h0M709.5 441.9h0M717.8 441.9h0M726.1 441.9h0M734.4 441.9h0M742.7 441.9h0M750.9 441.9h0M759.2 441.9h0M767.5 441.9h0M775.8 441.9h0M784.1 441.9h0M792.4 441.9h0M800.7 441.9h0M809 441.9h0M817.2 441.9h0M825.5 441.9h0M833.8 441.9h0M842.1 441.9h0M850.4 441.9h0M361.5 450.2h0M369.7 450.2h0M378 450.2h0M386.3 450.2h0M394.6 450.2h0M402.9 450.2h0M411.2 450.2h0M419.5 450.2h0M427.8 450.2h0M436 450.2h0M444.3 450.2h0M452.6 450.2h0M460.9 450.2h0M469.2 450.2h0M477.5 450.2h0M485.8 450.2h0M494 450.2h0M502.3 450.2h0M510.6 450.2h0M518.9 450.2h0M527.2 450.2h0M535.5 450.2h0M543.8 450.2h0M552.1 450.2h0M560.3 450.2h0M568.6 450.2h0M576.9 450.2h0M585.2 450.2h0M593.5 450.2h0M601.8 450.2h0M610.1 450.2h0M618.4 450.2h0M626.6 450.2h0M634.9 450.2h0M643.2 450.2h0M651.5 450.2h0M659.8 450.2h0M668.1 450.2h0M676.4 450.2h0M684.6 450.2h0M692.9 450.2h0M701.2 450.2h0M709.5 450.2h0M717.8 450.2h0M726.1 450.2h0M734.4 450.2h0M742.7 450.2h0M750.9 450.2h0M759.2 450.2h0M767.5 450.2h0M775.8 450.2h0M784.1 450.2h0M792.4 450.2h0M800.7 450.2h0M809 450.2h0M817.2 450.2h0M825.5 450.2h0M833.8 450.2h0M842.1 450.2h0M361.5 458.4h0M369.7 458.4h0M378 458.4h0M386.3 458.4h0M394.6 458.4h0M402.9 458.4h0M411.2 458.4h0M419.5 458.4h0M427.8 458.4h0M436 458.4h0M444.3 458.4h0M452.6 458.4h0M460.9 458.4h0M469.2 458.4h0M477.5 458.4h0M485.8 458.4h0M494 458.4h0M502.3 458.4h0M510.6 458.4h0M518.9 458.4h0M527.2 458.4h0M535.5 458.4h0M543.8 458.4h0M552.1 458.4h0M560.3 458.4h0M568.6 458.4h0M576.9 458.4h0M585.2 458.4h0M593.5 458.4h0M601.8 458.4h0M610.1 458.4h0M618.4 458.4h0M626.6 458.4h0M634.9 458.4h0M643.2 458.4h0M651.5 458.4h0M659.8 458.4h0M668.1 458.4h0M676.4 458.4h0M684.6 458.4h0M692.9 458.4h0M701.2 458.4h0M709.5 458.4h0M717.8 458.4h0M726.1 458.4h0M734.4 458.4h0M742.7 458.4h0M750.9 458.4h0M759.2 458.4h0M767.5 458.4h0M775.8 458.4h0M784.1 458.4h0M792.4 458.4h0M800.7 458.4h0M809 458.4h0M817.2 458.4h0M825.5 458.4h0M833.8 458.4h0M842.1 458.4h0M361.5 466.7h0M369.7 466.7h0M378 466.7h0M386.3 466.7h0M394.6 466.7h0M402.9 466.7h0M411.2 466.7h0M419.5 466.7h0M427.8 466.7h0M436 466.7h0M444.3 466.7h0M452.6 466.7h0M460.9 466.7h0M469.2 466.7h0M477.5 466.7h0M485.8 466.7h0M494 466.7h0M502.3 466.7h0M510.6 466.7h0M518.9 466.7h0M527.2 466.7h0M535.5 466.7h0M543.8 466.7h0M552.1 466.7h0M560.3 466.7h0M568.6 466.7h0M576.9 466.7h0M585.2 466.7h0M593.5 466.7h0M601.8 466.7h0M610.1 466.7h0M618.4 466.7h0M626.6 466.7h0M634.9 466.7h0M643.2 466.7h0M651.5 466.7h0M659.8 466.7h0M668.1 466.7h0M676.4 466.7h0M684.6 466.7h0M692.9 466.7h0M701.2 466.7h0M709.5 466.7h0M717.8 466.7h0M726.1 466.7h0M734.4 466.7h0M742.7 466.7h0M750.9 466.7h0M759.2 466.7h0M767.5 466.7h0M775.8 466.7h0M784.1 466.7h0M792.4 466.7h0M800.7 466.7h0M809 466.7h0M817.2 466.7h0M825.5 466.7h0M833.8 466.7h0M842.1 466.7h0M361.5 475h0M369.7 475h0M378 475h0M386.3 475h0M394.6 475h0M402.9 475h0M411.2 475h0M419.5 475h0M427.8 475h0M436 475h0M444.3 475h0M452.6 475h0M460.9 475h0M469.2 475h0M477.5 475h0M485.8 475h0M494 475h0M502.3 475h0M510.6 475h0M518.9 475h0M527.2 475h0M535.5 475h0M543.8 475h0M552.1 475h0M560.3 475h0M568.6 475h0M576.9 475h0M585.2 475h0M593.5 475h0M601.8 475h0M610.1 475h0M618.4 475h0M626.6 475h0M634.9 475h0M643.2 475h0M651.5 475h0M659.8 475h0M668.1 475h0M676.4 475h0M684.6 475h0M692.9 475h0M701.2 475h0M709.5 475h0M717.8 475h0M726.1 475h0M734.4 475h0M742.7 475h0M750.9 475h0M759.2 475h0M767.5 475h0M775.8 475h0M784.1 475h0M792.4 475h0M800.7 475h0M809 475h0M817.2 475h0M825.5 475h0M833.8 475h0M842.1 475h0M353.2 483.3h0M361.5 483.3h0M369.7 483.3h0M378 483.3h0M386.3 483.3h0M394.6 483.3h0M402.9 483.3h0M411.2 483.3h0M419.5 483.3h0M427.8 483.3h0M436 483.3h0M444.3 483.3h0M452.6 483.3h0M460.9 483.3h0M469.2 483.3h0M477.5 483.3h0M485.8 483.3h0M494 483.3h0M502.3 483.3h0M510.6 483.3h0M518.9 483.3h0M527.2 483.3h0M535.5 483.3h0M543.8 483.3h0M552.1 483.3h0M560.3 483.3h0M568.6 483.3h0M576.9 483.3h0M585.2 483.3h0M593.5 483.3h0M601.8 483.3h0M610.1 483.3h0M618.4 483.3h0M626.6 483.3h0M634.9 483.3h0M643.2 483.3h0M651.5 483.3h0M659.8 483.3h0M668.1 483.3h0M676.4 483.3h0M684.6 483.3h0M692.9 483.3h0M701.2 483.3h0M709.5 483.3h0M717.8 483.3h0M726.1 483.3h0M734.4 483.3h0M742.7 483.3h0M750.9 483.3h0M759.2 483.3h0M767.5 483.3h0M775.8 483.3h0M784.1 483.3h0M792.4 483.3h0M800.7 483.3h0M809 483.3h0M817.2 483.3h0M825.5 483.3h0M833.8 483.3h0M842.1 483.3h0M353.2 491.6h0M361.5 491.6h0M369.7 491.6h0M378 491.6h0M386.3 491.6h0M394.6 491.6h0M402.9 491.6h0M411.2 491.6h0M419.5 491.6h0M427.8 491.6h0M436 491.6h0M444.3 491.6h0M452.6 491.6h0M460.9 491.6h0M469.2 491.6h0M477.5 491.6h0M485.8 491.6h0M494 491.6h0M502.3 491.6h0M510.6 491.6h0M518.9 491.6h0M527.2 491.6h0M535.5 491.6h0M543.8 491.6h0M552.1 491.6h0M560.3 491.6h0M568.6 491.6h0M576.9 491.6h0M585.2 491.6h0M593.5 491.6h0M601.8 491.6h0M610.1 491.6h0M618.4 491.6h0M626.6 491.6h0M634.9 491.6h0M643.2 491.6h0M651.5 491.6h0M659.8 491.6h0M668.1 491.6h0M676.4 491.6h0M684.6 491.6h0M692.9 491.6h0M701.2 491.6h0M709.5 491.6h0M717.8 491.6h0M726.1 491.6h0M734.4 491.6h0M742.7 491.6h0M750.9 491.6h0M759.2 491.6h0M767.5 491.6h0M775.8 491.6h0M784.1 491.6h0M792.4 491.6h0M800.7 491.6h0M809 491.6h0M817.2 491.6h0M825.5 491.6h0M833.8 491.6h0M353.2 499.9h0M361.5 499.9h0M369.7 499.9h0M378 499.9h0M386.3 499.9h0M394.6 499.9h0M402.9 499.9h0M411.2 499.9h0M419.5 499.9h0M427.8 499.9h0M436 499.9h0M444.3 499.9h0M452.6 499.9h0M460.9 499.9h0M469.2 499.9h0M477.5 499.9h0M485.8 499.9h0M494 499.9h0M502.3 499.9h0M510.6 499.9h0M518.9 499.9h0M527.2 499.9h0M535.5 499.9h0M543.8 499.9h0M552.1 499.9h0M560.3 499.9h0M568.6 499.9h0M576.9 499.9h0M585.2 499.9h0M593.5 499.9h0M601.8 499.9h0M610.1 499.9h0M618.4 499.9h0M626.6 499.9h0M634.9 499.9h0M643.2 499.9h0M651.5 499.9h0M659.8 499.9h0M668.1 499.9h0M676.4 499.9h0M684.6 499.9h0M692.9 499.9h0M701.2 499.9h0M709.5 499.9h0M717.8 499.9h0M726.1 499.9h0M734.4 499.9h0M742.7 499.9h0M750.9 499.9h0M759.2 499.9h0M767.5 499.9h0M775.8 499.9h0M784.1 499.9h0M792.4 499.9h0M800.7 499.9h0M809 499.9h0M817.2 499.9h0M825.5 499.9h0M353.2 508.2h0M361.5 508.2h0M369.7 508.2h0M378 508.2h0M386.3 508.2h0M394.6 508.2h0M402.9 508.2h0M411.2 508.2h0M419.5 508.2h0M427.8 508.2h0M436 508.2h0M444.3 508.2h0M452.6 508.2h0M460.9 508.2h0M469.2 508.2h0M477.5 508.2h0M485.8 508.2h0M494 508.2h0M502.3 508.2h0M510.6 508.2h0M518.9 508.2h0M527.2 508.2h0M535.5 508.2h0M543.8 508.2h0M552.1 508.2h0M560.3 508.2h0M568.6 508.2h0M576.9 508.2h0M585.2 508.2h0M593.5 508.2h0M601.8 508.2h0M610.1 508.2h0M618.4 508.2h0M626.6 508.2h0M634.9 508.2h0M643.2 508.2h0M651.5 508.2h0M659.8 508.2h0M668.1 508.2h0M676.4 508.2h0M684.6 508.2h0M692.9 508.2h0M701.2 508.2h0M709.5 508.2h0M717.8 508.2h0M726.1 508.2h0M734.4 508.2h0M742.7 508.2h0M750.9 508.2h0M759.2 508.2h0M767.5 508.2h0M775.8 508.2h0M784.1 508.2h0M792.4 508.2h0M800.7 508.2h0M809 508.2h0M817.2 508.2h0M344.9 516.5h0M353.2 516.5h0M361.5 516.5h0M369.7 516.5h0M378 516.5h0M386.3 516.5h0M394.6 516.5h0M402.9 516.5h0M411.2 516.5h0M419.5 516.5h0M427.8 516.5h0M436 516.5h0M444.3 516.5h0M452.6 516.5h0M460.9 516.5h0M469.2 516.5h0M477.5 516.5h0M485.8 516.5h0M494 516.5h0M502.3 516.5h0M510.6 516.5h0M518.9 516.5h0M527.2 516.5h0M535.5 516.5h0M543.8 516.5h0M552.1 516.5h0M560.3 516.5h0M568.6 516.5h0M576.9 516.5h0M585.2 516.5h0M593.5 516.5h0M601.8 516.5h0M610.1 516.5h0M618.4 516.5h0M626.6 516.5h0M634.9 516.5h0M643.2 516.5h0M651.5 516.5h0M659.8 516.5h0M668.1 516.5h0M676.4 516.5h0M684.6 516.5h0M692.9 516.5h0M701.2 516.5h0M709.5 516.5h0M717.8 516.5h0M726.1 516.5h0M734.4 516.5h0M742.7 516.5h0M750.9 516.5h0M759.2 516.5h0M767.5 516.5h0M775.8 516.5h0M784.1 516.5h0M792.4 516.5h0M800.7 516.5h0M809 516.5h0M817.2 516.5h0M344.9 524.7h0M353.2 524.7h0M361.5 524.7h0M369.7 524.7h0M378 524.7h0M386.3 524.7h0M394.6 524.7h0M402.9 524.7h0M411.2 524.7h0M419.5 524.7h0M427.8 524.7h0M436 524.7h0M444.3 524.7h0M452.6 524.7h0M460.9 524.7h0M469.2 524.7h0M477.5 524.7h0M485.8 524.7h0M494 524.7h0M502.3 524.7h0M510.6 524.7h0M518.9 524.7h0M527.2 524.7h0M535.5 524.7h0M543.8 524.7h0M552.1 524.7h0M560.3 524.7h0M568.6 524.7h0M576.9 524.7h0M585.2 524.7h0M593.5 524.7h0M601.8 524.7h0M610.1 524.7h0M618.4 524.7h0M626.6 524.7h0M634.9 524.7h0M643.2 524.7h0M651.5 524.7h0M659.8 524.7h0M668.1 524.7h0M676.4 524.7h0M684.6 524.7h0M692.9 524.7h0M701.2 524.7h0M709.5 524.7h0M717.8 524.7h0M726.1 524.7h0M734.4 524.7h0M742.7 524.7h0M784.1 524.7h0M792.4 524.7h0M800.7 524.7h0M809 524.7h0M344.9 533h0M353.2 533h0M361.5 533h0M369.7 533h0M378 533h0M386.3 533h0M394.6 533h0M402.9 533h0M411.2 533h0M419.5 533h0M427.8 533h0M436 533h0M444.3 533h0M452.6 533h0M460.9 533h0M469.2 533h0M477.5 533h0M485.8 533h0M494 533h0M502.3 533h0M510.6 533h0M518.9 533h0M527.2 533h0M535.5 533h0M543.8 533h0M552.1 533h0M560.3 533h0M568.6 533h0M576.9 533h0M585.2 533h0M593.5 533h0M601.8 533h0M610.1 533h0M618.4 533h0M626.6 533h0M634.9 533h0M643.2 533h0M651.5 533h0M659.8 533h0M668.1 533h0M676.4 533h0M684.6 533h0M692.9 533h0M701.2 533h0M709.5 533h0M717.8 533h0M726.1 533h0M734.4 533h0M742.7 533h0M336.6 541.3h0M344.9 541.3h0M353.2 541.3h0M361.5 541.3h0M369.7 541.3h0M378 541.3h0M386.3 541.3h0M394.6 541.3h0M402.9 541.3h0M411.2 541.3h0M419.5 541.3h0M427.8 541.3h0M436 541.3h0M444.3 541.3h0M452.6 541.3h0M460.9 541.3h0M469.2 541.3h0M477.5 541.3h0M485.8 541.3h0M494 541.3h0M502.3 541.3h0M510.6 541.3h0M518.9 541.3h0M527.2 541.3h0M535.5 541.3h0M543.8 541.3h0M552.1 541.3h0M560.3 541.3h0M568.6 541.3h0M576.9 541.3h0M585.2 541.3h0M593.5 541.3h0M601.8 541.3h0M610.1 541.3h0M618.4 541.3h0M626.6 541.3h0M634.9 541.3h0M643.2 541.3h0M651.5 541.3h0M659.8 541.3h0M668.1 541.3h0M676.4 541.3h0M684.6 541.3h0M692.9 541.3h0M701.2 541.3h0M709.5 541.3h0M717.8 541.3h0M726.1 541.3h0M734.4 541.3h0M336.6 549.6h0M344.9 549.6h0M353.2 549.6h0M361.5 549.6h0M369.7 549.6h0M378 549.6h0M386.3 549.6h0M394.6 549.6h0M402.9 549.6h0M411.2 549.6h0M419.5 549.6h0M427.8 549.6h0M436 549.6h0M444.3 549.6h0M452.6 549.6h0M460.9 549.6h0M469.2 549.6h0M477.5 549.6h0M485.8 549.6h0M494 549.6h0M502.3 549.6h0M510.6 549.6h0M518.9 549.6h0M527.2 549.6h0M535.5 549.6h0M543.8 549.6h0M552.1 549.6h0M560.3 549.6h0M568.6 549.6h0M576.9 549.6h0M585.2 549.6h0M593.5 549.6h0M601.8 549.6h0M610.1 549.6h0M618.4 549.6h0M626.6 549.6h0M634.9 549.6h0M643.2 549.6h0M651.5 549.6h0M659.8 549.6h0M668.1 549.6h0M676.4 549.6h0M684.6 549.6h0M692.9 549.6h0M701.2 549.6h0M709.5 549.6h0M717.8 549.6h0M726.1 549.6h0M734.4 549.6h0M336.6 557.9h0M344.9 557.9h0M353.2 557.9h0M361.5 557.9h0M369.7 557.9h0M378 557.9h0M386.3 557.9h0M394.6 557.9h0M402.9 557.9h0M411.2 557.9h0M419.5 557.9h0M427.8 557.9h0M436 557.9h0M444.3 557.9h0M452.6 557.9h0M460.9 557.9h0M469.2 557.9h0M477.5 557.9h0M485.8 557.9h0M494 557.9h0M502.3 557.9h0M510.6 557.9h0M518.9 557.9h0M527.2 557.9h0M535.5 557.9h0M543.8 557.9h0M552.1 557.9h0M560.3 557.9h0M568.6 557.9h0M576.9 557.9h0M585.2 557.9h0M593.5 557.9h0M601.8 557.9h0M610.1 557.9h0M618.4 557.9h0M626.6 557.9h0M634.9 557.9h0M643.2 557.9h0M651.5 557.9h0M659.8 557.9h0M668.1 557.9h0M676.4 557.9h0M684.6 557.9h0M692.9 557.9h0M701.2 557.9h0M709.5 557.9h0M717.8 557.9h0M726.1 557.9h0M734.4 557.9h0M361.5 566.2h0M369.7 566.2h0M378 566.2h0M386.3 566.2h0M394.6 566.2h0M402.9 566.2h0M411.2 566.2h0M419.5 566.2h0M427.8 566.2h0M436 566.2h0M444.3 566.2h0M452.6 566.2h0M460.9 566.2h0M469.2 566.2h0M477.5 566.2h0M485.8 566.2h0M494 566.2h0M502.3 566.2h0M510.6 566.2h0M518.9 566.2h0M527.2 566.2h0M535.5 566.2h0M543.8 566.2h0M552.1 566.2h0M560.3 566.2h0M568.6 566.2h0M576.9 566.2h0M585.2 566.2h0M593.5 566.2h0M601.8 566.2h0M610.1 566.2h0M618.4 566.2h0M626.6 566.2h0M634.9 566.2h0M643.2 566.2h0M651.5 566.2h0M659.8 566.2h0M668.1 566.2h0M676.4 566.2h0M684.6 566.2h0M692.9 566.2h0M701.2 566.2h0M709.5 566.2h0M717.8 566.2h0M726.1 566.2h0M734.4 566.2h0M742.7 566.2h0M394.6 574.5h0M402.9 574.5h0M411.2 574.5h0M419.5 574.5h0M427.8 574.5h0M436 574.5h0M444.3 574.5h0M452.6 574.5h0M460.9 574.5h0M469.2 574.5h0M477.5 574.5h0M485.8 574.5h0M494 574.5h0M502.3 574.5h0M510.6 574.5h0M518.9 574.5h0M527.2 574.5h0M535.5 574.5h0M543.8 574.5h0M552.1 574.5h0M560.3 574.5h0M568.6 574.5h0M576.9 574.5h0M585.2 574.5h0M593.5 574.5h0M601.8 574.5h0M610.1 574.5h0M618.4 574.5h0M626.6 574.5h0M634.9 574.5h0M643.2 574.5h0M651.5 574.5h0M659.8 574.5h0M668.1 574.5h0M676.4 574.5h0M684.6 574.5h0M692.9 574.5h0M701.2 574.5h0M709.5 574.5h0M717.8 574.5h0M726.1 574.5h0M734.4 574.5h0M742.7 574.5h0M436 582.7h0M444.3 582.7h0M452.6 582.7h0M460.9 582.7h0M469.2 582.7h0M477.5 582.7h0M485.8 582.7h0M494 582.7h0M502.3 582.7h0M510.6 582.7h0M518.9 582.7h0M527.2 582.7h0M535.5 582.7h0M543.8 582.7h0M552.1 582.7h0M560.3 582.7h0M568.6 582.7h0M576.9 582.7h0M585.2 582.7h0M593.5 582.7h0M601.8 582.7h0M610.1 582.7h0M618.4 582.7h0M626.6 582.7h0M634.9 582.7h0M643.2 582.7h0M651.5 582.7h0M659.8 582.7h0M668.1 582.7h0M676.4 582.7h0M684.6 582.7h0M692.9 582.7h0M701.2 582.7h0M709.5 582.7h0M717.8 582.7h0M726.1 582.7h0M734.4 582.7h0M742.7 582.7h0M759.2 582.7h0M767.5 582.7h0M775.8 582.7h0M436 591h0M444.3 591h0M452.6 591h0M460.9 591h0M469.2 591h0M477.5 591h0M485.8 591h0M494 591h0M502.3 591h0M510.6 591h0M518.9 591h0M527.2 591h0M535.5 591h0M543.8 591h0M552.1 591h0M560.3 591h0M568.6 591h0M576.9 591h0M585.2 591h0M593.5 591h0M601.8 591h0M610.1 591h0M618.4 591h0M626.6 591h0M634.9 591h0M643.2 591h0M651.5 591h0M659.8 591h0M668.1 591h0M676.4 591h0M684.6 591h0M692.9 591h0M701.2 591h0M709.5 591h0M717.8 591h0M726.1 591h0M734.4 591h0M742.7 591h0M750.9 591h0M759.2 591h0M767.5 591h0M775.8 591h0M784.1 591h0M792.4 591h0M800.7 591h0M436 599.3h0M444.3 599.3h0M452.6 599.3h0M460.9 599.3h0M469.2 599.3h0M477.5 599.3h0M485.8 599.3h0M494 599.3h0M502.3 599.3h0M510.6 599.3h0M518.9 599.3h0M527.2 599.3h0M535.5 599.3h0M543.8 599.3h0M552.1 599.3h0M560.3 599.3h0M568.6 599.3h0M576.9 599.3h0M585.2 599.3h0M593.5 599.3h0M601.8 599.3h0M610.1 599.3h0M618.4 599.3h0M626.6 599.3h0M634.9 599.3h0M643.2 599.3h0M651.5 599.3h0M659.8 599.3h0M668.1 599.3h0M676.4 599.3h0M684.6 599.3h0M692.9 599.3h0M701.2 599.3h0M709.5 599.3h0M717.8 599.3h0M726.1 599.3h0M734.4 599.3h0M742.7 599.3h0M750.9 599.3h0M759.2 599.3h0M767.5 599.3h0M775.8 599.3h0M784.1 599.3h0M792.4 599.3h0M800.7 599.3h0M809 599.3h0M427.8 607.6h0M436 607.6h0M444.3 607.6h0M452.6 607.6h0M460.9 607.6h0M469.2 607.6h0M477.5 607.6h0M485.8 607.6h0M494 607.6h0M502.3 607.6h0M510.6 607.6h0M518.9 607.6h0M527.2 607.6h0M535.5 607.6h0M543.8 607.6h0M552.1 607.6h0M560.3 607.6h0M568.6 607.6h0M576.9 607.6h0M585.2 607.6h0M593.5 607.6h0M601.8 607.6h0M610.1 607.6h0M618.4 607.6h0M626.6 607.6h0M634.9 607.6h0M643.2 607.6h0M651.5 607.6h0M659.8 607.6h0M668.1 607.6h0M676.4 607.6h0M684.6 607.6h0M692.9 607.6h0M701.2 607.6h0M709.5 607.6h0M717.8 607.6h0M726.1 607.6h0M734.4 607.6h0M742.7 607.6h0M750.9 607.6h0M759.2 607.6h0M767.5 607.6h0M775.8 607.6h0M784.1 607.6h0M792.4 607.6h0M800.7 607.6h0M809 607.6h0M419.5 615.9h0M427.8 615.9h0M436 615.9h0M444.3 615.9h0M452.6 615.9h0M460.9 615.9h0M469.2 615.9h0M477.5 615.9h0M485.8 615.9h0M494 615.9h0M502.3 615.9h0M510.6 615.9h0M518.9 615.9h0M527.2 615.9h0M535.5 615.9h0M543.8 615.9h0M552.1 615.9h0M560.3 615.9h0M568.6 615.9h0M576.9 615.9h0M585.2 615.9h0M593.5 615.9h0M601.8 615.9h0M610.1 615.9h0M618.4 615.9h0M626.6 615.9h0M634.9 615.9h0M643.2 615.9h0M651.5 615.9h0M659.8 615.9h0M668.1 615.9h0M676.4 615.9h0M684.6 615.9h0M692.9 615.9h0M701.2 615.9h0M709.5 615.9h0M717.8 615.9h0M726.1 615.9h0M734.4 615.9h0M742.7 615.9h0M750.9 615.9h0M759.2 615.9h0M767.5 615.9h0M775.8 615.9h0M784.1 615.9h0M792.4 615.9h0M800.7 615.9h0M809 615.9h0M411.2 624.2h0M419.5 624.2h0M427.8 624.2h0M436 624.2h0M444.3 624.2h0M452.6 624.2h0M460.9 624.2h0M469.2 624.2h0M477.5 624.2h0M485.8 624.2h0M494 624.2h0M502.3 624.2h0M510.6 624.2h0M518.9 624.2h0M527.2 624.2h0M535.5 624.2h0M543.8 624.2h0M552.1 624.2h0M560.3 624.2h0M568.6 624.2h0M576.9 624.2h0M585.2 624.2h0M593.5 624.2h0M601.8 624.2h0M610.1 624.2h0M618.4 624.2h0M626.6 624.2h0M634.9 624.2h0M643.2 624.2h0M651.5 624.2h0M659.8 624.2h0M668.1 624.2h0M676.4 624.2h0M684.6 624.2h0M692.9 624.2h0M701.2 624.2h0M709.5 624.2h0M717.8 624.2h0M726.1 624.2h0M734.4 624.2h0M742.7 624.2h0M750.9 624.2h0M759.2 624.2h0M767.5 624.2h0M775.8 624.2h0M784.1 624.2h0M792.4 624.2h0M800.7 624.2h0M809 624.2h0" fill="none" stroke="#111" stroke-width="5.5" stroke-linecap="round"/>
<path d="M436 102.1h0M444.3 102.1h0M452.6 102.1h0M460.9 102.1h0M469.2 102.1h0M477.5 102.1h0M485.8 102.1h0M494 102.1h0M502.3 102.1h0M510.6 102.1h0M518.9 102.1h0M527.2 102.1h0M535.5 102.1h0M543.8 102.1h0M552.1 102.1h0M560.3 102.1h0M568.6 102.1h0M576.9 102.1h0M585.2 102.1h0M593.5 102.1h0M601.8 102.1h0M610.1 102.1h0M618.4 102.1h0M626.6 102.1h0M634.9 102.1h0M643.2 102.1h0M651.5 102.1h0M659.8 102.1h0M668.1 102.1h0M676.4 102.1h0M684.6 102.1h0M692.9 102.1h0M427.8 110.4h0M436 110.4h0M444.3 110.4h0M452.6 110.4h0M460.9 110.4h0M469.2 110.4h0M477.5 110.4h0M485.8 110.4h0M494 110.4h0M502.3 110.4h0M510.6 110.4h0M518.9 110.4h0M527.2 110.4h0M535.5 110.4h0M543.8 110.4h0M552.1 110.4h0M560.3 110.4h0M568.6 110.4h0M576.9 110.4h0M585.2 110.4h0M593.5 110.4h0M601.8 110.4h0M610.1 110.4h0M618.4 110.4h0M626.6 110.4h0M634.9 110.4h0M643.2 110.4h0M651.5 110.4h0M659.8 110.4h0M668.1 110.4h0M676.4 110.4h0M684.6 110.4h0M692.9 110.4h0M427.8 118.7h0M436 118.7h0M444.3 118.7h0M452.6 118.7h0M460.9 118.7h0M469.2 118.7h0M477.5 118.7h0M485.8 118.7h0M494 118.7h0M502.3 118.7h0M510.6 118.7h0M518.9 118.7h0M527.2 118.7h0M535.5 118.7h0M543.8 118.7h0M552.1 118.7h0M560.3 118.7h0M568.6 118.7h0M576.9 118.7h0M585.2 118.7h0M593.5 118.7h0M601.8 118.7h0M610.1 118.7h0M618.4 118.7h0M626.6 118.7h0M634.9 118.7h0M643.2 118.7h0M651.5 118.7h0M659.8 118.7h0M668.1 118.7h0M676.4 118.7h0M684.6 118.7h0M427.8 127h0M436 127h0M444.3 127h0M452.6 127h0M460.9 127h0M469.2 127h0M477.5 127h0M485.8 127h0M494 127h0M502.3 127h0M510.6 127h0M518.9 127h0M527.2 127h0M535.5 127h0M543.8 127h0M552.1 127h0M560.3 127h0M568.6 127h0M576.9 127h0M585.2 127h0M593.5 127h0M601.8 127h0M610.1 127h0M618.4 127h0M626.6 127h0M634.9 127h0M643.2 127h0M651.5 127h0M659.8 127h0M668.1 127h0M676.4 127h0M684.6 127h0M427.8 135.2h0M436 135.2h0M444.3 135.2h0M452.6 135.2h0M460.9 135.2h0M469.2 135.2h0M477.5 135.2h0M485.8 135.2h0M494 135.2h0M502.3 135.2h0M510.6 135.2h0M518.9 135.2h0M527.2 135.2h0M535.5 135.2h0M543.8 135.2h0M552.1 135.2h0M560.3 135.2h0M568.6 135.2h0M576.9 135.2h0M585.2 135.2h0M593.5 135.2h0M601.8 135.2h0M610.1 135.2h0M618.4 135.2h0M626.6 135.2h0M634.9 135.2h0M643.2 135.2h0M651.5 135.2h0M659.8 135.2h0M668.1 135.2h0M676.4 135.2h0M684.6 135.2h0M419.5 143.5h0M427.8 143.5h0M436 143.5h0M444.3 143.5h0M452.6 143.5h0M460.9 143.5h0M469.2 143.5h0M477.5 143.5h0M485.8 143.5h0M494 143.5h0M502.3 143.5h0M510.6 143.5h0M518.9 143.5h0M527.2 143.5h0M535.5 143.5h0M543.8 143.5h0M552.1 143.5h0M560.3 143.5h0M568.6 143.5h0M576.9 143.5h0M585.2 143.5h0M593.5 143.5h0M601.8 143.5h0M610.1 143.5h0M618.4 143.5h0M626.6 143.5h0M634.9 143.5h0M643.2 143.5h0M651.5 143.5h0M659.8 143.5h0M668.1 143.5h0M676.4 143.5h0M684.6 143.5h0M419.5 151.8h0M427.8 151.8h0M436 151.8h0M444.3 151.8h0M452.6 151.8h0M460.9 151.8h0M469.2 151.8h0M477.5 151.8h0M485.8 151.8h0M494 151.8h0M502.3 151.8h0M510.6 151.8h0M518.9 151.8h0M527.2 151.8h0M535.5 151.8h0M543.8 151.8h0M552.1 151.8h0M560.3 151.8h0M568.6 151.8h0M576.9 151.8h0M585.2 151.8h0M593.5 151.8h0M601.8 151.8h0M610.1 151.8h0M618.4 151.8h0M626.6 151.8h0M634.9 151.8h0M643.2 151.8h0M651.5 151.8h0M659.8 151.8h0M668.1 151.8h0M676.4 151.8h0M684.6 151.8h0M692.9 151.8h0M419.5 160.1h0M427.8 160.1h0M436 160.1h0M444.3 160.1h0M452.6 160.1h0M460.9 160.1h0M469.2 160.1h0M477.5 160.1h0M485.8 160.1h0M494 160.1h0M502.3 160.1h0M510.6 160.1h0M518.9 160.1h0M527.2 160.1h0M535.5 160.1h0M543.8 160.1h0M552.1 160.1h0M560.3 160.1h0M568.6 160.1h0M576.9 160.1h0M585.2 160.1h0M593.5 160.1h0M601.8 160.1h0M610.1 160.1h0M618.4 160.1h0M626.6 160.1h0M634.9 160.1h0M643.2 160.1h0M651.5 160.1h0M659.8 160.1h0M668.1 160.1h0M676.4 160.1h0M684.6 160.1h0M692.9 160.1h0M419.5 168.4h0M427.8 168.4h0M436 168.4h0M444.3 168.4h0M452.6 168.4h0M460.9 168.4h0M469.2 168.4h0M477.5 168.4h0M485.8 168.4h0M494 168.4h0M502.3 168.4h0M510.6 168.4h0M518.9 168.4h0M527.2 168.4h0M535.5 168.4h0M543.8 168.4h0M552.1 168.4h0M560.3 168.4h0M568.6 168.4h0M576.9 168.4h0M585.2 168.4h0M593.5 168.4h0M601.8 168.4h0M610.1 168.4h0M618.4 168.4h0M626.6 168.4h0M634.9 168.4h0M643.2 168.4h0M651.5 168.4h0M659.8 168.4h0M668.1 168.4h0M676.4 168.4h0M684.6 168.4h0M692.9 168.4h0M701.2 168.4h0M411.2 176.7h0M419.5 176.7h0M427.8 176.7h0M436 176.7h0M444.3 176.7h0M452.6 176.7h0M460.9 176.7h0M469.2 176.7h0M477.5 176.7h0M485.8 176.7h0M494 176.7h0M502.3 176.7h0M510.6 176.7h0M518.9 176.7h0M527.2 176.7h0M535.5 176.7h0M543.8 176.7h0M552.1 176.7h0M560.3 176.7h0M568.6 176.7h0M576.9 176.7h0M585.2 176.7h0M593.5 176.7h0M601.8 176.7h0M610.1 176.7h0M618.4 176.7h0M626.6 176.7h0M634.9 176.7h0M643.2 176.7h0M651.5 176.7h0M659.8 176.7h0M668.1 176.7h0M676.4 176.7h0M684.6 176.7h0M692.9 176.7h0M701.2 176.7h0M411.2 185h0M419.5 185h0M427.8 185h0M436 185h0M444.3 185h0M452.6 185h0M460.9 185h0M469.2 185h0M477.5 185h0M485.8 185h0M494 185h0M502.3 185h0M510.6 185h0M518.9 185h0M527.2 185h0M535.5 185h0M543.8 185h0M552.1 185h0M560.3 185h0M568.6 185h0M576.9 185h0M585.2 185h0M593.5 185h0M601.8 185h0M610.1 185h0M618.4 185h0M626.6 185h0M634.9 185h0M643.2 185h0M651.5 185h0M659.8 185h0M668.1 185h0M676.4 185h0M684.6 185h0M692.9 185h0M701.2 185h0M709.5 185h0M411.2 193.3h0M419.5 193.3h0M427.8 193.3h0M436 193.3h0M444.3 193.3h0M452.6 193.3h0M460.9 193.3h0M469.2 193.3h0M477.5 193.3h0M485.8 193.3h0M494 193.3h0M502.3 193.3h0M510.6 193.3h0M518.9 193.3h0M527.2 193.3h0M535.5 193.3h0M543.8 193.3h0M552.1 193.3h0M560.3 193.3h0M568.6 193.3h0M576.9 193.3h0M585.2 193.3h0M593.5 193.3h0M601.8 193.3h0M610.1 193.3h0M618.4 193.3h0M626.6 193.3h0M634.9 193.3h0M643.2 193.3h0M651.5 193.3h0M659.8 193.3h0M668.1 193.3h0M676.4 193.3h0M684.6 193.3h0M692.9 193.3h0M701.2 193.3h0M709.5 193.3h0M411.2 201.5h0M419.5 201.5h0M427.8 201.5h0M436 201.5h0M444.3 201.5h0M452.6 201.5h0M460.9 201.5h0M469.2 201.5h0M477.5 201.5h0M485.8 201.5h0M494 201.5h0M502.3 201.5h0M510.6 201.5h0M518.9 201.5h0M527.2 201.5h0M535.5 201.5h0M543.8 201.5h0M552.1 201.5h0M560.3 201.5h0M568.6 201.5h0M576.9 201.5h0M585.2 201.5h0M593.5 201.5h0M601.8 201.5h0M610.1 201.5h0M618.4 201.5h0M626.6 201.5h0M634.9 201.5h0M643.2 201.5h0M651.5 201.5h0M659.8 201.5h0M668.1 201.5h0M676.4 201.5h0M684.6 201.5h0M692.9 201.5h0M701.2 201.5h0M709.5 201.5h0M717.8 201.5h0M402.9 209.8h0M411.2 209.8h0M419.5 209.8h0M427.8 209.8h0M436 209.8h0M444.3 209.8h0M452.6 209.8h0M460.9 209.8h0M469.2 209.8h0M477.5 209.8h0M485.8 209.8h0M494 209.8h0M502.3 209.8h0M510.6 209.8h0M518.9 209.8h0M527.2 209.8h0M535.5 209.8h0M543.8 209.8h0M552.1 209.8h0M560.3 209.8h0M568.6 209.8h0M576.9 209.8h0M585.2 209.8h0M593.5 209.8h0M601.8 209.8h0M610.1 209.8h0M618.4 209.8h0M626.6 209.8h0M634.9 209.8h0M643.2 209.8h0M651.5 209.8h0M659.8 209.8h0M668.1 209.8h0M676.4 209.8h0M684.6 209.8h0M692.9 209.8h0M701.2 209.8h0M709.5 209.8h0M717.8 209.8h0M402.9 218.1h0M411.2 218.1h0M419.5 218.1h0M427.8 218.1h0M436 218.1h0M444.3 218.1h0M452.6 218.1h0M460.9 218.1h0M469.2 218.1h0M477.5 218.1h0M485.8 218.1h0M494 218.1h0M502.3 218.1h0M510.6 218.1h0M518.9 218.1h0M527.2 218.1h0M535.5 218.1h0M543.8 218.1h0M552.1 218.1h0M560.3 218.1h0M568.6 218.1h0M576.9 218.1h0M585.2 218.1h0M593.5 218.1h0M601.8 218.1h0M610.1 218.1h0M618.4 218.1h0M626.6 218.1h0M634.9 218.1h0M643.2 218.1h0M651.5 218.1h0M659.8 218.1h0M668.1 218.1h0M676.4 218.1h0M684.6 218.1h0M692.9 218.1h0M701.2 218.1h0M709.5 218.1h0M717.8 218.1h0M726.1 218.1h0M402.9 226.4h0M411.2 226.4h0M419.5 226.4h0M427.8 226.4h0M436 226.4h0M444.3 226.4h0M452.6 226.4h0M460.9 226.4h0M469.2 226.4h0M477.5 226.4h0M485.8 226.4h0M494 226.4h0M502.3 226.4h0M510.6 226.4h0M518.9 226.4h0M527.2 226.4h0M535.5 226.4h0M543.8 226.4h0M552.1 226.4h0M560.3 226.4h0M568.6 226.4h0M576.9 226.4h0M585.2 226.4h0M593.5 226.4h0M601.8 226.4h0M610.1 226.4h0M618.4 226.4h0M626.6 226.4h0M634.9 226.4h0M643.2 226.4h0M651.5 226.4h0M659.8 226.4h0M668.1 226.4h0M676.4 226.4h0M684.6 226.4h0M692.9 226.4h0M701.2 226.4h0M709.5 226.4h0M717.8 226.4h0M726.1 226.4h0M402.9 234.7h0M411.2 234.7h0M419.5 234.7h0M427.8 234.7h0M436 234.7h0M444.3 234.7h0M452.6 234.7h0M460.9 234.7h0M469.2 234.7h0M477.5 234.7h0M485.8 234.7h0M494 234.7h0M502.3 234.7h0M510.6 234.7h0M518.9 234.7h0M527.2 234.7h0M535.5 234.7h0M543.8 234.7h0M552.1 234.7h0M560.3 234.7h0M568.6 234.7h0M576.9 234.7h0M585.2 234.7h0M593.5 234.7h0M601.8 234.7h0M610.1 234.7h0M618.4 234.7h0M626.6 234.7h0M634.9 234.7h0M643.2 234.7h0M651.5 234.7h0M659.8 234.7h0M668.1 234.7h0M676.4 234.7h0M684.6 234.7h0M692.9 234.7h0M701.2 234.7h0M709.5 234.7h0M717.8 234.7h0M726.1 234.7h0M734.4 234.7h0M742.7 234.7h0M750.9 234.7h0M402.9 243h0M411.2 243h0M419.5 243h0M427.8 243h0M436 243h0M444.3 243h0M452.6 243h0M460.9 243h0M469.2 243h0M477.5 243h0M485.8 243h0M494 243h0M502.3 243h0M510.6 243h0M518.9 243h0M527.2 243h0M535.5 243h0M543.8 243h0M552.1 243h0M560.3 243h0M568.6 243h0M576.9 243h0M585.2 243h0M593.5 243h0M601.8 243h0M610.1 243h0M618.4 243h0M626.6 243h0M634.9 243h0M643.2 243h0M651.5 243h0M659.8 243h0M668.1 243h0M676.4 243h0M684.6 243h0M692.9 243h0M701.2 243h0M709.5 243h0M717.8 243h0M726.1 243h0M734.4 243h0M742.7 243h0M750.9 243h0M759.2 243h0M767.5 243h0M295.2 251.3h0M303.4 251.3h0M394.6 251.3h0M402.9 251.3h0M411.2 251.3h0M419.5 251.3h0M427.8 251.3h0M436 251.3h0M444.3 251.3h0M452.6 251.3h0M460.9 251.3h0M469.2 251.3h0M477.5 251.3h0M485.8 251.3h0M494 251.3h0M502.3 251.3h0M510.6 251.3h0M518.9 251.3h0M527.2 251.3h0M535.5 251.3h0M543.8 251.3h0M552.1 251.3h0M560.3 251.3h0M568.6 251.3h0M576.9 251.3h0M585.2 251.3h0M593.5 251.3h0M601.8 251.3h0M610.1 251.3h0M618.4 251.3h0M626.6 251.3h0M634.9 251.3h0M643.2 251.3h0M651.5 251.3h0M659.8 251.3h0M668.1 251.3h0M676.4 251.3h0M684.6 251.3h0M692.9 251.3h0M701.2 251.3h0M709.5 251.3h0M717.8 251.3h0M726.1 251.3h0M734.4 251.3h0M742.7 251.3h0M750.9 251.3h0M759.2 251.3h0M767.5 251.3h0M775.8 251.3h0M784.1 251.3h0M792.4 251.3h0M295.2 259.6h0M303.4 259.6h0M311.7 259.6h0M320 259.6h0M328.3 259.6h0M336.6 259.6h0M344.9 259.6h0M353.2 259.6h0M394.6 259.6h0M402.9 259.6h0M411.2 259.6h0M419.5 259.6h0M427.8 259.6h0M436 259.6h0M444.3 259.6h0M452.6 259.6h0M460.9 259.6h0M469.2 259.6h0M477.5 259.6h0M485.8 259.6h0M494 259.6h0M502.3 259.6h0M510.6 259.6h0M518.9 259.6h0M527.2 259.6h0M535.5 259.6h0M543.8 259.6h0M552.1 259.6h0M560.3 259.6h0M568.6 259.6h0M576.9 259.6h0M585.2 259.6h0M593.5 259.6h0M601.8 259.6h0M610.1 259.6h0M618.4 259.6h0M626.6 259.6h0M634.9 259.6h0M643.2 259.6h0M651.5 259.6h0M659.8 259.6h0M668.1 259.6h0M676.4 259.6h0M684.6 259.6h0M692.9 259.6h0M701.2 259.6h0M709.5 259.6h0M717.8 259.6h0M726.1 259.6h0M734.4 259.6h0M742.7 259.6h0M750.9 259.6h0M759.2 259.6h0M767.5 259.6h0M775.8 259.6h0M784.1 259.6h0M792.4 259.6h0M800.7 259.6h0M809 259.6h0M286.9 267.8h0M295.2 267.8h0M303.4 267.8h0M311.7 267.8h0M320 267.8h0M328.3 267.8h0M336.6 267.8h0M344.9 267.8h0M353.2 267.8h0M361.5 267.8h0M394.6 267.8h0M402.9 267.8h0M411.2 267.8h0M419.5 267.8h0M427.8 267.8h0M436 267.8h0M444.3 267.8h0M452.6 267.8h0M460.9 267.8h0M469.2 267.8h0M477.5 267.8h0M485.8 267.8h0M494 267.8h0M502.3 267.8h0M510.6 267.8h0M518.9 267.8h0M527.2 267.8h0M535.5 267.8h0M543.8 267.8h0M552.1 267.8h0M560.3 267.8h0M568.6 267.8h0M576.9 267.8h0M585.2 267.8h0M593.5 267.8h0M601.8 267.8h0M610.1 267.8h0M618.4 267.8h0M626.6 267.8h0M634.9 267.8h0M643.2 267.8h0M651.5 267.8h0M659.8 267.8h0M668.1 267.8h0M676.4 267.8h0M684.6 267.8h0M692.9 267.8h0M701.2 267.8h0M709.5 267.8h0M717.8 267.8h0M726.1 267.8h0M734.4 267.8h0M742.7 267.8h0M750.9 267.8h0M759.2 267.8h0M767.5 267.8h0M775.8 267.8h0M784.1 267.8h0M792.4 267.8h0M800.7 267.8h0M809 267.8h0M817.2 267.8h0M825.5 267.8h0M833.8 267.8h0M237.2 276.1h0M245.4 276.1h0M286.9 276.1h0M295.2 276.1h0M303.4 276.1h0M311.7 276.1h0M320 276.1h0M328.3 276.1h0M336.6 276.1h0M344.9 276.1h0M353.2 276.1h0M361.5 276.1h0M369.7 276.1h0M394.6 276.1h0M402.9 276.1h0M411.2 276.1h0M419.5 276.1h0M427.8 276.1h0M436 276.1h0M444.3 276.1h0M452.6 276.1h0M460.9 276.1h0M469.2 276.1h0M477.5 276.1h0M485.8 276.1h0M494 276.1h0M502.3 276.1h0M510.6 276.1h0M518.9 276.1h0M527.2 276.1h0M535.5 276.1h0M543.8 276.1h0M552.1 276.1h0M560.3 276.1h0M568.6 276.1h0M576.9 276.1h0M585.2 276.1h0M593.5 276.1h0M601.8 276.1h0M610.1 276.1h0M618.4 276.1h0M626.6 276.1h0M634.9 276.1h0M643.2 276.1h0M651.5 276.1h0M659.8 276.1h0M668.1 276.1h0M676.4 276.1h0M684.6 276.1h0M692.9 276.1h0M701.2 276.1h0M709.5 276.1h0M717.8 276.1h0M726.1 276.1h0M734.4 276.1h0M742.7 276.1h0M750.9 276.1h0M759.2 276.1h0M767.5 276.1h0M775.8 276.1h0M784.1 276.1h0M792.4 276.1h0M800.7 276.1h0M809 276.1h0M817.2 276.1h0M825.5 276.1h0M833.8 276.1h0M842.1 276.1h0M850.4 276.1h0M237.2 284.4h0M245.4 284.4h0M253.7 284.4h0M262 284.4h0M278.6 284.4h0M286.9 284.4h0M295.2 284.4h0M303.4 284.4h0M311.7 284.4h0M320 284.4h0M328.3 284.4h0M336.6 284.4h0M344.9 284.4h0M353.2 284.4h0M361.5 284.4h0M369.7 284.4h0M386.3 284.4h0M394.6 284.4h0M402.9 284.4h0M411.2 284.4h0M419.5 284.4h0M427.8 284.4h0M436 284.4h0M444.3 284.4h0M452.6 284.4h0M460.9 284.4h0M469.2 284.4h0M477.5 284.4h0M485.8 284.4h0M494 284.4h0M502.3 284.4h0M510.6 284.4h0M518.9 284.4h0M527.2 284.4h0M535.5 284.4h0M543.8 284.4h0M552.1 284.4h0M560.3 284.4h0M568.6 284.4h0M576.9 284.4h0M585.2 284.4h0M593.5 284.4h0M601.8 284.4h0M610.1 284.4h0M618.4 284.4h0M626.6 284.4h0M634.9 284.4h0M643.2 284.4h0M651.5 284.4h0M659.8 284.4h0M668.1 284.4h0M676.4 284.4h0M684.6 284.4h0M692.9 284.4h0M701.2 284.4h0M709.5 284.4h0M717.8 284.4h0M726.1 284.4h0M734.4 284.4h0M742.7 284.4h0M750.9 284.4h0M759.2 284.4h0M767.5 284.4h0M775.8 284.4h0M784.1 284.4h0M792.4 284.4h0M800.7 284.4h0M809 284.4h0M817.2 284.4h0M825.5 284.4h0M833.8 284.4h0M842.1 284.4h0M850.4 284.4h0M858.7 284.4h0M867 284.4h0M237.2 292.7h0M245.4 292.7h0M253.7 292.7h0M262 292.7h0M270.3 292.7h0M278.6 292.7h0M286.9 292.7h0M295.2 292.7h0M303.4 292.7h0M311.7 292.7h0M320 292.7h0M328.3 292.7h0M336.6 292.7h0M344.9 292.7h0M353.2 292.7h0M361.5 292.7h0M369.7 292.7h0M378 292.7h0M386.3 292.7h0M394.6 292.7h0M402.9 292.7h0M411.2 292.7h0M419.5 292.7h0M427.8 292.7h0M436 292.7h0M444.3 292.7h0M452.6 292.7h0M460.9 292.7h0M469.2 292.7h0M477.5 292.7h0M485.8 292.7h0M494 292.7h0M502.3 292.7h0M510.6 292.7h0M518.9 292.7h0M527.2 292.7h0M535.5 292.7h0M543.8 292.7h0M552.1 292.7h0M560.3 292.7h0M568.6 292.7h0M576.9 292.7h0M585.2 292.7h0M593.5 292.7h0M601.8 292.7h0M610.1 292.7h0M618.4 292.7h0M626.6 292.7h0M634.9 292.7h0M643.2 292.7h0M651.5 292.7h0M659.8 292.7h0M668.1 292.7h0M676.4 292.7h0M684.6 292.7h0M692.9 292.7h0M701.2 292.7h0M709.5 292.7h0M717.8 292.7h0M726.1 292.7h0M734.4 292.7h0M742.7 292.7h0M750.9 292.7h0M759.2 292.7h0M767.5 292.7h0M775.8 292.7h0M784.1 292.7h0M792.4 292.7h0M800.7 292.7h0M809 292.7h0M817.2 292.7h0M825.5 292.7h0M833.8 292.7h0M842.1 292.7h0M850.4 292.7h0M858.7 292.7h0M867 292.7h0M875.2 292.7h0M883.5 292.7h0M237.2 301h0M245.4 301h0M253.7 301h0M262 301h0M270.3 301h0M278.6 301h0M286.9 301h0M295.2 301h0M303.4 301h0M311.7 301h0M320 301h0M328.3 301h0M336.6 301h0M344.9 301h0M353.2 301h0M361.5 301h0M369.7 301h0M378 301h0M386.3 301h0M394.6 301h0M402.9 301h0M411.2 301h0M419.5 301h0M427.8 301h0M436 301h0M444.3 301h0M452.6 301h0M460.9 301h0M469.2 301h0M477.5 301h0M485.8 301h0M494 301h0M502.3 301h0M510.6 301h0M518.9 301h0M527.2 301h0M535.5 301h0M543.8 301h0M552.1 301h0M560.3 301h0M568.6 301h0M576.9 301h0M585.2 301h0M593.5 301h0M601.8 301h0M610.1 301h0M618.4 301h0M626.6 301h0M634.9 301h0M643.2 301h0M651.5 301h0M659.8 301h0M668.1 301h0M676.4 301h0M684.6 301h0M692.9 301h0M701.2 301h0M709.5 301h0M717.8 301h0M726.1 301h0M734.4 301h0M742.7 301h0M750.9 301h0M759.2 301h0M767.5 301h0M775.8 301h0M784.1 301h0M792.4 301h0M800.7 301h0M809 301h0M817.2 301h0M825.5 301h0M833.8 301h0M842.1 301h0M850.4 301h0M858.7 301h0M867 301h0M875.2 301h0M237.2 309.3h0M245.4 309.3h0M253.7 309.3h0M262 309.3h0M270.3 309.3h0M278.6 309.3h0M286.9 309.3h0M295.2 309.3h0M303.4 309.3h0M311.7 309.3h0M320 309.3h0M328.3 309.3h0M336.6 309.3h0M344.9 309.3h0M353.2 309.3h0M361.5 309.3h0M369.7 309.3h0M378 309.3h0M386.3 309.3h0M394.6 309.3h0M402.9 309.3h0M411.2 309.3h0M419.5 309.3h0M427.8 309.3h0M436 309.3h0M444.3 309.3h0M452.6 309.3h0M460.9 309.3h0M469.2 309.3h0M477.5 309.3h0M485.8 309.3h0M494 309.3h0M502.3 309.3h0M510.6 309.3h0M518.9 309.3h0M527.2 309.3h0M535.5 309.3h0M543.8 309.3h0M552.1 309.3h0M560.3 309.3h0M568.6 309.3h0M576.9 309.3h0M585.2 309.3h0M593.5 309.3h0M601.8 309.3h0M610.1 309.3h0M618.4 309.3h0M626.6 309.3h0M634.9 309.3h0M643.2 309.3h0M651.5 309.3h0M659.8 309.3h0M668.1 309.3h0M676.4 309.3h0M684.6 309.3h0M692.9 309.3h0M701.2 309.3h0M709.5 309.3h0M717.8 309.3h0M726.1 309.3h0M734.4 309.3h0M742.7 309.3h0M750.9 309.3h0M759.2 309.3h0M767.5 309.3h0M775.8 309.3h0M784.1 309.3h0M792.4 309.3h0M800.7 309.3h0M809 309.3h0M817.2 309.3h0M825.5 309.3h0M833.8 309.3h0M842.1 309.3h0M850.4 309.3h0M858.7 309.3h0M867 309.3h0M875.2 309.3h0M237.2 317.6h0M245.4 317.6h0M253.7 317.6h0M262 317.6h0M270.3 317.6h0M278.6 317.6h0M286.9 317.6h0M295.2 317.6h0M303.4 317.6h0M311.7 317.6h0M320 317.6h0M328.3 317.6h0M336.6 317.6h0M344.9 317.6h0M353.2 317.6h0M361.5 317.6h0M369.7 317.6h0M378 317.6h0M386.3 317.6h0M394.6 317.6h0M402.9 317.6h0M411.2 317.6h0M419.5 317.6h0M427.8 317.6h0M436 317.6h0M444.3 317.6h0M452.6 317.6h0M460.9 317.6h0M469.2 317.6h0M477.5 317.6h0M485.8 317.6h0M494 317.6h0M502.3 317.6h0M510.6 317.6h0M518.9 317.6h0M527.2 317.6h0M535.5 317.6h0M543.8 317.6h0M552.1 317.6h0M560.3 317.6h0M568.6 317.6h0M576.9 317.6h0M585.2 317.6h0M593.5 317.6h0M601.8 317.6h0M610.1 317.6h0M618.4 317.6h0M626.6 317.6h0M634.9 317.6h0M643.2 317.6h0M651.5 317.6h0M659.8 317.6h0M668.1 317.6h0M676.4 317.6h0M684.6 317.6h0M692.9 317.6h0M701.2 317.6h0M709.5 317.6h0M717.8 317.6h0M726.1 317.6h0M734.4 317.6h0M742.7 317.6h0M750.9 317.6h0M759.2 317.6h0M767.5 317.6h0M775.8 317.6h0M784.1 317.6h0M792.4 317.6h0M800.7 317.6h0M809 317.6h0M817.2 317.6h0M825.5 317.6h0M833.8 317.6h0M842.1 317.6h0M850.4 317.6h0M858.7 317.6h0M867 317.6h0M875.2 317.6h0M237.2 325.8h0M245.4 325.8h0M253.7 325.8h0M262 325.8h0M270.3 325.8h0M278.6 325.8h0M286.9 325.8h0M295.2 325.8h0M303.4 325.8h0M311.7 325.8h0M320 325.8h0M328.3 325.8h0M336.6 325.8h0M344.9 325.8h0M353.2 325.8h0M361.5 325.8h0M369.7 325.8h0M378 325.8h0M386.3 325.8h0M394.6 325.8h0M402.9 325.8h0M411.2 325.8h0M419.5 325.8h0M427.8 325.8h0M436 325.8h0M444.3 325.8h0M452.6 325.8h0M460.9 325.8h0M469.2 325.8h0M477.5 325.8h0M485.8 325.8h0M494 325.8h0M502.3 325.8h0M510.6 325.8h0M518.9 325.8h0M527.2 325.8h0M535.5 325.8h0M543.8 325.8h0M552.1 325.8h0M560.3 325.8h0M568.6 325.8h0M576.9 325.8h0M585.2 325.8h0M593.5 325.8h0M601.8 325.8h0M610.1 325.8h0M618.4 325.8h0M626.6 325.8h0M634.9 325.8h0M643.2 325.8h0M651.5 325.8h0M659.8 325.8h0M668.1 325.8h0M676.4 325.8h0M684.6 325.8h0M692.9 325.8h0M701.2 325.8h0M709.5 325.8h0M717.8 325.8h0M726.1 325.8h0M734.4 325.8h0M742.7 325.8h0M750.9 325.8h0M759.2 325.8h0M767.5 325.8h0M775.8 325.8h0M784.1 325.8h0M792.4 325.8h0M800.7 325.8h0M809 325.8h0M817.2 325.8h0M825.5 325.8h0M833.8 325.8h0M842.1 325.8h0M850.4 325.8h0M858.7 325.8h0M867 325.8h0M875.2 325.8h0M237.2 334.1h0M245.4 334.1h0M253.7 334.1h0M262 334.1h0M270.3 334.1h0M278.6 334.1h0M286.9 334.1h0M295.2 334.1h0M303.4 334.1h0M311.7 334.1h0M320 334.1h0M328.3 334.1h0M336.6 334.1h0M344.9 334.1h0M353.2 334.1h0M361.5 334.1h0M369.7 334.1h0M378 334.1h0M386.3 334.1h0M394.6 334.1h0M402.9 334.1h0M411.2 334.1h0M419.5 334.1h0M427.8 334.1h0M436 334.1h0M444.3 334.1h0M452.6 334.1h0M460.9 334.1h0M469.2 334.1h0M477.5 334.1h0M485.8 334.1h0M494 334.1h0M502.3 334.1h0M510.6 334.1h0M518.9 334.1h0M527.2 334.1h0M535.5 334.1h0M543.8 334.1h0M552.1 334.1h0M560.3 334.1h0M568.6 334.1h0M576.9 334.1h0M585.2 334.1h0M593.5 334.1h0M601.8 334.1h0M610.1 334.1h0M618.4 334.1h0M626.6 334.1h0M634.9 334.1h0M643.2 334.1h0M651.5 334.1h0M659.8 334.1h0M668.1 334.1h0M676.4 334.1h0M684.6 334.1h0M692.9 334.1h0M701.2 334.1h0M709.5 334.1h0M717.8 334.1h0M726.1 334.1h0M734.4 334.1h0M742.7 334.1h0M750.9 334.1h0M759.2 334.1h0M767.5 334.1h0M775.8 334.1h0M784.1 334.1h0M792.4 334.1h0M800.7 334.1h0M809 334.1h0M817.2 334.1h0M825.5 334.1h0M833.8 334.1h0M842.1 334.1h0M850.4 334.1h0M858.7 334.1h0M867 334.1h0M875.2 334.1h0M237.2 342.4h0M245.4 342.4h0M253.7 342.4h0M262 342.4h0M270.3 342.4h0M278.6 342.4h0M286.9 342.4h0M295.2 342.4h0M303.4 342.4h0M311.7 342.4h0M320 342.4h0M328.3 342.4h0M336.6 342.4h0M344.9 342.4h0M353.2 342.4h0M361.5 342.4h0M369.7 342.4h0M378 342.4h0M386.3 342.4h0M394.6 342.4h0M402.9 342.4h0M411.2 342.4h0M419.5 342.4h0M427.8 342.4h0M436 342.4h0M444.3 342.4h0M452.6 342.4h0M460.9 342.4h0M469.2 342.4h0M477.5 342.4h0M485.8 342.4h0M494 342.4h0M502.3 342.4h0M510.6 342.4h0M518.9 342.4h0M527.2 342.4h0M535.5 342.4h0M543.8 342.4h0M552.1 342.4h0M560.3 342.4h0M568.6 342.4h0M576.9 342.4h0M585.2 342.4h0M593.5 342.4h0M601.8 342.4h0M610.1 342.4h0M618.4 342.4h0M626.6 342.4h0M634.9 342.4h0M643.2 342.4h0M651.5 342.4h0M659.8 342.4h0M668.1 342.4h0M676.4 342.4h0M684.6 342.4h0M692.9 342.4h0M701.2 342.4h0M709.5 342.4h0M717.8 342.4h0M726.1 342.4h0M734.4 342.4h0M742.7 342.4h0M750.9 342.4h0M759.2 342.4h0M767.5 342.4h0M775.8 342.4h0M784.1 342.4h0M792.4 342.4h0M800.7 342.4h0M809 342.4h0M817.2 342.4h0M825.5 342.4h0M833.8 342.4h0M842.1 342.4h0M850.4 342.4h0M858.7 342.4h0M867 342.4h0M237.2 350.7h0M245.4 350.7h0M253.7 350.7h0M262 350.7h0M270.3 350.7h0M278.6 350.7h0M286.9 350.7h0M295.2 350.7h0M303.4 350.7h0M311.7 350.7h0M320 350.7h0M328.3 350.7h0M336.6 350.7h0M344.9 350.7h0M353.2 350.7h0M361.5 350.7h0M369.7 350.7h0M378 350.7h0M386.3 350.7h0M394.6 350.7h0M402.9 350.7h0M411.2 350.7h0M419.5 350.7h0M427.8 350.7h0M436 350.7h0M444.3 350.7h0M452.6 350.7h0M460.9 350.7h0M469.2 350.7h0M477.5 350.7h0M485.8 350.7h0M494 350.7h0M502.3 350.7h0M510.6 350.7h0M518.9 350.7h0M527.2 350.7h0M535.5 350.7h0M543.8 350.7h0M552.1 350.7h0M560.3 350.7h0M568.6 350.7h0M576.9 350.7h0M585.2 350.7h0M593.5 350.7h0M601.8 350.7h0M610.1 350.7h0M618.4 350.7h0M626.6 350.7h0M634.9 350.7h0M643.2 350.7h0M651.5 350.7h0M659.8 350.7h0M668.1 350.7h0M676.4 350.7h0M684.6 350.7h0M692.9 350.7h0M701.2 350.7h0M709.5 350.7h0M717.8 350.7h0M726.1 350.7h0M734.4 350.7h0M742.7 350.7h0M750.9 350.7h0M759.2 350.7h0M767.5 350.7h0M775.8 350.7h0M784.1 350.7h0M792.4 350.7h0M800.7 350.7h0M809 350.7h0M817.2 350.7h0M825.5 350.7h0M833.8 350.7h0M842.1 350.7h0M850.4 350.7h0M858.7 350.7h0M867 350.7h0M237.2 359h0M245.4 359h0M253.7 359h0M262 359h0M270.3 359h0M278.6 359h0M286.9 359h0M295.2 359h0M303.4 359h0M311.7 359h0M320 359h0M328.3 359h0M336.6 359h0M344.9 359h0M353.2 359h0M361.5 359h0M369.7 359h0M378 359h0M386.3 359h0M394.6 359h0M402.9 359h0M411.2 359h0M419.5 359h0M427.8 359h0M436 359h0M444.3 359h0M452.6 359h0M460.9 359h0M469.2 359h0M477.5 359h0M485.8 359h0M494 359h0M502.3 359h0M510.6 359h0M518.9 359h0M527.2 359h0M535.5 359h0M543.8 359h0M552.1 359h0M560.3 359h0M568.6 359h0M576.9 359h0M585.2 359h0M593.5 359h0M601.8 359h0M610.1 359h0M618.4 359h0M626.6 359h0M634.9 359h0M643.2 359h0M651.5 359h0M659.8 359h0M668.1 359h0M676.4 359h0M684.6 359h0M692.9 359h0M701.2 359h0M709.5 359h0M717.8 359h0M726.1 359h0M734.4 359h0M742.7 359h0M750.9 359h0M759.2 359h0M767.5 359h0M775.8 359h0M784.1 359h0M792.4 359h0M800.7 359h0M809 359h0M817.2 359h0M825.5 359h0M833.8 359h0M842.1 359h0M850.4 359h0M858.7 359h0M867 359h0M237.2 367.3h0M245.4 367.3h0M253.7 367.3h0M262 367.3h0M270.3 367.3h0M278.6 367.3h0M286.9 367.3h0M295.2 367.3h0M303.4 367.3h0M311.7 367.3h0M320 367.3h0M328.3 367.3h0M336.6 367.3h0M344.9 367.3h0M353.2 367.3h0M361.5 367.3h0M369.7 367.3h0M378 367.3h0M386.3 367.3h0M394.6 367.3h0M402.9 367.3h0M411.2 367.3h0M419.5 367.3h0M427.8 367.3h0M436 367.3h0M444.3 367.3h0M452.6 367.3h0M460.9 367.3h0M469.2 367.3h0M477.5 367.3h0M485.8 367.3h0M494 367.3h0M502.3 367.3h0M510.6 367.3h0M518.9 367.3h0M527.2 367.3h0M535.5 367.3h0M543.8 367.3h0M552.1 367.3h0M560.3 367.3h0M568.6 367.3h0M576.9 367.3h0M585.2 367.3h0M593.5 367.3h0M601.8 367.3h0M610.1 367.3h0M618.4 367.3h0M626.6 367.3h0M634.9 367.3h0M643.2 367.3h0M651.5 367.3h0M659.8 367.3h0M668.1 367.3h0M676.4 367.3h0M684.6 367.3h0M692.9 367.3h0M701.2 367.3h0M709.5 367.3h0M717.8 367.3h0M726.1 367.3h0M734.4 367.3h0M742.7 367.3h0M750.9 367.3h0M759.2 367.3h0M767.5 367.3h0M775.8 367.3h0M784.1 367.3h0M792.4 367.3h0M800.7 367.3h0M809 367.3h0M817.2 367.3h0M825.5 367.3h0M833.8 367.3h0M842.1 367.3h0M850.4 367.3h0M858.7 367.3h0M867 367.3h0M237.2 375.6h0M245.4 375.6h0M253.7 375.6h0M262 375.6h0M270.3 375.6h0M278.6 375.6h0M286.9 375.6h0M295.2 375.6h0M303.4 375.6h0M311.7 375.6h0M320 375.6h0M328.3 375.6h0M336.6 375.6h0M344.9 375.6h0M353.2 375.6h0M361.5 375.6h0M369.7 375.6h0M378 375.6h0M386.3 375.6h0M394.6 375.6h0M402.9 375.6h0M411.2 375.6h0M419.5 375.6h0M427.8 375.6h0M436 375.6h0M444.3 375.6h0M452.6 375.6h0M460.9 375.6h0M469.2 375.6h0M477.5 375.6h0M485.8 375.6h0M494 375.6h0M502.3 375.6h0M510.6 375.6h0M518.9 375.6h0M527.2 375.6h0M535.5 375.6h0M543.8 375.6h0M552.1 375.6h0M560.3 375.6h0M568.6 375.6h0M576.9 375.6h0M585.2 375.6h0M593.5 375.6h0M601.8 375.6h0M610.1 375.6h0M618.4 375.6h0M626.6 375.6h0M634.9 375.6h0M643.2 375.6h0M651.5 375.6h0M659.8 375.6h0M668.1 375.6h0M676.4 375.6h0M684.6 375.6h0M692.9 375.6h0M701.2 375.6h0M709.5 375.6h0M717.8 375.6h0M726.1 375.6h0M734.4 375.6h0M742.7 375.6h0M750.9 375.6h0M759.2 375.6h0M767.5 375.6h0M775.8 375.6h0M784.1 375.6h0M792.4 375.6h0M800.7 375.6h0M809 375.6h0M817.2 375.6h0M825.5 375.6h0M833.8 375.6h0M842.1 375.6h0M850.4 375.6h0M858.7 375.6h0M295.2 383.9h0M303.4 383.9h0M311.7 383.9h0M320 383.9h0M328.3 383.9h0M336.6 383.9h0M344.9 383.9h0M353.2 383.9h0M361.5 383.9h0M369.7 383.9h0M378 383.9h0M386.3 383.9h0M394.6 383.9h0M402.9 383.9h0M411.2 383.9h0M419.5 383.9h0M427.8 383.9h0M436 383.9h0M444.3 383.9h0M452.6 383.9h0M460.9 383.9h0M469.2 383.9h0M477.5 383.9h0M485.8 383.9h0M494 383.9h0M502.3 383.9h0M510.6 383.9h0M518.9 383.9h0M527.2 383.9h0M535.5 383.9h0M543.8 383.9h0M552.1 383.9h0M560.3 383.9h0M568.6 383.9h0M576.9 383.9h0M585.2 383.9h0M593.5 383.9h0M601.8 383.9h0M610.1 383.9h0M618.4 383.9h0M626.6 383.9h0M634.9 383.9h0M643.2 383.9h0M651.5 383.9h0M659.8 383.9h0M668.1 383.9h0M676.4 383.9h0M684.6 383.9h0M692.9 383.9h0M701.2 383.9h0M709.5 383.9h0M717.8 383.9h0M726.1 383.9h0M734.4 383.9h0M742.7 383.9h0M750.9 383.9h0M759.2 383.9h0M767.5 383.9h0M775.8 383.9h0M784.1 383.9h0M792.4 383.9h0M800.7 383.9h0M809 383.9h0M817.2 383.9h0M825.5 383.9h0M833.8 383.9h0M842.1 383.9h0M850.4 383.9h0M858.7 383.9h0M320 392.1h0M328.3 392.1h0M336.6 392.1h0M344.9 392.1h0M353.2 392.1h0M361.5 392.1h0M369.7 392.1h0M378 392.1h0M386.3 392.1h0M394.6 392.1h0M402.9 392.1h0M411.2 392.1h0M419.5 392.1h0M427.8 392.1h0M436 392.1h0M444.3 392.1h0M452.6 392.1h0M460.9 392.1h0M469.2 392.1h0M477.5 392.1h0M485.8 392.1h0M494 392.1h0M502.3 392.1h0M510.6 392.1h0M518.9 392.1h0M527.2 392.1h0M535.5 392.1h0M543.8 392.1h0M552.1 392.1h0M560.3 392.1h0M568.6 392.1h0M576.9 392.1h0M585.2 392.1h0M593.5 392.1h0M601.8 392.1h0M610.1 392.1h0M618.4 392.1h0M626.6 392.1h0M634.9 392.1h0M643.2 392.1h0M651.5 392.1h0M659.8 392.1h0M668.1 392.1h0M676.4 392.1h0M684.6 392.1h0M692.9 392.1h0M701.2 392.1h0M709.5 392.1h0M717.8 392.1h0M726.1 392.1h0M734.4 392.1h0M742.7 392.1h0M750.9 392.1h0M759.2 392.1h0M767.5 392.1h0M775.8 392.1h0M784.1 392.1h0M792.4 392.1h0M800.7 392.1h0M809 392.1h0M817.2 392.1h0M825.5 392.1h0M833.8 392.1h0M842.1 392.1h0M850.4 392.1h0M858.7 392.1h0M344.9 400.4h0M353.2 400.4h0M361.5 400.4h0M369.7 400.4h0M378 400.4h0M386.3 400.4h0M394.6 400.4h0M402.9 400.4h0M411.2 400.4h0M419.5 400.4h0M427.8 400.4h0M436 400.4h0M444.3 400.4h0M452.6 400.4h0M460.9 400.4h0M469.2 400.4h0M477.5 400.4h0M485.8 400.4h0M494 400.4h0M502.3 400.4h0M510.6 400.4h0M518.9 400.4h0M527.2 400.4h0M535.5 400.4h0M543.8 400.4h0M552.1 400.4h0M560.3 400.4h0M568.6 400.4h0M576.9 400.4h0M585.2 400.4h0M593.5 400.4h0M601.8 400.4h0M610.1 400.4h0M618.4 400.4h0M626.6 400.4h0M634.9 400.4h0M643.2 400.4h0M651.5 400.4h0M659.8 400.4h0M668.1 400.4h0M676.4 400.4h0M684.6 400.4h0M692.9 400.4h0M701.2 400.4h0M709.5 400.4h0M717.8 400.4h0M726.1 400.4h0M734.4 400.4h0M742.7 400.4h0M750.9 400.4h0M759.2 400.4h0M767.5 400.4h0M775.8 400.4h0M784.1 400.4h0M792.4 400.4h0M800.7 400.4h0M809 400.4h0M817.2 400.4h0M825.5 400.4h0M833.8 400.4h0M842.1 400.4h0M850.4 400.4h0M858.7 400.4h0M369.7 408.7h0M378 408.7h0M386.3 408.7h0M394.6 408.7h0M402.9 408.7h0M411.2 408.7h0M419.5 408.7h0M427.8 408.7h0M436 408.7h0M444.3 408.7h0M452.6 408.7h0M460.9 408.7h0M469.2 408.7h0M477.5 408.7h0M485.8 408.7h0M494 408.7h0M502.3 408.7h0M510.6 408.7h0M518.9 408.7h0M527.2 408.7h0M535.5 408.7h0M543.8 408.7h0M552.1 408.7h0M560.3 408.7h0M568.6 408.7h0M576.9 408.7h0M585.2 408.7h0M593.5 408.7h0M601.8 408.7h0M610.1 408.7h0M618.4 408.7h0M626.6 408.7h0M634.9 408.7h0M643.2 408.7h0M651.5 408.7h0M659.8 408.7h0M668.1 408.7h0M676.4 408.7h0M684.6 408.7h0M692.9 408.7h0M701.2 408.7h0M709.5 408.7h0M717.8 408.7h0M726.1 408.7h0M734.4 408.7h0M742.7 408.7h0M750.9 408.7h0M759.2 408.7h0M767.5 408.7h0M775.8 408.7h0M784.1 408.7h0M792.4 408.7h0M800.7 408.7h0M809 408.7h0M817.2 408.7h0M825.5 408.7h0M833.8 408.7h0M842.1 408.7h0M850.4 408.7h0M858.7 408.7h0M369.7 417h0M378 417h0M386.3 417h0M394.6 417h0M402.9 417h0M411.2 417h0M419.5 417h0M427.8 417h0M436 417h0M444.3 417h0M452.6 417h0M460.9 417h0M469.2 417h0M477.5 417h0M485.8 417h0M494 417h0M502.3 417h0M510.6 417h0M518.9 417h0M527.2 417h0M535.5 417h0M543.8 417h0M552.1 417h0M560.3 417h0M568.6 417h0M576.9 417h0M585.2 417h0M593.5 417h0M601.8 417h0M610.1 417h0M618.4 417h0M626.6 417h0M634.9 417h0M643.2 417h0M651.5 417h0M659.8 417h0M668.1 417h0M676.4 417h0M684.6 417h0M692.9 417h0M701.2 417h0M709.5 417h0M717.8 417h0M726.1 417h0M734.4 417h0M742.7 417h0M750.9 417h0M759.2 417h0M767.5 417h0M775.8 417h0M784.1 417h0M792.4 417h0M800.7 417h0M809 417h0M817.2 417h0M825.5 417h0M833.8 417h0M842.1 417h0M850.4 417h0M369.7 425.3h0M378 425.3h0M386.3 425.3h0M394.6 425.3h0M402.9 425.3h0M411.2 425.3h0M419.5 425.3h0M427.8 425.3h0M436 425.3h0M444.3 425.3h0M452.6 425.3h0M460.9 425.3h0M469.2 425.3h0M477.5 425.3h0M485.8 425.3h0M494 425.3h0M502.3 425.3h0M510.6 425.3h0M518.9 425.3h0M527.2 425.3h0M535.5 425.3h0M543.8 425.3h0M552.1 425.3h0M560.3 425.3h0M568.6 425.3h0M576.9 425.3h0M585.2 425.3h0M593.5 425.3h0M601.8 425.3h0M610.1 425.3h0M618.4 425.3h0M626.6 425.3h0M634.9 425.3h0M643.2 425.3h0M651.5 425.3h0M659.8 425.3h0M668.1 425.3h0M676.4 425.3h0M684.6 425.3h0M692.9 425.3h0M701.2 425.3h0M709.5 425.3h0M717.8 425.3h0M726.1 425.3h0M734.4 425.3h0M742.7 425.3h0M750.9 425.3h0M759.2 425.3h0M767.5 425.3h0M775.8 425.3h0M784.1 425.3h0M792.4 425.3h0M800.7 425.3h0M809 425.3h0M817.2 425.3h0M825.5 425.3h0M833.8 425.3h0M842.1 425.3h0M850.4 425.3h0M369.7 433.6h0M378 433.6h0M386.3 433.6h0M394.6 433.6h0M402.9 433.6h0M411.2 433.6h0M419.5 433.6h0M427.8 433.6h0M436 433.6h0M444.3 433.6h0M452.6 433.6h0M460.9 433.6h0M469.2 433.6h0M477.5 433.6h0M485.8 433.6h0M494 433.6h0M502.3 433.6h0M510.6 433.6h0M518.9 433.6h0M527.2 433.6h0M535.5 433.6h0M543.8 433.6h0M552.1 433.6h0M560.3 433.6h0M568.6 433.6h0M576.9 433.6h0M585.2 433.6h0M593.5 433.6h0M601.8 433.6h0M610.1 433.6h0M618.4 433.6h0M626.6 433.6h0M634.9 433.6h0M643.2 433.6h0M651.5 433.6h0M659.8 433.6h0M668.1 433.6h0M676.4 433.6h0M684.6 433.6h0M692.9 433.6h0M701.2 433.6h0M709.5 433.6h0M717.8 433.6h0M726.1 433.6h0M734.4 433.6h0M742.7 433.6h0M750.9 433.6h0M759.2 433.6h0M767.5 433.6h0M775.8 433.6h0M784.1 433.6h0M792.4 433.6h0M800.7 433.6h0M809 433.6h0M817.2 433.6h0M825.5 433.6h0M833.8 433.6h0M842.1 433.6h0M850.4 433.6h0M369.7 441.9h0M378 441.9h0M386.3 441.9h0M394.6 441.9h0M402.9 441.9h0M411.2 441.9h0M419.5 441.9h0M427.8 441.9h0M436 441.9h0M444.3 441.9h0M452.6 441.9h0M460.9 441.9h0M469.2 441.9h0M477.5 441.9h0M485.8 441.9h0M494 441.9h0M502.3 441.9h0M510.6 441.9h0M518.9 441.9h0M527.2 441.9h0M535.5 441.9h0M543.8 441.9h0M552.1 441.9h0M560.3 441.9h0M568.6 441.9h0M576.9 441.9h0M585.2 441.9h0M593.5 441.9h0M601.8 441.9h0M610.1 441.9h0M618.4 441.9h0M626.6 441.9h0M634.9 441.9h0M643.2 441.9h0M651.5 441.9h0M659.8 441.9h0M668.1 441.9h0M676.4 441.9h0M684.6 441.9h0M692.9 441.9h0M701.2 441.9h0M709.5 441.9h0M717.8 441.9h0M726.1 441.9h0M734.4 441.9h0M742.7 441.9h0M750.9 441.9h0M759.2 441.9h0M767.5 441.9h0M775.8 441.9h0M784.1 441.9h0M792.4 441.9h0M800.7 441.9h0M809 441.9h0M817.2 441.9h0M825.5 441.9h0M833.8 441.9h0M842.1 441.9h0M850.4 441.9h0M361.5 450.2h0M369.7 450.2h0M378 450.2h0M386.3 450.2h0M394.6 450.2h0M402.9 450.2h0M411.2 450.2h0M419.5 450.2h0M427.8 450.2h0M436 450.2h0M444.3 450.2h0M452.6 450.2h0M460.9 450.2h0M469.2 450.2h0M477.5 450.2h0M485.8 450.2h0M494 450.2h0M502.3 450.2h0M510.6 450.2h0M518.9 450.2h0M527.2 450.2h0M535.5 450.2h0M543.8 450.2h0M552.1 450.2h0M560.3 450.2h0M568.6 450.2h0M576.9 450.2h0M585.2 450.2h0M593.5 450.2h0M601.8 450.2h0M610.1 450.2h0M618.4 450.2h0M626.6 450.2h0M634.9 450.2h0M643.2 450.2h0M651.5 450.2h0M659.8 450.2h0M668.1 450.2h0M676.4 450.2h0M684.6 450.2h0M692.9 450.2h0M701.2 450.2h0M709.5 450.2h0M717.8 450.2h0M726.1 450.2h0M734.4 450.2h0M742.7 450.2h0M750.9 450.2h0M759.2 450.2h0M767.5 450.2h0M775.8 450.2h0M784.1 450.2h0M792.4 450.2h0M800.7 450.2h0M809 450.2h0M817.2 450.2h0M825.5 450.2h0M833.8 450.2h0M842.1 450.2h0M361.5 458.4h0M369.7 458.4h0M378 458.4h0M386.3 458.4h0M394.6 458.4h0M402.9 458.4h0M411.2 458.4h0M419.5 458.4h0M427.8 458.4h0M436 458.4h0M444.3 458.4h0M452.6 458.4h0M460.9 458.4h0M469.2 458.4h0M477.5 458.4h0M485.8 458.4h0M494 458.4h0M502.3 458.4h0M510.6 458.4h0M518.9 458.4h0M527.2 458.4h0M535.5 458.4h0M543.8 458.4h0M552.1 458.4h0M560.3 458.4h0M568.6 458.4h0M576.9 458.4h0M585.2 458.4h0M593.5 458.4h0M601.8 458.4h0M610.1 458.4h0M618.4 458.4h0M626.6 458.4h0M634.9 458.4h0M643.2 458.4h0M651.5 458.4h0M659.8 458.4h0M668.1 458.4h0M676.4 458.4h0M684.6 458.4h0M692.9 458.4h0M701.2 458.4h0M709.5 458.4h0M717.8 458.4h0M726.1 458.4h0M734.4 458.4h0M742.7 458.4h0M750.9 458.4h0M759.2 458.4h0M767.5 458.4h0M775.8 458.4h0M784.1 458.4h0M792.4 458.4h0M800.7 458.4h0M809 458.4h0M817.2 458.4h0M825.5 458.4h0M833.8 458.4h0M842.1 458.4h0M361.5 466.7h0M369.7 466.7h0M378 466.7h0M386.3 466.7h0M394.6 466.7h0M402.9 466.7h0M411.2 466.7h0M419.5 466.7h0M427.8 466.7h0M436 466.7h0M444.3 466.7h0M452.6 466.7h0M460.9 466.7h0M469.2 466.7h0M477.5 466.7h0M485.8 466.7h0M494 466.7h0M502.3 466.7h0M510.6 466.7h0M518.9 466.7h0M527.2 466.7h0M535.5 466.7h0M543.8 466.7h0M552.1 466.7h0M560.3 466.7h0M568.6 466.7h0M576.9 466.7h0M585.2 466.7h0M593.5 466.7h0M601.8 466.7h0M610.1 466.7h0M618.4 466.7h0M626.6 466.7h0M634.9 466.7h0M643.2 466.7h0M651.5 466.7h0M659.8 466.7h0M668.1 466.7h0M676.4 466.7h0M684.6 466.7h0M692.9 466.7h0M701.2 466.7h0M709.5 466.7h0M717.8 466.7h0M726.1 466.7h0M734.4 466.7h0M742.7 466.7h0M750.9 466.7h0M759.2 466.7h0M767.5 466.7h0M775.8 466.7h0M784.1 466.7h0M792.4 466.7h0M800.7 466.7h0M809 466.7h0M817.2 466.7h0M825.5 466.7h0M833.8 466.7h0M842.1 466.7h0M361.5 475h0M369.7 475h0M378 475h0M386.3 475h0M394.6 475h0M402.9 475h0M411.2 475h0M419.5 475h0M427.8 475h0M436 475h0M444.3 475h0M452.6 475h0M460.9 475h0M469.2 475h0M477.5 475h0M485.8 475h0M494 475h0M502.3 475h0M510.6 475h0M518.9 475h0M527.2 475h0M535.5 475h0M543.8 475h0M552.1 475h0M560.3 475h0M568.6 475h0M576.9 475h0M585.2 475h0M593.5 475h0M601.8 475h0M610.1 475h0M618.4 475h0M626.6 475h0M634.9 475h0M643.2 475h0M651.5 475h0M659.8 475h0M668.1 475h0M676.4 475h0M684.6 475h0M692.9 475h0M701.2 475h0M709.5 475h0M717.8 475h0M726.1 475h0M734.4 475h0M742.7 475h0M750.9 475h0M759.2 475h0M767.5 475h0M775.8 475h0M784.1 475h0M792.4 475h0M800.7 475h0M809 475h0M817.2 475h0M825.5 475h0M833.8 475h0M842.1 475h0M353.2 483.3h0M361.5 483.3h0M369.7 483.3h0M378 483.3h0M386.3 483.3h0M394.6 483.3h0M402.9 483.3h0M411.2 483.3h0M419.5 483.3h0M427.8 483.3h0M436 483.3h0M444.3 483.3h0M452.6 483.3h0M460.9 483.3h0M469.2 483.3h0M477.5 483.3h0M485.8 483.3h0M494 483.3h0M502.3 483.3h0M510.6 483.3h0M518.9 483.3h0M527.2 483.3h0M535.5 483.3h0M543.8 483.3h0M552.1 483.3h0M560.3 483.3h0M568.6 483.3h0M576.9 483.3h0M585.2 483.3h0M593.5 483.3h0M601.8 483.3h0M610.1 483.3h0M618.4 483.3h0M626.6 483.3h0M634.9 483.3h0M643.2 483.3h0M651.5 483.3h0M659.8 483.3h0M668.1 483.3h0M676.4 483.3h0M684.6 483.3h0M692.9 483.3h0M701.2 483.3h0M709.5 483.3h0M717.8 483.3h0M726.1 483.3h0M734.4 483.3h0M742.7 483.3h0M750.9 483.3h0M759.2 483.3h0M767.5 483.3h0M775.8 483.3h0M784.1 483.3h0M792.4 483.3h0M800.7 483.3h0M809 483.3h0M817.2 483.3h0M825.5 483.3h0M833.8 483.3h0M842.1 483.3h0M353.2 491.6h0M361.5 491.6h0M369.7 491.6h0M378 491.6h0M386.3 491.6h0M394.6 491.6h0M402.9 491.6h0M411.2 491.6h0M419.5 491.6h0M427.8 491.6h0M436 491.6h0M444.3 491.6h0M452.6 491.6h0M460.9 491.6h0M469.2 491.6h0M477.5 491.6h0M485.8 491.6h0M494 491.6h0M502.3 491.6h0M510.6 491.6h0M518.9 491.6h0M527.2 491.6h0M535.5 491.6h0M543.8 491.6h0M552.1 491.6h0M560.3 491.6h0M568.6 491.6h0M576.9 491.6h0M585.2 491.6h0M593.5 491.6h0M601.8 491.6h0M610.1 491.6h0M618.4 491.6h0M626.6 491.6h0M634.9 491.6h0M643.2 491.6h0M651.5 491.6h0M659.8 491.6h0M668.1 491.6h0M676.4 491.6h0M684.6 491.6h0M692.9 491.6h0M701.2 491.6h0M709.5 491.6h0M717.8 491.6h0M726.1 491.6h0M734.4 491.6h0M742.7 491.6h0M750.9 491.6h0M759.2 491.6h0M767.5 491.6h0M775.8 491.6h0M784.1 491.6h0M792.4 491.6h0M800.7 491.6h0M809 491.6h0M817.2 491.6h0M825.5 491.6h0M833.8 491.6h0M353.2 499.9h0M361.5 499.9h0M369.7 499.9h0M378 499.9h0M386.3 499.9h0M394.6 499.9h0M402.9 499.9h0M411.2 499.9h0M419.5 499.9h0M427.8 499.9h0M436 499.9h0M444.3 499.9h0M452.6 499.9h0M460.9 499.9h0M469.2 499.9h0M477.5 499.9h0M485.8 499.9h0M494 499.9h0M502.3 499.9h0M510.6 499.9h0M518.9 499.9h0M527.2 499.9h0M535.5 499.9h0M543.8 499.9h0M552.1 499.9h0M560.3 499.9h0M568.6 499.9h0M576.9 499.9h0M585.2 499.9h0M593.5 499.9h0M601.8 499.9h0M610.1 499.9h0M618.4 499.9h0M626.6 499.9h0M634.9 499.9h0M643.2 499.9h0M651.5 499.9h0M659.8 499.9h0M668.1 499.9h0M676.4 499.9h0M684.6 499.9h0M692.9 499.9h0M701.2 499.9h0M709.5 499.9h0M717.8 499.9h0M726.1 499.9h0M734.4 499.9h0M742.7 499.9h0M750.9 499.9h0M759.2 499.9h0M767.5 499.9h0M775.8 499.9h0M784.1 499.9h0M792.4 499.9h0M800.7 499.9h0M809 499.9h0M817.2 499.9h0M825.5 499.9h0M353.2 508.2h0M361.5 508.2h0M369.7 508.2h0M378 508.2h0M386.3 508.2h0M394.6 508.2h0M402.9 508.2h0M411.2 508.2h0M419.5 508.2h0M427.8 508.2h0M436 508.2h0M444.3 508.2h0M452.6 508.2h0M460.9 508.2h0M469.2 508.2h0M477.5 508.2h0M485.8 508.2h0M494 508.2h0M502.3 508.2h0M510.6 508.2h0M518.9 508.2h0M527.2 508.2h0M535.5 508.2h0M543.8 508.2h0M552.1 508.2h0M560.3 508.2h0M568.6 508.2h0M576.9 508.2h0M585.2 508.2h0M593.5 508.2h0M601.8 508.2h0M610.1 508.2h0M618.4 508.2h0M626.6 508.2h0M634.9 508.2h0M643.2 508.2h0M651.5 508.2h0M659.8 508.2h0M668.1 508.2h0M676.4 508.2h0M684.6 508.2h0M692.9 508.2h0M701.2 508.2h0M709.5 508.2h0M717.8 508.2h0M726.1 508.2h0M734.4 508.2h0M742.7 508.2h0M750.9 508.2h0M759.2 508.2h0M767.5 508.2h0M775.8 508.2h0M784.1 508.2h0M792.4 508.2h0M800.7 508.2h0M809 508.2h0M817.2 508.2h0M344.9 516.5h0M353.2 516.5h0M361.5 516.5h0M369.7 516.5h0M378 516.5h0M386.3 516.5h0M394.6 516.5h0M402.9 516.5h0M411.2 516.5h0M419.5 516.5h0M427.8 516.5h0M436 516.5h0M444.3 516.5h0M452.6 516.5h0M460.9 516.5h0M469.2 516.5h0M477.5 516.5h0M485.8 516.5h0M494 516.5h0M502.3 516.5h0M510.6 516.5h0M518.9 516.5h0M527.2 516.5h0M535.5 516.5h0M543.8 516.5h0M552.1 516.5h0M560.3 516.5h0M568.6 516.5h0M576.9 516.5h0M585.2 516.5h0M593.5 516.5h0M601.8 516.5h0M610.1 516.5h0M618.4 516.5h0M626.6 516.5h0M634.9 516.5h0M643.2 516.5h0M651.5 516.5h0M659.8 516.5h0M668.1 516.5h0M676.4 516.5h0M684.6 516.5h0M692.9 516.5h0M701.2 516.5h0M709.5 516.5h0M717.8 516.5h0M726.1 516.5h0M734.4 516.5h0M742.7 516.5h0M750.9 516.5h0M759.2 516.5h0M767.5 516.5h0M775.8 516.5h0M784.1 516.5h0M792.4 516.5h0M800.7 516.5h0M809 516.5h0M817.2 516.5h0M344.9 524.7h0M353.2 524.7h0M361.5 524.7h0M369.7 524.7h0M378 524.7h0M386.3 524.7h0M394.6 524.7h0M402.9 524.7h0M411.2 524.7h0M419.5 524.7h0M427.8 524.7h0M436 524.7h0M444.3 524.7h0M452.6 524.7h0M460.9 524.7h0M469.2 524.7h0M477.5 524.7h0M485.8 524.7h0M494 524.7h0M502.3 524.7h0M510.6 524.7h0M518.9 524.7h0M527.2 524.7h0M535.5 524.7h0M543.8 524.7h0M552.1 524.7h0M560.3 524.7h0M568.6 524.7h0M576.9 524.7h0M585.2 524.7h0M593.5 524.7h0M601.8 524.7h0M610.1 524.7h0M618.4 524.7h0M626.6 524.7h0M634.9 524.7h0M643.2 524.7h0M651.5 524.7h0M659.8 524.7h0M668.1 524.7h0M676.4 524.7h0M684.6 524.7h0M692.9 524.7h0M701.2 524.7h0M709.5 524.7h0M717.8 524.7h0M726.1 524.7h0M734.4 524.7h0M742.7 524.7h0M784.1 524.7h0M792.4 524.7h0M800.7 524.7h0M809 524.7h0M344.9 533h0M353.2 533h0M361.5 533h0M369.7 533h0M378 533h0M386.3 533h0M394.6 533h0M402.9 533h0M411.2 533h0M419.5 533h0M427.8 533h0M436 533h0M444.3 533h0M452.6 533h0M460.9 533h0M469.2 533h0M477.5 533h0M485.8 533h0M494 533h0M502.3 533h0M510.6 533h0M518.9 533h0M527.2 533h0M535.5 533h0M543.8 533h0M552.1 533h0M560.3 533h0M568.6 533h0M576.9 533h0M585.2 533h0M593.5 533h0M601.8 533h0M610.1 533h0M618.4 533h0M626.6 533h0M634.9 533h0M643.2 533h0M651.5 533h0M659.8 533h0M668.1 533h0M676.4 533h0M684.6 533h0M692.9 533h0M701.2 533h0M709.5 533h0M717.8 533h0M726.1 533h0M734.4 533h0M742.7 533h0M336.6 541.3h0M344.9 541.3h0M353.2 541.3h0M361.5 541.3h0M369.7 541.3h0M378 541.3h0M386.3 541.3h0M394.6 541.3h0M402.9 541.3h0M411.2 541.3h0M419.5 541.3h0M427.8 541.3h0M436 541.3h0M444.3 541.3h0M452.6 541.3h0M460.9 541.3h0M469.2 541.3h0M477.5 541.3h0M485.8 541.3h0M494 541.3h0M502.3 541.3h0M510.6 541.3h0M518.9 541.3h0M527.2 541.3h0M535.5 541.3h0M543.8 541.3h0M552.1 541.3h0M560.3 541.3h0M568.6 541.3h0M576.9 541.3h0M585.2 541.3h0M593.5 541.3h0M601.8 541.3h0M610.1 541.3h0M618.4 541.3h0M626.6 541.3h0M634.9 541.3h0M643.2 541.3h0M651.5 541.3h0M659.8 541.3h0M668.1 541.3h0M676.4 541.3h0M684.6 541.3h0M692.9 541.3h0M701.2 541.3h0M709.5 541.3h0M717.8 541.3h0M726.1 541.3h0M734.4 541.3h0M336.6 549.6h0M344.9 549.6h0M353.2 549.6h0M361.5 549.6h0M369.7 549.6h0M378 549.6h0M386.3 549.6h0M394.6 549.6h0M402.9 549.6h0M411.2 549.6h0M419.5 549.6h0M427.8 549.6h0M436 549.6h0M444.3 549.6h0M452.6 549.6h0M460.9 549.6h0M469.2 549.6h0M477.5 549.6h0M485.8 549.6h0M494 549.6h0M502.3 549.6h0M510.6 549.6h0M518.9 549.6h0M527.2 549.6h0M535.5 549.6h0M543.8 549.6h0M552.1 549.6h0M560.3 549.6h0M568.6 549.6h0M576.9 549.6h0M585.2 549.6h0M593.5 549.6h0M601.8 549.6h0M610.1 549.6h0M618.4 549.6h0M626.6 549.6h0M634.9 549.6h0M643.2 549.6h0M651.5 549.6h0M659.8 549.6h0M668.1 549.6h0M676.4 549.6h0M684.6 549.6h0M692.9 549.6h0M701.2 549.6h0M709.5 549.6h0M717.8 549.6h0M726.1 549.6h0M734.4 549.6h0M336.6 557.9h0M344.9 557.9h0M353.2 557.9h0M361.5 557.9h0M369.7 557.9h0M378 557.9h0M386.3 557.9h0M394.6 557.9h0M402.9 557.9h0M411.2 557.9h0M419.5 557.9h0M427.8 557.9h0M436 557.9h0M444.3 557.9h0M452.6 557.9h0M460.9 557.9h0M469.2 557.9h0M477.5 557.9h0M485.8 557.9h0M494 557.9h0M502.3 557.9h0M510.6 557.9h0M518.9 557.9h0M527.2 557.9h0M535.5 557.9h0M543.8 557.9h0M552.1 557.9h0M560.3 557.9h0M568.6 557.9h0M576.9 557.9h0M585.2 557.9h0M593.5 557.9h0M601.8 557.9h0M610.1 557.9h0M618.4 557.9h0M626.6 557.9h0M634.9 557.9h0M643.2 557.9h0M651.5 557.9h0M659.8 557.9h0M668.1 557.9h0M676.4 557.9h0M684.6 557.9h0M692.9 557.9h0M701.2 557.9h0M709.5 557.9h0M717.8 557.9h0M726.1 557.9h0M734.4 557.9h0M361.5 566.2h0M369.7 566.2h0M378 566.2h0M386.3 566.2h0M394.6 566.2h0M402.9 566.2h0M411.2 566.2h0M419.5 566.2h0M427.8 566.2h0M436 566.2h0M444.3 566.2h0M452.6 566.2h0M460.9 566.2h0M469.2 566.2h0M477.5 566.2h0M485.8 566.2h0M494 566.2h0M502.3 566.2h0M510.6 566.2h0M518.9 566.2h0M527.2 566.2h0M535.5 566.2h0M543.8 566.2h0M552.1 566.2h0M560.3 566.2h0M568.6 566.2h0M576.9 566.2h0M585.2 566.2h0M593.5 566.2h0M601.8 566.2h0M610.1 566.2h0M618.4 566.2h0M626.6 566.2h0M634.9 566.2h0M643.2 566.2h0M651.5 566.2h0M659.8 566.2h0M668.1 566.2h0M676.4 566.2h0M684.6 566.2h0M692.9 566.2h0M701.2 566.2h0M709.5 566.2h0M717.8 566.2h0M726.1 566.2h0M734.4 566.2h0M742.7 566.2h0M394.6 574.5h0M402.9 574.5h0M411.2 574.5h0M419.5 574.5h0M427.8 574.5h0M436 574.5h0M444.3 574.5h0M452.6 574.5h0M460.9 574.5h0M469.2 574.5h0M477.5 574.5h0M485.8 574.5h0M494 574.5h0M502.3 574.5h0M510.6 574.5h0M518.9 574.5h0M527.2 574.5h0M535.5 574.5h0M543.8 574.5h0M552.1 574.5h0M560.3 574.5h0M568.6 574.5h0M576.9 574.5h0M585.2 574.5h0M593.5 574.5h0M601.8 574.5h0M610.1 574.5h0M618.4 574.5h0M626.6 574.5h0M634.9 574.5h0M643.2 574.5h0M651.5 574.5h0M659.8 574.5h0M668.1 574.5h0M676.4 574.5h0M684.6 574.5h0M692.9 574.5h0M701.2 574.5h0M709.5 574.5h0M717.8 574.5h0M726.1 574.5h0M734.4 574.5h0M742.7 574.5h0M436 582.7h0M444.3 582.7h0M452.6 582.7h0M460.9 582.7h0M469.2 582.7h0M477.5 582.7h0M485.8 582.7h0M494 582.7h0M502.3 582.7h0M510.6 582.7h0M518.9 582.7h0M527.2 582.7h0M535.5 582.7h0M543.8 582.7h0M552.1 582.7h0M560.3 582.7h0M568.6 582.7h0M576.9 582.7h0M585.2 582.7h0M593.5 582.7h0M601.8 582.7h0M610.1 582.7h0M618.4 582.7h0M626.6 582.7h0M634.9 582.7h0M643.2 582.7h0M651.5 582.7h0M659.8 582.7h0M668.1 582.7h0M676.4 582.7h0M684.6 582.7h0M692.9 582.7h0M701.2 582.7h0M709.5 582.7h0M717.8 582.7h0M726.1 582.7h0M734.4 582.7h0M742.7 582.7h0M759.2 582.7h0M767.5 582.7h0M775.8 582.7h0M436 591h0M444.3 591h0M452.6 591h0M460.9 591h0M469.2 591h0M477.5 591h0M485.8 591h0M494 591h0M502.3 591h0M510.6 591h0M518.9 591h0M527.2 591h0M535.5 591h0M543.8 591h0M552.1 591h0M560.3 591h0M568.6 591h0M576.9 591h0M585.2 591h0M593.5 591h0M601.8 591h0M610.1 591h0M618.4 591h0M626.6 591h0M634.9 591h0M643.2 591h0M651.5 591h0M659.8 591h0M668.1 591h0M676.4 591h0M684.6 591h0M692.9 591h0M701.2 591h0M709.5 591h0M717.8 591h0M726.1 591h0M734.4 591h0M742.7 591h0M750.9 591h0M759.2 591h0M767.5 591h0M775.8 591h0M784.1 591h0M792.4 591h0M800.7 591h0M436 599.3h0M444.3 599.3h0M452.6 599.3h0M460.9 599.3h0M469.2 599.3h0M477.5 599.3h0M485.8 599.3h0M494 599.3h0M502.3 599.3h0M510.6 599.3h0M518.9 599.3h0M527.2 599.3h0M535.5 599.3h0M543.8 599.3h0M552.1 599.3h0M560.3 599.3h0M568.6 599.3h0M576.9 599.3h0M585.2 599.3h0M593.5 599.3h0M601.8 599.3h0M610.1 599.3h0M618.4 599.3h0M626.6 599.3h0M634.9 599.3h0M643.2 599.3h0M651.5 599.3h0M659.8 599.3h0M668.1 599.3h0M676.4 599.3h0M684.6 599.3h0M692.9 599.3h0M701.2 599.3h0M709.5 599.3h0M717.8 599.3h0M726.1 599.3h0M734.4 599.3h0M742.7 599.3h0M750.9 599.3h0M759.2 599.3h0M767.5 599.3h0M775.8 599.3h0M784.1 599.3h0M792.4 599.3h0M800.7 599.3h0M809 599.3h0M427.8 607.6h0M436 607.6h0M444.3 607.6h0M452.6 607.6h0M460.9 607.6h0M469.2 607.6h0M477.5 607.6h0M485.8 607.6h0M494 607.6h0M502.3 607.6h0M510.6 607.6h0M518.9 607.6h0M527.2 607.6h0M535.5 607.6h0M543.8 607.6h0M552.1 607.6h0M560.3 607.6h0M568.6 607.6h0M576.9 607.6h0M585.2 607.6h0M593.5 607.6h0M601.8 607.6h0M610.1 607.6h0M618.4 607.6h0M626.6 607.6h0M634.9 607.6h0M643.2 607.6h0M651.5 607.6h0M659.8 607.6h0M668.1 607.6h0M676.4 607.6h0M684.6 607.6h0M692.9 607.6h0M701.2 607.6h0M709.5 607.6h0M717.8 607.6h0M726.1 607.6h0M734.4 607.6h0M742.7 607.6h0M750.9 607.6h0M759.2 607.6h0M767.5 607.6h0M775.8 607.6h0M784.1 607.6h0M792.4 607.6h0M800.7 607.6h0M809 607.6h0M419.5 615.9h0M427.8 615.9h0M436 615.9h0M444.3 615.9h0M452.6 615.9h0M460.9 615.9h0M469.2 615.9h0M477.5 615.9h0M485.8 615.9h0M494 615.9h0M502.3 615.9h0M510.6 615.9h0M518.9 615.9h0M527.2 615.9h0M535.5 615.9h0M543.8 615.9h0M552.1 615.9h0M560.3 615.9h0M568.6 615.9h0M576.9 615.9h0M585.2 615.9h0M593.5 615.9h0M601.8 615.9h0M610.1 615.9h0M618.4 615.9h0M626.6 615.9h0M634.9 615.9h0M643.2 615.9h0M651.5 615.9h0M659.8 615.9h0M668.1 615.9h0M676.4 615.9h0M684.6 615.9h0M692.9 615.9h0M701.2 615.9h0M709.5 615.9h0M717.8 615.9h0M726.1 615.9h0M734.4 615.9h0M742.7 615.9h0M750.9 615.9h0M759.2 615.9h0M767.5 615.9h0M775.8 615.9h0M784.1 615.9h0M792.4 615.9h0M800.7 615.9h0M809 615.9h0M411.2 624.2h0M419.5 624.2h0M427.8 624.2h0M436 624.2h0M444.3 624.2h0M452.6 624.2h0M460.9 624.2h0M469.2 624.2h0M477.5 624.2h0M485.8 624.2h0M494 624.2h0M502.3 624.2h0M510.6 624.2h0M518.9 624.2h0M527.2 624.2h0M535.5 624.2h0M543.8 624.2h0M552.1 624.2h0M560.3 624.2h0M568.6 624.2h0M576.9 624.2h0M585.2 624.2h0M593.5 624.2h0M601.8 624.2h0M610.1 624.2h0M618.4 624.2h0M626.6 624.2h0M634.9 624.2h0M643.2 624.2h0M651.5 624.2h0M659.8 624.2h0M668.1 624.2h0M676.4 624.2h0M684.6 624.2h0M692.9 624.2h0M701.2 624.2h0M709.5 624.2h0M717.8 624.2h0M726.1 624.2h0M734.4 624.2h0M742.7 624.2h0M750.9 624.2h0M759.2 624.2h0M767.5 624.2h0M775.8 624.2h0M784.1 624.2h0M792.4 624.2h0M800.7 624.2h0M809 624.2h0" fill="none" stroke="#f6f446" stroke-width="4.65" stroke-linecap="round"/></g>
</g>
</svg>
<svg class="a" style="left:0;top:0" width="1200" height="649" viewBox="0 0 1200 649"><g transform="translate(10.20,33.20) scale(0.85)"><path d="M3 1.5H10L13 4.5V15H3Z" fill="#fff" stroke="#6b6b6b" stroke-width="0.9"/><path d="M10 1.5V4.5H13" fill="none" stroke="#6b6b6b" stroke-width="0.8"/></g>
<g transform="translate(30.20,33.20) scale(0.85)"><path d="M1 3.5H6L7.5 5H15V13.5H1Z" fill="#e5b72a"/><path d="M1 6.5H15V13.5H1Z" fill="#f6d155"/></g>
<g transform="translate(49.70,33.20) scale(0.85)"><rect x="1.5" y="1.5" width="13" height="13" rx="1.5" fill="#5a7fb4"/><rect x="4" y="2.5" width="8" height="5" fill="#d9dde3"/><rect x="4.5" y="10" width="7" height="4.5" fill="#fff"/><rect x="5.2" y="11" width="1.4" height="2" fill="#333"/></g>
<g transform="translate(70.20,33.20) scale(0.85)"><path d="M2 1.5H8L12 5V14H2Z" fill="#f6f0d6" stroke="#c9a42b" stroke-width="0.9"/><rect x="2" y="2" width="3" height="12" fill="#e8c447"/><rect x="9.5" y="9.5" width="6.5" height="6.5" rx="1.2" fill="#eedb62" stroke="#c5a535" stroke-width="0.6"/><path d="M12.75 11.0v3.5M11.0 12.75h3.5" stroke="#fff" stroke-width="1.1"/></g>
<g transform="translate(90.20,33.20) scale(0.85)"><path d="M2 2H11L14 5V14H2Z" fill="#f4f4f4" stroke="#777" stroke-width="0.9"/><path d="M6 6L12 12" stroke="#555" stroke-width="1.6"/><path d="M11 11L13.5 14" stroke="#e0b43a" stroke-width="2"/></g>
<g transform="translate(109.70,33.20) scale(0.85)"><circle cx="4.5" cy="4.5" r="2.8" fill="#d9532c"/><rect x="2" y="9" width="5.5" height="5.5" fill="#5ca35a"/><path d="M9.5 7L14 2.5" stroke="#4a76b0" stroke-width="1.4"/><text x="9" y="14.5" font-size="8" fill="#555" font-family="Liberation Sans">a</text></g>
<g transform="translate(135.70,33.20) scale(0.85)"><path d="M5.5 15.5C4 13 1.5 10.5 2 9C2.5 8 4 8.5 5 10V3.5C5 2.3 6.6 2.3 6.6 3.5V8M6.6 8V2.3C6.6 1.1 8.3 1.1 8.3 2.3V8M8.3 8V3C8.3 1.8 10 1.8 10 3V8.5M10 8.5V4.5C10 3.3 11.7 3.3 11.7 4.5V10.5C11.7 13 11 14.5 10.5 15.5Z" fill="#fff" stroke="#2a2a2a" stroke-width="0.75" stroke-linejoin="round"/></g>
<g transform="translate(157.20,33.20) scale(0.85)"><path d="M3 1.5L6 4.5L3 7.5L0 4.5Z M8 1.5L11 4.5L8 7.5L5 4.5Z M5.5 6L8.5 9L5.5 12L2.5 9Z M10.5 6L13.5 9L10.5 12L7.5 9Z M8 10.5L11 13.5L8 16.5L5 13.5Z" fill="#4f77ad"/><rect x="2" y="2.5" width="3" height="3" fill="#f1d632"/><rect x="6" y="7.5" width="3" height="3" fill="#f1d632"/></g>
<g transform="translate(177.20,33.20) scale(0.85)"><path d="M6.140000000000001 9.86L1.5 14.5" stroke="#3a3a3a" stroke-width="2.6" stroke-linecap="round"/><path d="M5.9 10.1L2 14" stroke="#e0c040" stroke-width="1.3" stroke-linecap="round"/><circle cx="9.5" cy="6.5" r="4.8" fill="#f4f4f4" stroke="#3a3a3a" stroke-width="1"/><path d="M9.5 3.8V9.2M6.8 6.5H12.2" stroke="#3a6fb0" stroke-width="1.6"/></g>
<g transform="translate(197.20,33.20) scale(0.85)"><path d="M6.140000000000001 9.86L1.5 14.5" stroke="#3a3a3a" stroke-width="2.6" stroke-linecap="round"/><path d="M5.9 10.1L2 14" stroke="#e0c040" stroke-width="1.3" stroke-linecap="round"/><circle cx="9.5" cy="6.5" r="4.8" fill="#f4f4f4" stroke="#3a3a3a" stroke-width="1"/><path d="M6.8 6.5H12.2" stroke="#3a6fb0" stroke-width="1.6"/></g>
<g transform="translate(217.70,33.20) scale(0.85)"><rect x="4" y="0.5" width="4" height="4" fill="#4f77ad"/><rect x="11" y="0.5" width="4.5" height="4" fill="#4f77ad"/><rect x="11" y="8" width="4.5" height="5" fill="#4f77ad"/><path d="M8 2.5H11M13 4.5V8" stroke="#4f77ad" stroke-width="0.8" stroke-dasharray="1 0.6"/><path d="M7 8L1.5 14.5" stroke="#333" stroke-width="2.4" stroke-linecap="round"/><path d="M6 9.5L2 14" stroke="#e0c040" stroke-width="1.2"/></g>
<g transform="translate(237.20,33.20) scale(0.85)"><rect x="1.5" y="2" width="4" height="8" fill="#e8d12a"/><path d="M6.5 9.5L1.5 14.5" stroke="#3a3a3a" stroke-width="2.6" stroke-linecap="round"/><path d="M6.25 9.75L2 14" stroke="#e0c040" stroke-width="1.3" stroke-linecap="round"/><circle cx="10" cy="6" r="5" fill="#f4f4f4" stroke="#3a3a3a" stroke-width="1"/></g>
<g transform="translate(257.20,33.20) scale(0.85)"><rect x="1.5" y="2" width="4" height="8" fill="#f0f0f0" stroke="#999" stroke-width="0.6"/><path d="M6.5 9.5L1.5 14.5" stroke="#3a3a3a" stroke-width="2.6" stroke-linecap="round"/><path d="M6.25 9.75L2 14" stroke="#e0c040" stroke-width="1.3" stroke-linecap="round"/><circle cx="10" cy="6" r="5" fill="#f4f4f4" stroke="#3a3a3a" stroke-width="1"/></g>
<g transform="translate(277.20,33.20) scale(0.85)"><path d="M6.36 9.64L1.5 14.5" stroke="#d0d1d2" stroke-width="2.4" stroke-linecap="round"/><circle cx="10" cy="6" r="5.2" fill="#f2f2f2" stroke="#d0d1d2" stroke-width="1.2"/><text x="7" y="8.5" font-size="5" fill="#d0d1d2" font-family="Liberation Sans">1:1</text></g>
<g transform="translate(297.70,33.20) scale(0.85)"><path d="M5.0 9.5L1.5 14.5" stroke="#3a3a3a" stroke-width="2.6" stroke-linecap="round"/><path d="M4.75 9.75L2 14" stroke="#e0c040" stroke-width="1.3" stroke-linecap="round"/><circle cx="8.5" cy="6" r="5" fill="#f4f4f4" stroke="#3a3a3a" stroke-width="1"/><rect x="9.5" y="9" width="6" height="6" rx="1" fill="#4f77ad"/><path d="M13.5 10.2L11.2 12L13.5 13.8" stroke="#fff" stroke-width="1" fill="none"/></g>
<g transform="translate(317.20,33.20) scale(0.85)"><path d="M5.0 9.5L1.5 14.5" stroke="#d0d1d2" stroke-width="2.4" stroke-linecap="round"/><circle cx="8.5" cy="6" r="5" fill="#f2f2f2" stroke="#d0d1d2" stroke-width="1.2"/><rect x="9.5" y="9" width="6" height="6" rx="1" fill="#f0f0f0" stroke="#d0d1d2" stroke-width="1"/></g>
<g transform="translate(338.20,33.20) scale(0.85)"><rect x="1.5" y="1.5" width="12" height="12" rx="1" fill="#e6e6e6" stroke="#8c8c8c" stroke-width="0.8"/><rect x="1.5" y="1.5" width="2.5" height="12" fill="#cfcfcf"/><rect x="9" y="9.5" width="6.5" height="6.5" rx="1.2" fill="#eedb62" stroke="#c5a535" stroke-width="0.6"/><path d="M12.25 11.0v3.5M10.5 12.75h3.5" stroke="#fff" stroke-width="1.1"/></g>
<g transform="translate(359.20,33.20) scale(0.85)"><path d="M3 0.5H8V12L5.5 10L3 12Z" fill="#4f77ad"/><rect x="3" y="0.5" width="2" height="11" fill="#3a5f91"/><rect x="8.5" y="9.5" width="6.5" height="6.5" rx="1.2" fill="#eedb62" stroke="#c5a535" stroke-width="0.6"/><path d="M11.75 11.0v3.5M10.0 12.75h3.5" stroke="#fff" stroke-width="1.1"/></g>
<g transform="translate(377.20,33.20) scale(0.85)"><rect x="1.5" y="1.5" width="12" height="12.5" rx="1" fill="#ececec" stroke="#8c8c8c" stroke-width="0.8"/><path d="M9 0.5H12V7L10.5 6L9 7Z" fill="#4f77ad"/></g>
<g transform="translate(397.20,33.20) scale(0.85)"><circle cx="8" cy="8" r="6.6" fill="#fafafa" stroke="#6d6d6d" stroke-width="1"/><path d="M8 3.5V8L11 10.5" fill="none" stroke="#555" stroke-width="0.9"/></g>
<g transform="translate(417.20,33.20) scale(0.85)"><path d="M2.5 7A5.5 5.5 0 0 1 12.5 4" fill="none" stroke="#3d7cc4" stroke-width="2.6"/><path d="M13.5 9A5.5 5.5 0 0 1 3.5 12" fill="none" stroke="#3d7cc4" stroke-width="2.6"/><path d="M10 1.5L15 2.5L13.5 6.5Z M6 14.5L1 13.5L2.5 9.5Z" fill="#3d7cc4"/></g>
<g transform="translate(444.20,33.20) scale(0.85)"><circle cx="6.5" cy="6.5" r="5.8" fill="#5a86bf"/><text x="5.2" y="10.3" font-size="8.5" font-weight="bold" font-style="italic" fill="#fff" font-family="Liberation Serif">i</text><path d="M9 9L9 16L11 14L13 16.5L14.5 15.5L12.5 13L15 12.5Z" fill="#fff" stroke="#444" stroke-width="0.7"/></g>
<g transform="translate(464.70,33.20) scale(0.85)"><rect x="1" y="2" width="14" height="12" fill="#dfe6ef" stroke="#7d95b5" stroke-width="0.9"/><rect x="1" y="2" width="14" height="3" fill="#8aa3c4"/><path d="M1 8H15M1 11H15M5.5 5V14" stroke="#8aa3c4" stroke-width="0.8"/></g>
<g transform="translate(484.70,33.20) scale(0.85)"><rect x="1" y="1.5" width="14" height="13" fill="#f4f4f4" stroke="#555" stroke-width="0.9"/><path d="M1 4H15M1 8H15M1 12H15" stroke="#999" stroke-width="0.6"/><circle cx="5" cy="4" r="1.1" fill="#d44"/><circle cx="10" cy="4" r="1.1" fill="#d44"/><circle cx="4" cy="8" r="1.1" fill="#5a5"/><circle cx="8" cy="8" r="1.1" fill="#5a5"/><circle cx="6" cy="12" r="1.1" fill="#48c"/><circle cx="11" cy="12" r="1.1" fill="#48c"/></g>
<g transform="translate(504.70,33.20) scale(0.85)"><path d="M8 1L9.3 3.1L11.7 2.4L11.9 4.9L14.3 5.5L13.3 7.8L15 9.6L12.9 11L13.4 13.4L10.9 13.3L9.9 15.6L8 14L6.1 15.6L5.1 13.3L2.6 13.4L3.1 11L1 9.6L2.7 7.8L1.7 5.5L4.1 4.9L4.3 2.4L6.7 3.1Z" fill="#6a95d6"/><circle cx="8" cy="8.5" r="2.3" fill="#dfe7f3"/></g>
<g transform="translate(524.70,33.20) scale(0.85)"><path d="M3 2H13V4.5H7L10.5 8.5L7 12.5H13V15H3V13L6.8 8.5L3 4Z" fill="#9b1fa5"/></g>
<g transform="translate(544.70,33.20) scale(0.85)"><rect x="1" y="3" width="14" height="1.8" fill="#3f5f86"/><rect x="1" y="7.5" width="14" height="6" rx="1" fill="#dcdcdc" stroke="#5f5f5f" stroke-width="0.9"/><path d="M3 7.5V10M5 7.5V9M7 7.5V10M9 7.5V9M11 7.5V10M13 7.5V9" stroke="#5f5f5f" stroke-width="0.7"/></g>
<g transform="translate(571.20,33.20) scale(0.85)"><path d="M1.5 3C1.5 1.5 3 1 4 1H13C14.5 1 15 2 15 3V7.5C15 9 14 9.5 13 9.5H7L4 12V9.5H3C2 9.5 1.5 9 1.5 7.5Z" fill="#f1e67a" stroke="#c9b948" stroke-width="0.7"/><circle cx="3.5" cy="12.5" r="2.3" fill="#6ea64a" stroke="#4d7d34" stroke-width="0.6"/></g>
<g transform="translate(591.20,33.20) scale(0.85)"><path d="M4.5 10.5L1.5 14.5" stroke="#d0d1d2" stroke-width="2.4" stroke-linecap="round"/><circle cx="8" cy="7" r="5" fill="#f2f2f2" stroke="#d0d1d2" stroke-width="1.2"/><circle cx="8" cy="7" r="2.2" fill="#d0d1d2"/></g>
<g transform="translate(618.20,33.20) scale(0.85)"><path d="M1 1.5H15V11H6L3 14V11H1Z" fill="#f7f7f7" stroke="#777" stroke-width="0.8"/><text x="4.5" y="9.5" font-size="9" font-weight="bold" fill="#333" font-family="Liberation Serif">T</text></g>
<path d="M563.0 39.0h4l-2 2z" fill="#444"/>
<path d="M609.5 39.0h4l-2 2z" fill="#444"/>
<path d="M637.0 39.0h4l-2 2z" fill="#444"/>
<g transform="translate(10.20,55.00) scale(0.85)"><rect x="0.5" y="4" width="8" height="9" fill="#e07b3a" transform="rotate(-15 4 8)"/><rect x="3" y="2.5" width="8" height="9" fill="#f2c644" transform="rotate(-8 7 7)"/><rect x="5" y="1" width="8.5" height="9" fill="#4f86c6"/><rect x="9.5" y="9.5" width="6.5" height="6.5" rx="1.5" fill="#52a84c" stroke="#3c8a38" stroke-width="0.5"/><path d="M12.75 10.8v3.9M10.8 12.75h3.9" stroke="#fff" stroke-width="1.3"/></g>
<g transform="translate(30.20,55.00) scale(0.85)"><path d="M1 6L8 3L15 6V13L8 15.5L1 13Z" fill="#e9c632"/><path d="M1 6L8 8.5L15 6" fill="none" stroke="#b8961c" stroke-width="0.8"/><circle cx="8" cy="4.8" r="3.6" fill="#3e73b4"/><rect x="9.5" y="9.5" width="6.5" height="6.5" rx="1.2" fill="#eedb62" stroke="#c5a535" stroke-width="0.6"/><path d="M12.75 11.0v3.5M11.0 12.75h3.5" stroke="#fff" stroke-width="1.1"/></g>
<g transform="translate(49.70,55.00) scale(0.85)"><path d="M1.5 2.5L5.5 13L10 3.5L14.5 2.5" fill="none" stroke="#333" stroke-width="1.1"/><circle cx="1.5" cy="2.5" r="1.1" fill="#fff" stroke="#333" stroke-width="0.7"/><circle cx="14.5" cy="2.5" r="1.1" fill="#fff" stroke="#333" stroke-width="0.7"/><circle cx="5.5" cy="13" r="1" fill="#fff" stroke="#333" stroke-width="0.7"/><rect x="9.5" y="9.5" width="6.5" height="6.5" rx="1.2" fill="#eedb62" stroke="#c5a535" stroke-width="0.6"/><path d="M12.75 11.0v3.5M11.0 12.75h3.5" stroke="#fff" stroke-width="1.1"/></g>
<g transform="translate(70.20,55.00) scale(0.85)"><path d="M1 15C3 11 6 6 13 1.5C14.5 4 12 9 5 12Z" fill="#5c85bb"/><path d="M1 15L9 7" stroke="#2d4f7a" stroke-width="0.8"/><rect x="9.5" y="9.5" width="6.5" height="6.5" rx="1.2" fill="#eedb62" stroke="#c5a535" stroke-width="0.6"/><path d="M12.75 11.0v3.5M11.0 12.75h3.5" stroke="#fff" stroke-width="1.1"/></g>
<g transform="translate(91.20,55.00) scale(0.85)"><rect x="1.5" y="4" width="12" height="7.5" rx="1" fill="#4a80c0"/><path d="M3.5 2V4M6 2V4M8.5 2V4M11 2V4M3.5 11.5V13.5M6 11.5V13.5" stroke="#4a80c0" stroke-width="0.9"/><rect x="9.5" y="9.5" width="6.5" height="6.5" rx="1.2" fill="#eedb62" stroke="#c5a535" stroke-width="0.6"/><path d="M12.75 11.0v3.5M11.0 12.75h3.5" stroke="#fff" stroke-width="1.1"/></g>
<g transform="translate(113.20,55.00) scale(0.85)"><rect x="1.5" y="1.5" width="13" height="13" rx="1" fill="#9cb3d3" stroke="#5e7fa9" stroke-width="0.8"/><path d="M4 3L8 12L11 3" fill="none" stroke="#fff" stroke-width="1"/><rect x="9.5" y="9.5" width="6.5" height="6.5" rx="1.2" fill="#eedb62" stroke="#c5a535" stroke-width="0.6"/><path d="M12.75 11.0v3.5M11.0 12.75h3.5" stroke="#fff" stroke-width="1.1"/></g>
<g transform="translate(143.20,55.00) scale(0.85)"><path d="M2 13L3 9L11 1L14 4L6 12Z" fill="#d0d1d2"/><path d="M5 15L6 12" stroke="#d0d1d2"/></g>
<g transform="translate(163.20,55.00) scale(0.85)"><path d="M2 14.5L3 10.5L11.5 2L14 4.5L5.5 13Z" fill="#e8d040" stroke="#8a7a2a" stroke-width="0.6"/><path d="M2 14.5L3 10.5L5.5 13Z" fill="#666"/></g>
<g transform="translate(183.20,55.00) scale(0.85)"><rect x="1.5" y="1.5" width="12" height="12" rx="1" fill="none" stroke="#d0d1d2" stroke-width="1.4"/><rect x="4" y="2" width="7" height="4" fill="#d0d1d2"/><rect x="4.5" y="9" width="6" height="4" fill="#d0d1d2"/></g>
<g transform="translate(203.20,55.00) scale(0.85)"><circle cx="3" cy="8" r="1.4" fill="#d0d1d2"/><circle cx="8" cy="2.5" r="1.4" fill="#d0d1d2"/><circle cx="12" cy="4" r="1.4" fill="#d0d1d2"/><rect x="9" y="9.5" width="6" height="6" rx="1" fill="#f0f0f0" stroke="#d0d1d2" stroke-width="1"/></g>
<g transform="translate(223.20,55.00) scale(0.85)"><path d="M2 15L6 3L12 4L14 13" fill="none" stroke="#d0d1d2" stroke-width="1.2"/><rect x="1" y="1" width="3" height="3" fill="#d0d1d2"/><path d="M7 9L13 15M13 9L7 15" stroke="#d0d1d2" stroke-width="1.5"/></g>
<g transform="translate(250.70,55.00) scale(0.85)"><rect x="1.5" y="1.5" width="13" height="13" fill="#e3e3e3" stroke="#d0d1d2"/><path d="M4 13L13 3" stroke="#aaa" stroke-width="1"/></g>
<g transform="translate(270.20,55.00) scale(0.85)"><rect x="2.5" y="3" width="11" height="12" fill="#eee" stroke="#d0d1d2" stroke-width="1.1"/><rect x="1" y="1.5" width="14" height="2" fill="#d0d1d2"/><path d="M5.5 5V13M8 5V13M10.5 5V13" stroke="#d9b0b0" stroke-width="0.8"/></g>
<g transform="translate(290.20,55.00) scale(0.85)"><circle cx="4" cy="12" r="2" fill="none" stroke="#d0d1d2" stroke-width="1.3"/><circle cx="12" cy="12" r="2" fill="none" stroke="#d0d1d2" stroke-width="1.3"/><path d="M5 10.5L12 2M11 10.5L4 2" stroke="#d0d1d2" stroke-width="1.2"/></g>
<g transform="translate(310.20,55.00) scale(0.85)"><rect x="2" y="4" width="8" height="11" fill="#f0f0f0" stroke="#d0d1d2"/><rect x="6" y="1" width="8" height="11" fill="#f0f0f0" stroke="#d0d1d2"/></g>
<g transform="translate(330.20,55.00) scale(0.85)"><rect x="2" y="2" width="11" height="13" fill="#eee" stroke="#d0d1d2" stroke-width="1.2"/><rect x="5" y="0.8" width="5" height="2.5" fill="#d0d1d2"/><rect x="6" y="8" width="5" height="6" fill="#f7f7f7" stroke="#d0d1d2" stroke-width="0.8"/></g>
<g transform="translate(350.20,55.00) scale(0.85)"><path d="M13.5 14A5 5 0 0 0 6 6L4 8" fill="none" stroke="#d0d1d2" stroke-width="2.4"/><path d="M1.5 2.5V9.5H8.5Z" fill="#d0d1d2"/></g>
<g transform="translate(370.20,55.00) scale(0.85)"><path d="M2.5 14A5 5 0 0 1 10 6L12 8" fill="none" stroke="#d0d1d2" stroke-width="2.4"/><path d="M14.5 2.5V9.5H7.5Z" fill="#d0d1d2"/></g>
<g transform="translate(397.20,55.00) scale(0.85)"><path d="M0.5 8L3.5 4H15.5V12H3.5Z" fill="#eed432" stroke="#b89c14" stroke-width="0.6"/><text x="4.3" y="10.5" font-size="6" font-weight="bold" fill="#333" font-family="Liberation Sans">abc</text></g>
<g transform="translate(417.70,55.00) scale(0.85)"><circle cx="6" cy="6" r="5.5" fill="#e9c53a"/><path d="M6 6L6 0.5A5.5 5.5 0 0 1 11.5 6Z" fill="#c0392b"/><path d="M6 6L0.5 6A5.5 5.5 0 0 1 6 0.5Z" fill="#5aa346"/><rect x="8" y="8" width="4" height="7.5" fill="#5aa346"/><rect x="11" y="11" width="4.5" height="4.5" fill="#7b1a1a"/><rect x="7" y="11.5" width="3" height="4" fill="#e9c53a"/></g>
<g transform="translate(440.70,55.00) scale(0.85)"><path d="M0.5 7L3.5 3H14.5V11H3.5Z" fill="#d6e3f3" stroke="#4a78b0" stroke-width="0.8"/><text x="4" y="9.5" font-size="6" font-weight="bold" fill="#333" font-family="Liberation Sans">ab</text><circle cx="12" cy="13" r="2.8" fill="#b8262a"/></g>
<g transform="translate(460.20,55.00) scale(0.85)"><path d="M0.5 8L3.5 4H15.5V12H3.5Z" fill="#fbe9e9" stroke="#d03a3a" stroke-width="0.9"/><text x="4.5" y="10.5" font-size="6" font-weight="bold" fill="#d03a3a" font-family="Liberation Sans">abc</text></g>
<g transform="translate(484.70,55.00) scale(0.85)"><path d="M0.5 6L3 3H14V9H3Z" fill="#d0d1d2"/><circle cx="11" cy="12.5" r="2.5" fill="#d0d1d2"/></g>
<g transform="translate(504.20,55.00) scale(0.85)"><path d="M0.5 6L3 3H15V9H3Z" fill="#d0d1d2"/><path d="M6 13C8 10.5 11 10.5 13 13C11 15 8 15 6 13Z" fill="none" stroke="#d0d1d2"/></g>
<g transform="translate(524.20,55.00) scale(0.85)"><path d="M0.5 6L3 3H15V9H3Z" fill="#d0d1d2"/><rect x="9.5" y="9.5" width="6" height="6" rx="1" fill="#f0f0f0" stroke="#d0d1d2" stroke-width="1"/></g>
<g transform="translate(544.20,55.00) scale(0.85)"><path d="M0.5 6L3 3H15V9H3Z" fill="#d0d1d2"/><rect x="9.5" y="9.5" width="6" height="6" rx="1" fill="#f0f0f0" stroke="#d0d1d2" stroke-width="1"/></g>
<g transform="translate(564.70,55.00) scale(0.85)"><path d="M0.5 6L3 3H15V9H3Z" fill="#d0d1d2"/><rect x="9.5" y="9.5" width="6" height="6" rx="1" fill="#f0f0f0" stroke="#d0d1d2" stroke-width="1"/></g>
<g transform="translate(598.70,55.00) scale(0.85)"><path d="M8 1C4 1 4.5 2.5 4.5 4V5.5H8.3V6.2H3C1.5 6.2 0.5 7.3 0.5 9.5C0.5 11.7 1.5 12.6 3 12.6H4.3V10.8C4.3 9.3 5.5 8.4 7 8.4H10.5C11.6 8.4 12 7.7 12 6.6V3.5C12 2 10.7 1 8 1Z" fill="#3a72b0"/><path d="M8.2 15C12 15 11.5 13.5 11.5 12V10.5H7.7V9.8H13C14.5 9.8 15.5 8.7 15.5 6.5C15.5 4.3 14.5 3.4 13 3.4H12V5.2C12 6.7 10.8 7.6 9.2 7.6H5.8C4.7 7.6 4.3 8.3 4.3 9.4V12.5C4.3 14 5.5 15 8.2 15Z" fill="#f1cf3b"/><path d="M11 13L13.5 14.5L11 16" fill="none" stroke="#444" stroke-width="0.8"/></g>
<g transform="translate(618.70,55.00) scale(0.85)"><path d="M4 4.5A5.5 5.5 0 1 1 3.5 12" fill="none" stroke="#3d86d8" stroke-width="2.6"/><path d="M0.5 3.5L6.5 2.5L5 8Z" fill="#3d86d8"/></g>
<g transform="translate(646.20,55.00) scale(0.85)"><path d="M1 14.5V10C4 6 7 5 9 6C11 7 14 10 15 13V14.5Z" fill="#29c23a" stroke="#156b1e" stroke-width="0.9"/><circle cx="12.5" cy="3" r="2.2" fill="#f5ee6a"/></g>
<g transform="translate(665.70,55.00) scale(0.85)"><ellipse cx="8" cy="9.5" rx="4.2" ry="5.2" fill="#151515"/><circle cx="8" cy="3.5" r="2.4" fill="#151515"/><path d="M2 5L5 7M14 5L11 7M1 10H4M12 10H15M2 15L5 12.5M14 15L11 12.5M8 6V14.5" stroke="#151515" stroke-width="1.2"/><path d="M8 6V15" stroke="#eee" stroke-width="0.4"/></g>
<g transform="translate(693.70,55.00) scale(0.85)"><rect x="1.5" y="1" width="13" height="14" fill="#d3d3d3" stroke="#bdbdbd" stroke-width="0.6"/><rect x="1.5" y="1" width="2.8" height="14" fill="#b9b9b9"/><text x="6" y="11" font-size="8" fill="#eee" font-family="Liberation Sans">?</text></g>
<g transform="translate(720.70,55.00) scale(0.85)"><path d="M3 3L12 2.5L13 8L7 13L2.5 10Z" fill="#3f7ac0" stroke="#2d5a90" stroke-width="0.6"/><circle cx="3" cy="3" r="1.6" fill="#fff" stroke="#b49a2a" stroke-width="0.9"/><circle cx="13" cy="2.5" r="1.6" fill="#fff" stroke="#b49a2a" stroke-width="0.9"/><circle cx="2.5" cy="13.5" r="1.6" fill="#fff" stroke="#b49a2a" stroke-width="0.9"/><path d="M8 11L10 14L15 7" fill="none" stroke="#e8cc30" stroke-width="1.6"/></g>
<path d="M241.0 60.8h4l-2 2z" fill="#888"/>
<path d="M637.0 60.8h4l-2 2z" fill="#444"/>
<g transform="translate(9.64,76.44) scale(0.92)"><path d="M2 14V7A5 5 0 0 1 7 2H14" fill="none" stroke="#d0d1d2" stroke-width="1" stroke-dasharray="1.5 1"/><circle cx="2" cy="14" r="1.2" fill="#d0d1d2"/><circle cx="14" cy="2" r="1.2" fill="#d0d1d2"/></g>
<g transform="translate(29.14,76.44) scale(0.92)"><path d="M1.5 1V15H15.5Z" fill="#d0d1d2"/><path d="M4.5 8V12.5H9Z" fill="#eee"/></g>
<g transform="translate(48.64,76.44) scale(0.92)"><circle cx="3" cy="8" r="1.4" fill="#d0d1d2"/><circle cx="8" cy="2.5" r="1.4" fill="#d0d1d2"/><circle cx="12" cy="4" r="1.4" fill="#d0d1d2"/><rect x="9" y="9.5" width="6" height="6" rx="1" fill="#f0f0f0" stroke="#d0d1d2" stroke-width="1"/></g>
<g transform="translate(77.14,76.44) scale(0.92)"><path d="M2 5C2 1 9 1 11 3C14 2 15 6 13 8C11 10 7 9 6 12C4 15 2 12 3 9Z" fill="#d0d1d2"/><rect x="9" y="9" width="6.5" height="6.5" rx="1" fill="#f0f0f0" stroke="#d0d1d2" stroke-width="1"/></g>
<g transform="translate(97.14,76.44) scale(0.92)"><circle cx="6" cy="6.5" r="5" fill="#d0d1d2"/><circle cx="9" cy="9.5" r="5" fill="#d0d1d2" stroke="#e6e6e6" stroke-width="0.6"/><rect x="9.5" y="9.5" width="6" height="6" rx="1" fill="#f0f0f0" stroke="#d0d1d2" stroke-width="1"/></g>
<g transform="translate(117.14,76.44) scale(0.92)"><path d="M1.5 5C1.5 2 6 1.5 8 3C10 1.5 14.5 2 14.5 5C14.5 8 10 8 8 7C6 9 1.5 8 1.5 5Z" fill="#d0d1d2"/><circle cx="5" cy="5" r="1.6" fill="#eee"/><rect x="9.5" y="9.5" width="6" height="6" rx="1" fill="#f0f0f0" stroke="#d0d1d2" stroke-width="1"/></g>
<g transform="translate(137.64,76.44) scale(0.92)"><path d="M1.5 5C1.5 2 6 1.5 8 3C10 1.5 14.5 2 14.5 5C14.5 8 10 8 8 7C6 9 1.5 8 1.5 5Z" fill="#d0d1d2"/><circle cx="5" cy="5" r="1.6" fill="#eee"/><rect x="9.5" y="9.5" width="6" height="6" rx="1" fill="#f0f0f0" stroke="#d0d1d2" stroke-width="1"/></g>
<g transform="translate(156.64,76.44) scale(0.92)"><path d="M2 5C2 1 9 1 11 3C14 2 15 6 13 8C11 10 7 9 6 12C4 15 2 12 3 9Z" fill="#d0d1d2"/><rect x="9" y="9" width="6.5" height="6.5" rx="1" fill="#f0f0f0" stroke="#d0d1d2" stroke-width="1"/></g>
<g transform="translate(176.64,76.44) scale(0.92)"><circle cx="6" cy="6.5" r="5" fill="#d0d1d2"/><circle cx="9" cy="9.5" r="5" fill="#d0d1d2" stroke="#e6e6e6" stroke-width="0.6"/><rect x="9.5" y="9.5" width="6" height="6" rx="1" fill="#f0f0f0" stroke="#d0d1d2" stroke-width="1"/></g>
<g transform="translate(196.64,76.44) scale(0.92)"><path d="M1.5 5C1.5 2 6 1.5 8 3C10 1.5 14.5 2 14.5 5C14.5 8 10 8 8 7C6 9 1.5 8 1.5 5Z" fill="#d0d1d2"/><circle cx="5" cy="5" r="1.6" fill="#eee"/><rect x="9.5" y="9.5" width="6" height="6" rx="1" fill="#f0f0f0" stroke="#d0d1d2" stroke-width="1"/></g>
<g transform="translate(216.64,76.44) scale(0.92)"><path d="M1.5 4C1.5 1.5 13 1 14.5 4C15.5 7 11 8 9 9C7 11 8 15 5 15C2 15 1.5 9 1.5 4Z" fill="#d0d1d2"/></g>
<g transform="translate(236.64,76.44) scale(0.92)"><path d="M3 14C0 12 4 5 9 2C12 0.5 16 3 14 7C12 10 7 15 3 14Z" fill="#d0d1d2"/></g>
<g transform="translate(256.64,76.44) scale(0.92)"><path d="M1.5 2.5L5.5 13L10 3.5L14.5 2.5" fill="none" stroke="#d0d1d2" stroke-width="1.1"/><rect x="9.5" y="9.5" width="6" height="6" rx="1" fill="#f0f0f0" stroke="#d0d1d2" stroke-width="1"/></g>
<g transform="translate(276.64,76.44) scale(0.92)"><path d="M8 0.5V16M1 8H15" stroke="#d0d1d2" stroke-width="1.1"/><rect x="10" y="2" width="4" height="4" fill="none" stroke="#d0d1d2"/><circle cx="4" cy="12" r="2" fill="none" stroke="#d0d1d2"/></g>
<g transform="translate(296.64,76.44) scale(0.92)"><circle cx="4.5" cy="5" r="3.6" fill="#d0d1d2"/><circle cx="11.5" cy="5" r="3.6" fill="#d0d1d2"/><path d="M5 9L10 15M11 9L6 15" stroke="#d0d1d2" stroke-width="1.8"/></g>
<g transform="translate(316.64,76.44) scale(0.92)"><circle cx="4.5" cy="5" r="3.6" fill="#d0d1d2"/><circle cx="11.5" cy="5" r="3.6" fill="#d0d1d2"/><path d="M5 9L9 15" stroke="#d0d1d2" stroke-width="1.4"/></g>
<g transform="translate(336.64,76.44) scale(0.92)"><path d="M3 2H13M1 5H15M3 8H13M1 11H15M3 14H13" stroke="#d0d1d2" stroke-width="0.9"/><path d="M8 1V15" stroke="#d0d1d2" stroke-width="1.3"/></g>
<g transform="translate(356.64,76.44) scale(0.92)"><path d="M12 13A5.5 5.5 0 1 1 7 2.5" fill="none" stroke="#d0d1d2" stroke-width="1.1"/><path d="M7 1V8L14 5Z" fill="#eee" stroke="#d0d1d2"/></g>
<g transform="translate(410.64,76.44) scale(0.92)"><path d="M2 15V8A6 6 0 0 1 10 2.5" fill="none" stroke="#d0d1d2" stroke-width="1"/><rect x="7.5" y="9" width="7" height="7" rx="1" fill="#f0f0f0" stroke="#d0d1d2" stroke-width="1"/></g>
<g transform="translate(437.64,76.44) scale(0.92)"><circle cx="6.5" cy="6.5" r="5.5" fill="none" stroke="#d0d1d2" stroke-width="1.1"/><rect x="8.5" y="9" width="7" height="7" rx="1" fill="#f0f0f0" stroke="#d0d1d2" stroke-width="1"/></g>
<g transform="translate(464.14,76.44) scale(0.92)"><path d="M1 7C1 3 6 1 9 3C12 2 14 6 11 8C8 10 1 11 1 7Z" fill="none" stroke="#d0d1d2" stroke-width="1.1"/><rect x="8.5" y="9" width="7" height="7" rx="1" fill="#f0f0f0" stroke="#d0d1d2" stroke-width="1"/></g>
<g transform="translate(491.64,76.44) scale(0.92)"><rect x="1" y="2" width="12" height="9" fill="none" stroke="#d0d1d2" stroke-width="1.1"/><circle cx="7" cy="6.5" r="1" fill="#d0d1d2"/><rect x="8.5" y="9" width="7" height="7" rx="1" fill="#f0f0f0" stroke="#d0d1d2" stroke-width="1"/></g>
<g transform="translate(518.64,76.44) scale(0.92)"><path d="M1 7L5 2H11L14 6L10 11H4Z" fill="none" stroke="#d0d1d2" stroke-width="1.1"/><rect x="8.5" y="9" width="7" height="7" rx="1" fill="#f0f0f0" stroke="#d0d1d2" stroke-width="1"/></g>
<g transform="translate(552.64,76.44) scale(0.92)"><path d="M3 3L6 5.5L4.5 8C3.5 10 5 12 7 12C9 12 10 10.5 10.5 9L12.5 5.5L15 7.5L12.5 11C10.5 14.5 6.5 15.5 3.5 13.5C0.5 11.5 0.5 7.5 1.5 5.5Z" fill="#d11a1a"/><path d="M3 3L6 5.5L4.8 7.5L1.9 5.2ZM12.5 5.5L15 7.5L14 9L11.5 7Z" fill="#eee"/></g>
<g transform="translate(573.64,76.44) scale(0.92)"><path d="M1.5 2L5.5 13L9.5 3.5L14.5 2.5" fill="none" stroke="#d0d1d2" stroke-width="1.3"/><path d="M8 8H15M8 11H15" stroke="#d0d1d2"/></g>
<g transform="translate(732.64,76.44) scale(0.92)"><path d="M8 9L2 2M8 9L15 7M8 9V16" stroke="#8a9a8a" stroke-width="1.2"/><path d="M8 9V16" stroke="#6ab06a" stroke-width="1"/></g>
<g transform="translate(752.64,76.44) scale(0.92)"><path d="M9 2C12 1 15 2.5 14.5 6C14 9 11 9 10 8Z" fill="#b8b0b0" stroke="#777" stroke-width="0.6"/><path d="M2 4C2 1 7 0.5 8.5 3C9.5 5 9 7.5 10 10C11 13 8 16 5 14.5C3 13.5 4 10 3 8C2.3 6.8 2 6 2 4Z" fill="#7cc070" stroke="#3b6b35" stroke-width="1"/></g>
<g transform="translate(772.64,76.44) scale(0.92)"><path d="M2 2L14 15M14 2L2 15" stroke="#d0d1d2" stroke-width="1.2"/></g>
<g transform="translate(792.64,76.44) scale(0.92)"><path d="M2 2L14 15M14 2L2 15" stroke="#d0d1d2" stroke-width="1.2"/><path d="M5 8L8 6L11 8L8 10Z" fill="#d0d1d2"/></g>
<g transform="translate(818.64,76.44) scale(0.92)"><path d="M2 15L5 4L11 12L14 2" fill="none" stroke="#d0d1d2" stroke-width="2.2"/></g>
<g transform="translate(846.64,76.44) scale(0.92)"><rect x="1" y="1" width="13.5" height="13" fill="#f0f0e8" stroke="#777" stroke-width="0.8" stroke-dasharray="1.2 0.8"/><rect x="1.5" y="1.5" width="8.5" height="9" fill="#f1d92a" stroke="#8a7a1a" stroke-width="0.6"/><path d="M7 6V15L9 13L11 16L12.5 15L10.5 12.5L13.5 12Z" fill="#fff" stroke="#333" stroke-width="0.7"/></g>
<g transform="translate(873.64,76.44) scale(0.92)"><rect x="5" y="6" width="10" height="9" fill="#f1d92a" stroke="#9a8a20" stroke-width="0.6"/><rect x="1" y="1.5" width="10" height="8" fill="#c8c8c8" stroke="#888" stroke-width="0.7"/><path d="M1.5 5.5H10.5" stroke="#fff" stroke-width="1.5"/></g>
<g transform="translate(900.64,76.44) scale(0.92)"><rect x="1" y="1" width="8" height="8" fill="#f1d92a" stroke="#9a8a20" stroke-width="0.6"/><rect x="4" y="4" width="8" height="8" fill="#f1d92a" stroke="#9a8a20" stroke-width="0.6"/><circle cx="11.5" cy="12" r="3.6" fill="#e02525"/><path d="M9.5 14L13.5 10" stroke="#fff" stroke-width="1"/></g>
<g transform="translate(927.64,76.44) scale(0.92)"><rect x="1" y="1" width="10" height="10" fill="#f1d92a" stroke="#9a8a20" stroke-width="0.6"/><path d="M12 16L10.3 12.5A2 2 0 1 1 13.7 12.5Z" fill="#5b7ea8"/><circle cx="12" cy="11.3" r="0.8" fill="#fff"/></g>
<path d="M68.0 82.8h4l-2 2z" fill="#aaa"/>
<path d="M395.0 82.8h4l-2 2z" fill="#aaa"/>
<path d="M429.0 82.8h4l-2 2z" fill="#aaa"/>
<path d="M456.0 82.8h4l-2 2z" fill="#aaa"/>
<path d="M483.0 82.8h4l-2 2z" fill="#aaa"/>
<path d="M510.0 82.8h4l-2 2z" fill="#aaa"/>
<path d="M537.0 82.8h4l-2 2z" fill="#aaa"/>
<path d="M811.0 82.8h4l-2 2z" fill="#aaa"/>
<path d="M865.0 82.8h4l-2 2z" fill="#444"/>
<path d="M892.0 82.8h4l-2 2z" fill="#444"/>
<path d="M919.0 82.8h4l-2 2z" fill="#444"/>
<path d="M721.0 82.8h4l-2 2z" fill="#aaa"/>
<path d="M659 81.5L660.8 79.8L662.6 81.5M659 86L660.8 87.7L662.6 86" fill="none" stroke="#aaa" stroke-width="0.8"/>
<path d="M129.5 32V48" stroke="#d9dadb" stroke-width="1" stroke-dasharray="1 1"/>
<path d="M437.5 32V48" stroke="#d9dadb" stroke-width="1" stroke-dasharray="1 1"/>
<path d="M136.5 54V70" stroke="#d9dadb" stroke-width="1" stroke-dasharray="1 1"/>
<path d="M391.5 54V70" stroke="#d9dadb" stroke-width="1" stroke-dasharray="1 1"/>
<path d="M436.5 54V70" stroke="#d9dadb" stroke-width="1" stroke-dasharray="1 1"/>
<path d="M479.5 54V70" stroke="#d9dadb" stroke-width="1" stroke-dasharray="1 1"/>
<path d="M584.5 54V70" stroke="#d9dadb" stroke-width="1" stroke-dasharray="1 1"/>
<path d="M592.5 54V70" stroke="#d9dadb" stroke-width="1" stroke-dasharray="1 1"/>
<path d="M686.5 54V70" stroke="#d9dadb" stroke-width="1" stroke-dasharray="1 1"/>
<path d="M713.5 54V70" stroke="#d9dadb" stroke-width="1" stroke-dasharray="1 1"/>
<path d="M404.5 76V92" stroke="#d9dadb" stroke-width="1" stroke-dasharray="1 1"/>
<path d="M546.5 76V92" stroke="#d9dadb" stroke-width="1" stroke-dasharray="1 1"/>
<path d="M839.5 76V92" stroke="#d9dadb" stroke-width="1" stroke-dasharray="1 1"/>
<path d="M3.5 32V48M5.5 32V48" stroke="#e3e4e5" stroke-width="1" stroke-dasharray="1 1"/>
<path d="M3.5 54V70M5.5 54V70" stroke="#e3e4e5" stroke-width="1" stroke-dasharray="1 1"/>
<path d="M3.5 76V92M5.5 76V92" stroke="#e3e4e5" stroke-width="1" stroke-dasharray="1 1"/>
<g transform="translate(4.50,100.50) scale(1.0)"><path d="M1.5 3L5.5 13L10 3.5L14.5 3" fill="none" stroke="#333" stroke-width="1"/><circle cx="1.5" cy="3" r="1" fill="#fff" stroke="#333" stroke-width="0.6"/><circle cx="14.5" cy="3" r="1" fill="#fff" stroke="#333" stroke-width="0.6"/><circle cx="10" cy="3.5" r="1" fill="#fff" stroke="#333" stroke-width="0.6"/><rect x="9.5" y="9.5" width="6.5" height="6.5" rx="1.5" fill="#52a84c" stroke="#3c8a38" stroke-width="0.5"/><path d="M12.75 10.8v3.9M10.8 12.75h3.9" stroke="#fff" stroke-width="1.3"/></g>
<g transform="translate(4.50,120.50) scale(1.0)"><rect x="1" y="1" width="12" height="12" fill="#9fb6d6"/><rect x="1" y="1" width="4" height="4" fill="#1f3b66"/><rect x="9" y="1" width="4" height="4" fill="#1f3b66"/><rect x="5" y="5" width="4" height="4" fill="#1f3b66"/><rect x="1" y="9" width="4" height="4" fill="#1f3b66"/><rect x="9.5" y="9.5" width="6.5" height="6.5" rx="1.5" fill="#52a84c" stroke="#3c8a38" stroke-width="0.5"/><path d="M12.75 10.8v3.9M10.8 12.75h3.9" stroke="#fff" stroke-width="1.3"/></g>
<g transform="translate(4.50,140.00) scale(1.0)"><rect x="1" y="1" width="13" height="13" fill="#5e86bb" stroke="#2f5285" stroke-width="0.8"/><path d="M1 7.5H14M7.5 1V14M1 1L7.5 7.5M7.5 7.5L14 1" stroke="#dfe8f4" stroke-width="0.7"/><rect x="9.5" y="9.5" width="6.5" height="6.5" rx="1.5" fill="#52a84c" stroke="#3c8a38" stroke-width="0.5"/><path d="M12.75 10.8v3.9M10.8 12.75h3.9" stroke="#fff" stroke-width="1.3"/></g>
<g transform="translate(4.50,159.50) scale(1.0)"><path d="M5 2.5C7.5 0.5 11 2 10 5.5C9 8.5 5 11 3 12.5L2.5 11.5C4.5 10 7.5 7.5 7.5 5.5C7.5 4 6 4 5.5 4.5Z" fill="#3e6aa6"/><rect x="9.5" y="9.5" width="6.5" height="6.5" rx="1.5" fill="#52a84c" stroke="#3c8a38" stroke-width="0.5"/><path d="M12.75 10.8v3.9M10.8 12.75h3.9" stroke="#fff" stroke-width="1.3"/></g>
<g transform="translate(4.50,179.00) scale(1.0)"><path d="M1 15C3 11 6 6 13 1.5C14.5 4 12 9 5 12Z" fill="#5c85bb"/><path d="M1 15L9 7" stroke="#2d4f7a" stroke-width="0.8"/><rect x="9.5" y="9.5" width="6.5" height="6.5" rx="1.5" fill="#52a84c" stroke="#3c8a38" stroke-width="0.5"/><path d="M12.75 10.8v3.9M10.8 12.75h3.9" stroke="#fff" stroke-width="1.3"/></g>
<g transform="translate(4.50,198.50) scale(1.0)"><rect x="1.5" y="1.5" width="13" height="13" rx="1" fill="#9cb3d3" stroke="#5e7fa9" stroke-width="0.8"/><path d="M4 3L8 12L11 3" fill="none" stroke="#fff" stroke-width="1"/><rect x="9.5" y="9.5" width="6.5" height="6.5" rx="1.5" fill="#52a84c" stroke="#3c8a38" stroke-width="0.5"/><path d="M12.75 10.8v3.9M10.8 12.75h3.9" stroke="#fff" stroke-width="1.3"/></g>
<g transform="translate(4.50,218.00) scale(1.0)"><path d="M2 3C2 1 6 0.5 9 1C13 1.5 15 3 14.5 6C14 9 12 9 11 10V13H8.5V10C6 10 5 11 4.5 9C3 8 2 6 2 3Z" fill="#3d5f8f"/><path d="M6 3V7M9 3V6" stroke="#cfdbee" stroke-width="0.8"/><rect x="9.5" y="9.5" width="6.5" height="6.5" rx="1.5" fill="#52a84c" stroke="#3c8a38" stroke-width="0.5"/><path d="M12.75 10.8v3.9M10.8 12.75h3.9" stroke="#fff" stroke-width="1.3"/></g>
<g transform="translate(4.50,237.50) scale(1.0)"><circle cx="7.5" cy="7.5" r="6.5" fill="#b8cae2" stroke="#3d5f8f" stroke-width="1"/><path d="M3 4C5 5 6 3 7 5C8 7 5 8 6 10C7 12 4 12 3 10Z M9 2C11 3 10 5 12 6C13 7 12 10 10 11" fill="#3d5f8f"/><rect x="9.5" y="9.5" width="6.5" height="6.5" rx="1.5" fill="#52a84c" stroke="#3c8a38" stroke-width="0.5"/><path d="M12.75 10.8v3.9M10.8 12.75h3.9" stroke="#fff" stroke-width="1.3"/></g>
<g transform="translate(4.50,257.00) scale(1.0)"><circle cx="7.5" cy="7.5" r="6.5" fill="#2f5384"/><path d="M1 7.5H14M7.5 1V14M2 4.5H13M2 10.5H13" stroke="#d8e2f0" stroke-width="0.8"/><ellipse cx="7.5" cy="7.5" rx="3" ry="6.5" fill="none" stroke="#d8e2f0" stroke-width="0.8"/><rect x="9.5" y="9.5" width="6.5" height="6.5" rx="1.5" fill="#52a84c" stroke="#3c8a38" stroke-width="0.5"/><path d="M12.75 10.8v3.9M10.8 12.75h3.9" stroke="#fff" stroke-width="1.3"/></g>
<g transform="translate(4.50,276.50) scale(1.0)"><circle cx="7.5" cy="7.5" r="6.5" fill="#c6d4e8" stroke="#3d5f8f" stroke-width="1"/><path d="M3 4L6 12L9 4L12 3.5" fill="none" stroke="#2a3a55" stroke-width="1"/><rect x="9.5" y="9.5" width="6.5" height="6.5" rx="1.5" fill="#52a84c" stroke="#3c8a38" stroke-width="0.5"/><path d="M12.75 10.8v3.9M10.8 12.75h3.9" stroke="#fff" stroke-width="1.3"/></g>
<g transform="translate(4.50,296.00) scale(1.0)"><rect x="1.5" y="4" width="12" height="7.5" rx="1" fill="#4a80c0"/><path d="M3.5 2V4M6 2V4M8.5 2V4M11 2V4M3.5 11.5V13.5M6 11.5V13.5" stroke="#4a80c0" stroke-width="0.9"/><rect x="9.5" y="9.5" width="6.5" height="6.5" rx="1.2" fill="#eedb62" stroke="#c5a535" stroke-width="0.6"/><path d="M12.75 11.0v3.5M11.0 12.75h3.5" stroke="#fff" stroke-width="1.1"/></g>
<path d="M23.5 226.0h4l-2 2z" fill="#555"/>
<path d="M23.5 245.5h4l-2 2z" fill="#555"/>
<path d="M23.5 284.5h4l-2 2z" fill="#555"/>
<path d="M23.5 304.0h4l-2 2z" fill="#555"/>
<path d="M36.5 113.5L40 117.5L35 119L33.5 117Z" fill="#d9453a"/><path d="M36 113L40.5 117.5L43.5 112.5L41 110Z" fill="#f0b93a"/><path d="M41.5 111L44.5 108" stroke="#6b6b6b" stroke-width="1.3"/>
<g transform="translate(48.50,109.20) scale(0.65)"><path d="M3 1H10L13 4V15H3Z" fill="#e9e9e9" stroke="#d0d1d2" stroke-width="0.8"/><path d="M5 6H11M5 8.5H11M5 11H11" stroke="#d0d1d2" stroke-width="0.8"/></g>
<ellipse cx="68.8" cy="114.4" rx="4.5" ry="3" fill="#cdd6e2"/><circle cx="68.8" cy="114.4" r="1.8" fill="#3d5f8f"/>
<path d="M79 109.5H89L85 115V119.5H83V115Z" fill="#5b7fb1"/><rect x="79" y="109.5" width="10" height="2" fill="#a8c66a"/>
<text x="95" y="117" font-size="9" fill="#444" font-family="Liberation Serif" font-style="italic">ε</text><rect x="100" y="114" width="3" height="4" fill="none" stroke="#777" stroke-width="0.7"/><path d="M107.7 114.0h4l-2 2z" fill="#555"/>
<rect x="116.5" y="110" width="4" height="9" fill="#e8d36a" stroke="#999" stroke-width="0.5"/><path d="M122 109V117M119.5 114.5L122 118.5L124.5 114.5" stroke="#3d6faa" stroke-width="2" fill="none"/>
<rect x="131" y="110" width="4" height="9" fill="#e8d36a" stroke="#999" stroke-width="0.5"/><path d="M137 119V111M134.5 113.5L137 109.5L139.5 113.5" stroke="#3d6faa" stroke-width="2" fill="none"/>
<rect x="146" y="110" width="8" height="8" fill="#fafafa" stroke="#7a7a7a" stroke-width="0.8"/><circle cx="154" cy="118.2" r="2.1" fill="#e04545"/>
<rect x="212.0" y="96.7" width="6.6" height="6.6" rx="1.5" fill="#b9babb" stroke="#a5a6a7" stroke-width="0.6"/>
<rect x="220.5" y="96.7" width="6.6" height="6.6" rx="1.5" fill="#b9babb" stroke="#a5a6a7" stroke-width="0.6"/>
<rect x="1184.4" y="96.7" width="6.6" height="6.6" rx="1.5" fill="#b9babb" stroke="#a5a6a7" stroke-width="0.6"/>
<rect x="1192.3" y="96.7" width="6.6" height="6.6" rx="1.5" fill="#b9babb" stroke="#a5a6a7" stroke-width="0.6"/>
<path d="M222 98.5L225.6 102M225.6 98.5L222 102" stroke="#333" stroke-width="0.9"/><path d="M1193.8 98.5L1197.4 102M1197.4 98.5L1193.8 102" stroke="#333" stroke-width="0.9"/>
<path d="M213.5 98.3h3.6v3.4h-3.6z" fill="none" stroke="#eee" stroke-width="0.7"/>
<path d="M1185.9 98.3h3.6v3.4h-3.6z" fill="none" stroke="#eee" stroke-width="0.7"/>
<rect x="44.6" y="126.7" width="7.5" height="7" fill="#fff" stroke="#c8c8c8" stroke-width="0.5"/><path d="M45.8 130.2L47.6 132.6L50.8 127.8" fill="none" stroke="#111" stroke-width="1.2"/>
<circle cx="60.8" cy="130" r="1.4" fill="#9acd32"/>
<rect x="44.6" y="139.2" width="7.5" height="7.5" fill="#fcfcfc" stroke="#c9cacb" stroke-width="0.8"/><rect x="56.3" y="138.4" width="9.4" height="8.6" fill="#79b064" stroke="#5d8a4c" stroke-width="0.5"/>
<rect x="44.6" y="151.2" width="7.5" height="7.5" fill="#fcfcfc" stroke="#c9cacb" stroke-width="0.8"/><path d="M45.8 154.7L47.6 157.1L50.8 152.3" fill="none" stroke="#111" stroke-width="1.2"/><path d="M35 153.5L37 155L35 156.5Z" fill="#555"/>
<rect x="57" y="150.5" width="8" height="8.5" fill="#e8edf4" stroke="#4f6f9a" stroke-width="0.8"/><path d="M57 155H65M61 150.5V159M61.5 154.5L64.5 151.5" stroke="#4f6f9a" stroke-width="0.7"/>
<rect x="213" y="124.8" width="10" height="10" rx="1.5" fill="#f4fbfe"/>
<path d="M215.2 128H220.8L222 130L220.8 132H215.2L214 130Z" fill="#fafafa" stroke="#8a8a8a" stroke-width="0.9"/>
<path d="M215.2 140.5H220.8L222 142.5L220.8 144.5H215.2L214 142.5Z" fill="#fafafa" stroke="#8a8a8a" stroke-width="0.9"/>
<circle cx="205.5" cy="155" r="3.4" fill="none" stroke="#888" stroke-width="0.75"/><path d="M205.5 153V155.2H207" fill="none" stroke="#888" stroke-width="0.6"/><text x="215" y="158.5" font-size="8.5" font-weight="bold" fill="#3a3a3a" font-family="Liberation Sans">?</text>
<g transform="translate(988.22,108.62) scale(0.66)"><circle cx="5" cy="5" r="3.6" fill="#d42a2a"/><path d="M5 0.5V9.5M0.5 5H9.5M2 2L8 8M8 2L2 8" stroke="#d42a2a" stroke-width="1.3"/><circle cx="11" cy="9" r="2.8" fill="none" stroke="#666" stroke-width="1.3"/><circle cx="5.5" cy="13" r="2" fill="#7b9fd4"/><path d="M12 14H15L13.5 15.5Z" fill="#444"/></g>
<g transform="translate(1003.72,108.62) scale(0.66)"><path d="M8 1C4 1 4.5 2.5 4.5 4V5.5H8.3V6.2H3C1.5 6.2 0.5 7.3 0.5 9.5C0.5 11.7 1.5 12.6 3 12.6H4.3V10.8C4.3 9.3 5.5 8.4 7 8.4H10.5C11.6 8.4 12 7.7 12 6.6V3.5C12 2 10.7 1 8 1Z" fill="#3a72b0"/><path d="M8.2 15C12 15 11.5 13.5 11.5 12V10.5H7.7V9.8H13C14.5 9.8 15.5 8.7 15.5 6.5C15.5 4.3 14.5 3.4 13 3.4H12V5.2C12 6.7 10.8 7.6 9.2 7.6H5.8C4.7 7.6 4.3 8.3 4.3 9.4V12.5C4.3 14 5.5 15 8.2 15Z" fill="#f1cf3b"/><path d="M12 14H15L13.5 15.5Z" fill="#444"/></g>
<g transform="translate(1018.42,108.62) scale(0.66)"><circle cx="8" cy="8" r="6.5" fill="#fbfbfb" stroke="#777" stroke-width="1"/><path d="M8 3.5V8L11 10.5" fill="none" stroke="#666" stroke-width="0.9"/></g>
<g transform="translate(1033.62,108.62) scale(0.66)"><path d="M3 1H10L13 4V15H3Z" fill="#e9e9e9" stroke="#d0d1d2" stroke-width="0.8"/><path d="M5 6H11M5 8.5H11M5 11H11" stroke="#d0d1d2" stroke-width="0.8"/></g>
<g transform="translate(1051.02,108.62) scale(0.66)"><path d="M2 2H12L14.5 7L12 12H8L6 15V12H2Z" fill="#f1e23a" stroke="#a99a1a" stroke-width="0.7"/></g>
<g transform="translate(1069.42,108.62) scale(0.66)"><path d="M2 2.5A2.5 2.5 0 0 1 6 3L8 5L6 7L4 5A2.5 2.5 0 0 1 2 2.5Z" fill="#999"/><path d="M6.5 6.5L14 14" stroke="#e0b830" stroke-width="2.5" stroke-linecap="round"/><path d="M6 6L9 9" stroke="#555" stroke-width="2.5"/></g>
<path d="M1047.5 108V120" stroke="#d9dadb" stroke-width="1" stroke-dasharray="1 1"/>
<path d="M1065.5 108V120" stroke="#d9dadb" stroke-width="1" stroke-dasharray="1 1"/>
<circle cx="991.8" cy="130" r="2.6" fill="none" stroke="#666" stroke-width="0.9"/><path d="M993.6 131.9L995.5 133.8" stroke="#666" stroke-width="1"/>
<circle cx="9" cy="638.5" r="2.6" fill="none" stroke="#666" stroke-width="0.9"/><path d="M10.8 640.4L12.7 642.3" stroke="#666" stroke-width="1"/>
<path d="M991 144.0l2.2 2l-2.2 2z" fill="#555"/>
<circle cx="1004.5" cy="146.0" r="4" fill="#fafafa" stroke="#777" stroke-width="0.8"/><path d="M1004.5 143.5V146.0L1006.5 147.5" fill="none" stroke="#666" stroke-width="0.7"/>
<path d="M991 156.5l2.2 2l-2.2 2z" fill="#555"/>
<circle cx="1004.3" cy="158.2" r="3.3" fill="#f3e6c8" stroke="#78a83c" stroke-width="1.8"/><circle cx="1004.3" cy="158.2" r="1.1" fill="#d9873a"/><path d="M1005.5 159.5L1008 162.1" stroke="#78a83c" stroke-width="1.7"/>
<path d="M991 169.0l2.2 2l-2.2 2z" fill="#555"/>
<circle cx="1004.3" cy="170.7" r="3.3" fill="#f3e6c8" stroke="#78a83c" stroke-width="1.8"/><circle cx="1004.3" cy="170.7" r="1.1" fill="#d9873a"/><path d="M1005.5 172.0L1008 174.6" stroke="#78a83c" stroke-width="1.7"/>
<path d="M991 181.5l2.2 2l-2.2 2z" fill="#555"/>
<circle cx="1004.3" cy="183.2" r="3.3" fill="#f3e6c8" stroke="#78a83c" stroke-width="1.8"/><circle cx="1004.3" cy="183.2" r="1.1" fill="#d9873a"/><path d="M1005.5 184.5L1008 187.1" stroke="#78a83c" stroke-width="1.7"/>
<path d="M991 194.0l2.2 2l-2.2 2z" fill="#555"/>
<circle cx="1004.3" cy="195.7" r="3.3" fill="#f3e6c8" stroke="#78a83c" stroke-width="1.8"/><circle cx="1004.3" cy="195.7" r="1.1" fill="#d9873a"/><path d="M1005.5 197.0L1008 199.6" stroke="#78a83c" stroke-width="1.7"/>
<path d="M991 206.5l2.2 2l-2.2 2z" fill="#555"/>
<circle cx="1004.3" cy="208.2" r="3.3" fill="#f3e6c8" stroke="#78a83c" stroke-width="1.8"/><circle cx="1004.3" cy="208.2" r="1.1" fill="#d9873a"/><path d="M1005.5 209.5L1008 212.1" stroke="#78a83c" stroke-width="1.7"/>
<path d="M990 220.0h4l-2 2.2z" fill="#555"/>
<circle cx="1004.3" cy="220.7" r="3.3" fill="#f3e6c8" stroke="#78a83c" stroke-width="1.8"/><circle cx="1004.3" cy="220.7" r="1.1" fill="#d9873a"/><path d="M1005.5 222.0L1008 224.6" stroke="#78a83c" stroke-width="1.7"/>
<g transform="translate(1011.5,229.0) scale(0.56)"><path d="M8 0.5L9.2 3.2L12 1.8L11.8 4.8L15 5L13.2 7.6L15.5 9.6L12.6 10.6L13.6 13.5L10.6 13.1L9.6 16L8 13.8L6.4 16L5.4 13.1L2.4 13.5L3.4 10.6L0.5 9.6L2.8 7.6L1 5L4.2 4.8L4 1.8L6.8 3.2Z" fill="#86aee4"/><circle cx="8" cy="8.5" r="2.4" fill="#e3ecf8"/></g>
<g transform="translate(1011.5,241.5) scale(0.56)"><path d="M8 0.5L9.2 3.2L12 1.8L11.8 4.8L15 5L13.2 7.6L15.5 9.6L12.6 10.6L13.6 13.5L10.6 13.1L9.6 16L8 13.8L6.4 16L5.4 13.1L2.4 13.5L3.4 10.6L0.5 9.6L2.8 7.6L1 5L4.2 4.8L4 1.8L6.8 3.2Z" fill="#86aee4"/><circle cx="8" cy="8.5" r="2.4" fill="#e3ecf8"/></g>
<g transform="translate(1011.5,254.0) scale(0.56)"><path d="M8 0.5L9.2 3.2L12 1.8L11.8 4.8L15 5L13.2 7.6L15.5 9.6L12.6 10.6L13.6 13.5L10.6 13.1L9.6 16L8 13.8L6.4 16L5.4 13.1L2.4 13.5L3.4 10.6L0.5 9.6L2.8 7.6L1 5L4.2 4.8L4 1.8L6.8 3.2Z" fill="#86aee4"/><circle cx="8" cy="8.5" r="2.4" fill="#e3ecf8"/></g>
<g transform="translate(1011.5,266.5) scale(0.56)"><path d="M8 0.5L9.2 3.2L12 1.8L11.8 4.8L15 5L13.2 7.6L15.5 9.6L12.6 10.6L13.6 13.5L10.6 13.1L9.6 16L8 13.8L6.4 16L5.4 13.1L2.4 13.5L3.4 10.6L0.5 9.6L2.8 7.6L1 5L4.2 4.8L4 1.8L6.8 3.2Z" fill="#86aee4"/><circle cx="8" cy="8.5" r="2.4" fill="#e3ecf8"/></g>
<g transform="translate(1011.5,279.0) scale(0.56)"><path d="M8 0.5L9.2 3.2L12 1.8L11.8 4.8L15 5L13.2 7.6L15.5 9.6L12.6 10.6L13.6 13.5L10.6 13.1L9.6 16L8 13.8L6.4 16L5.4 13.1L2.4 13.5L3.4 10.6L0.5 9.6L2.8 7.6L1 5L4.2 4.8L4 1.8L6.8 3.2Z" fill="#86aee4"/><circle cx="8" cy="8.5" r="2.4" fill="#e3ecf8"/></g>
<path d="M991 294.0l2.2 2l-2.2 2z" fill="#555"/>
<circle cx="1004.3" cy="295.7" r="3.3" fill="#f3e6c8" stroke="#78a83c" stroke-width="1.8"/><circle cx="1004.3" cy="295.7" r="1.1" fill="#d9873a"/><path d="M1005.5 297.0L1008 299.6" stroke="#78a83c" stroke-width="1.7"/>
<path d="M991 306.5l2.2 2l-2.2 2z" fill="#555"/>
<circle cx="1004.3" cy="308.2" r="3.3" fill="#f3e6c8" stroke="#78a83c" stroke-width="1.8"/><circle cx="1004.3" cy="308.2" r="1.1" fill="#d9873a"/><path d="M1005.5 309.5L1008 312.1" stroke="#78a83c" stroke-width="1.7"/>
<path d="M991 319.0l2.2 2l-2.2 2z" fill="#555"/>
<circle cx="1004.3" cy="320.7" r="3.3" fill="#f3e6c8" stroke="#78a83c" stroke-width="1.8"/><circle cx="1004.3" cy="320.7" r="1.1" fill="#d9873a"/><path d="M1005.5 322.0L1008 324.6" stroke="#78a83c" stroke-width="1.7"/>
<path d="M991 331.5l2.2 2l-2.2 2z" fill="#555"/>
<circle cx="1004.3" cy="333.2" r="3.3" fill="#f3e6c8" stroke="#78a83c" stroke-width="1.8"/><circle cx="1004.3" cy="333.2" r="1.1" fill="#d9873a"/><path d="M1005.5 334.5L1008 337.1" stroke="#78a83c" stroke-width="1.7"/>
<path d="M991 344.0l2.2 2l-2.2 2z" fill="#555"/>
<circle cx="1004.3" cy="345.7" r="3.3" fill="#f3e6c8" stroke="#78a83c" stroke-width="1.8"/><circle cx="1004.3" cy="345.7" r="1.1" fill="#d9873a"/><path d="M1005.5 347.0L1008 349.6" stroke="#78a83c" stroke-width="1.7"/>
<path d="M991 356.5l2.2 2l-2.2 2z" fill="#555"/>
<circle cx="1004.3" cy="358.2" r="3.3" fill="#f3e6c8" stroke="#78a83c" stroke-width="1.8"/><circle cx="1004.3" cy="358.2" r="1.1" fill="#d9873a"/><path d="M1005.5 359.5L1008 362.1" stroke="#78a83c" stroke-width="1.7"/>
<path d="M991 369.0l2.2 2l-2.2 2z" fill="#555"/>
<circle cx="1004.3" cy="370.7" r="3.3" fill="#f3e6c8" stroke="#78a83c" stroke-width="1.8"/><circle cx="1004.3" cy="370.7" r="1.1" fill="#d9873a"/><path d="M1005.5 372.0L1008 374.6" stroke="#78a83c" stroke-width="1.7"/>
<path d="M991 381.5l2.2 2l-2.2 2z" fill="#555"/>
<circle cx="1004.3" cy="383.2" r="3.3" fill="#f3e6c8" stroke="#78a83c" stroke-width="1.8"/><circle cx="1004.3" cy="383.2" r="1.1" fill="#d9873a"/><path d="M1005.5 384.5L1008 387.1" stroke="#78a83c" stroke-width="1.7"/>
<path d="M991 394.0l2.2 2l-2.2 2z" fill="#555"/>
<circle cx="1004.3" cy="395.7" r="3.3" fill="#f3e6c8" stroke="#78a83c" stroke-width="1.8"/><circle cx="1004.3" cy="395.7" r="1.1" fill="#d9873a"/><path d="M1005.5 397.0L1008 399.6" stroke="#78a83c" stroke-width="1.7"/>
<path d="M991 406.5l2.2 2l-2.2 2z" fill="#555"/>
<circle cx="1004.3" cy="408.2" r="3.3" fill="#f3e6c8" stroke="#78a83c" stroke-width="1.8"/><circle cx="1004.3" cy="408.2" r="1.1" fill="#d9873a"/><path d="M1005.5 409.5L1008 412.1" stroke="#78a83c" stroke-width="1.7"/>
<path d="M991 419.0l2.2 2l-2.2 2z" fill="#555"/>
<circle cx="1004.3" cy="420.7" r="3.3" fill="#f3e6c8" stroke="#78a83c" stroke-width="1.8"/><circle cx="1004.3" cy="420.7" r="1.1" fill="#d9873a"/><path d="M1005.5 422.0L1008 424.6" stroke="#78a83c" stroke-width="1.7"/>
<path d="M991 431.5l2.2 2l-2.2 2z" fill="#555"/>
<circle cx="1004.3" cy="433.2" r="3.3" fill="#f3e6c8" stroke="#78a83c" stroke-width="1.8"/><circle cx="1004.3" cy="433.2" r="1.1" fill="#d9873a"/><path d="M1005.5 434.5L1008 437.1" stroke="#78a83c" stroke-width="1.7"/>
<path d="M991 444.0l2.2 2l-2.2 2z" fill="#555"/>
<circle cx="1004.3" cy="445.7" r="3.3" fill="#f3e6c8" stroke="#78a83c" stroke-width="1.8"/><circle cx="1004.3" cy="445.7" r="1.1" fill="#d9873a"/><path d="M1005.5 447.0L1008 449.6" stroke="#78a83c" stroke-width="1.7"/>
<path d="M991 456.5l2.2 2l-2.2 2z" fill="#555"/>
<circle cx="1004.3" cy="458.2" r="3.3" fill="#f3e6c8" stroke="#78a83c" stroke-width="1.8"/><circle cx="1004.3" cy="458.2" r="1.1" fill="#d9873a"/><path d="M1005.5 459.5L1008 462.1" stroke="#78a83c" stroke-width="1.7"/>
<path d="M991 469.0l2.2 2l-2.2 2z" fill="#555"/>
<path d="M1000 475.0V470.0L1003 467.0L1006 471.0L1009 469.0V475.0Z" fill="#1f6f8b"/><path d="M1000 475.0h9" stroke="#4a9a3a" stroke-width="1.2"/>
<path d="M991 481.5l2.2 2l-2.2 2z" fill="#555"/>
<path d="M1004.5 479.5C1008 482.5 1008 486.5 1004.5 487.5C1001 486.5 1001 482.5 1004.5 479.5Z" fill="#d9e8c8" stroke="#8aaa70" stroke-width="0.6"/>
<path d="M991 494.0l2.2 2l-2.2 2z" fill="#555"/>
<circle cx="1004.5" cy="496.0" r="4.2" fill="#2d5aa8"/><path d="M1007 493.5C1005 492.0 1002 493.0 1002.5 495.0C1003 497.0 1006.5 496.0 1006.5 498.0C1006.5 499.5 1003.5 500.0 1002 498.5" fill="none" stroke="#fff" stroke-width="1"/>
<circle cx="801" cy="639" r="4" fill="#777"/><path d="M797.5 635.5L804.5 642.5" stroke="#eee" stroke-width="1"/><circle cx="801" cy="639" r="2" fill="#333"/>
<path d="M876.0 638.0h4l-2 2z" fill="#555"/>
<rect x="893.5" y="638" width="7" height="5.5" rx="0.8" fill="#666"/><path d="M895 638V636.5A2 2 0 0 1 899 636.5V638" fill="none" stroke="#666" stroke-width="1.1"/>
<path d="M986.7 636.8L988.5 634.8L990.3 636.8M986.7 641.2L988.5 643.2L990.3 641.2" fill="none" stroke="#555" stroke-width="0.8"/><path d="M984.5 632.5V646" stroke="#d5d6d7" stroke-width="0.8"/>
<path d="M1078.2 636.8L1080 634.8L1081.8 636.8M1078.2 641.2L1080 643.2L1081.8 641.2" fill="none" stroke="#555" stroke-width="0.8"/><path d="M1076 632.5V646" stroke="#d5d6d7" stroke-width="0.8"/>
<rect x="1089.8" y="635.3" width="7.3" height="7.3" fill="#fcfcfc" stroke="#b9babb" stroke-width="0.7"/><path d="M1091 638.8L1092.8 641.2L1095.8 636.2" fill="none" stroke="#111" stroke-width="1.1"/>
<circle cx="1133" cy="639" r="3.6" fill="#888"/><path d="M1129.5 639H1136.5M1133 635.5V642.5" stroke="#ddd" stroke-width="0.5"/>
<path d="M1183 635.5C1183 633.5 1193 633.5 1193 635.5V640C1193 642 1190 642 1188 642L1185.5 644V642C1183 642 1183 641 1183 640Z" fill="#555"/><path d="M1185.5 638.5h5" stroke="#eee" stroke-width="0.8" stroke-dasharray="1 1"/>
<circle cx="8" cy="6.3" r="4.6" fill="none" stroke="#62a93a" stroke-width="2.2"/><circle cx="8" cy="6.3" r="1.6" fill="#e8b33c"/><path d="M9.5 8L12.5 11.5" stroke="#62a93a" stroke-width="2.2"/>
<path d="M1158.3 4L1161.5 7L1164.7 4" fill="none" stroke="#e3e5e7" stroke-width="0.9"/>
<path d="M1176.3 2L1179.8 5.5L1176.3 9L1172.8 5.5Z" fill="none" stroke="#e3e5e7" stroke-width="0.9"/>
<circle cx="1191.3" cy="5.6" r="5.8" fill="#fcfcfc"/><path d="M1189 3.3L1193.6 7.9M1193.6 3.3L1189 7.9" stroke="#474f56" stroke-width="0.9"/></svg>
</body></html>
